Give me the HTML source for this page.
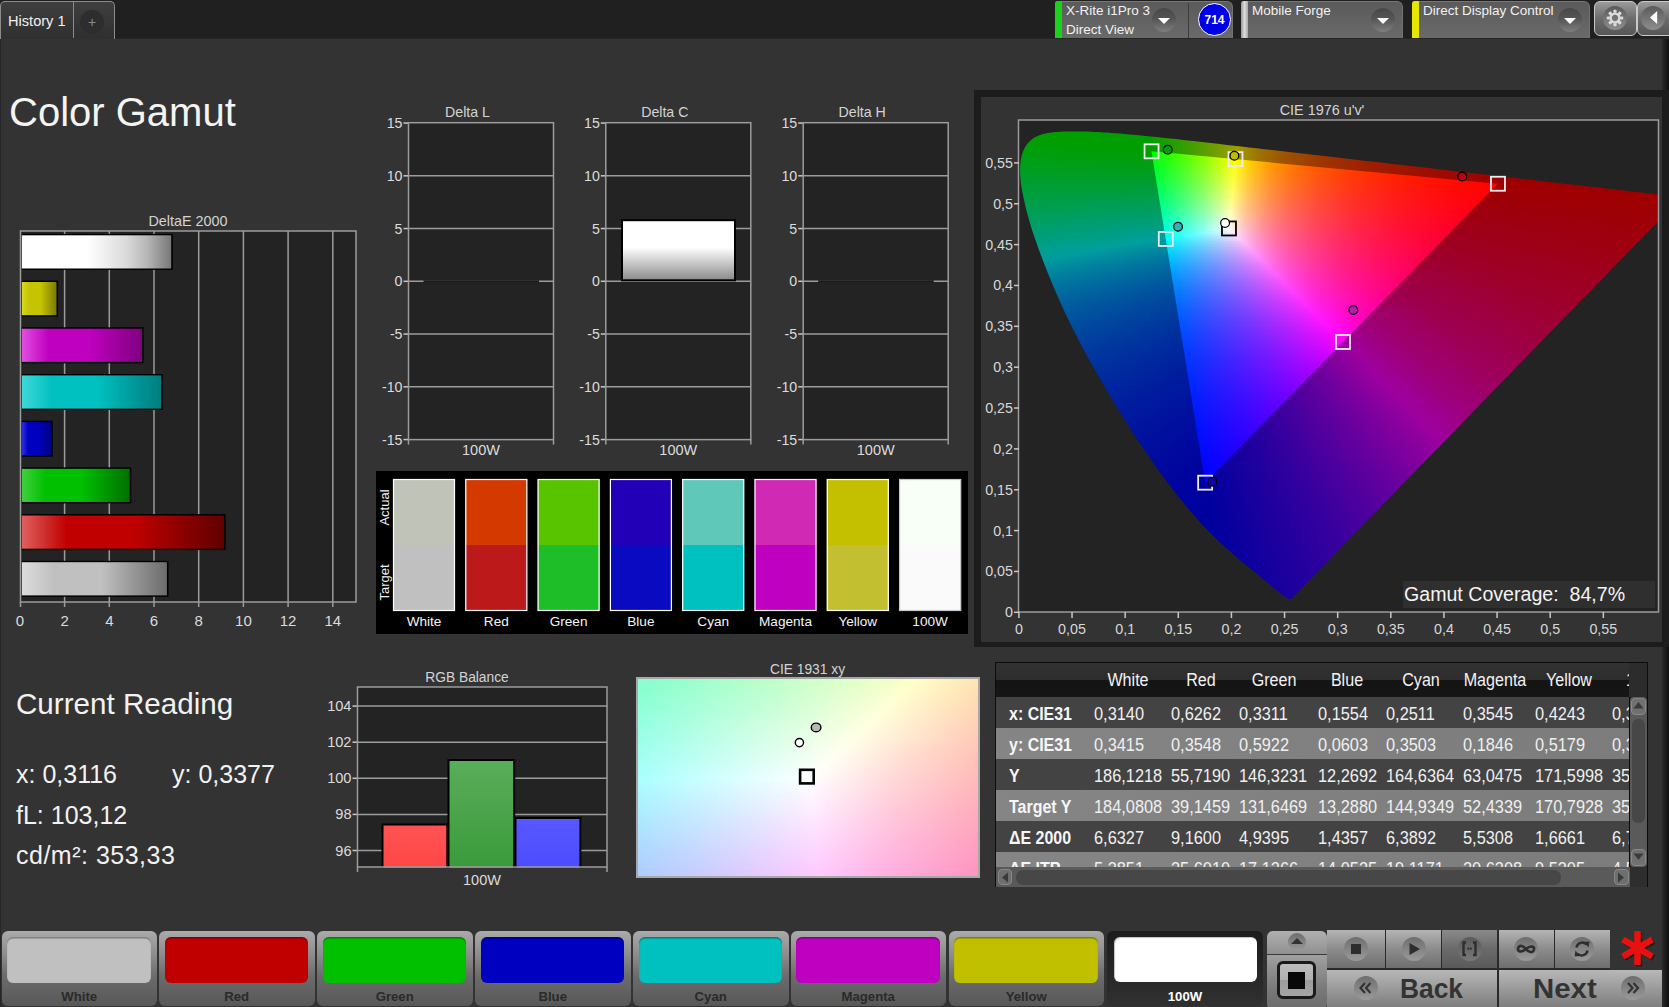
<!DOCTYPE html><html><head><meta charset="utf-8"><style>
*{box-sizing:border-box}
html,body{margin:0;padding:0}
body{width:1669px;height:1007px;overflow:hidden;position:relative;background:#333;font-family:"Liberation Sans",sans-serif;color:#e8e8e8}
.a{position:absolute}
.t{position:absolute;white-space:nowrap;line-height:1}
.rows i{position:absolute;left:0;right:0;display:block}
svg{position:absolute;overflow:visible}
</style></head><body>
<div class="a" style="left:0;top:0;width:1669px;height:39px;background:#202020"></div>
<div class="a" style="left:0;top:38px;width:1669px;height:1px;background:#262626"></div>
<div class="a" style="left:0;top:39px;width:1px;height:968px;background:#262626"></div>
<div class="a" style="left:0;top:1px;width:115px;height:38px;border:1px solid #8c8c8c;border-bottom:none;border-radius:5px 5px 0 0;background:linear-gradient(#3f3f3f,#2f2f2f)"></div>
<div class="a" style="left:73px;top:2px;width:1px;height:36px;background:#8c8c8c"></div>
<div class="a" style="left:80px;top:10px;width:24px;height:24px;border-radius:50%;background:#2d2d2d"></div>
<div class="t" style="left:92px;top:15.15px;font-size:14px;color:#8a8a8a;font-weight:400;transform:translateX(-50%);transform-origin:50% 0;">+</div>
<div class="t" style="left:8px;top:13.64px;font-size:14.6px;color:#f0f0f0;font-weight:400;">History 1</div>
<div class="a" style="left:1055px;top:1px;width:178px;height:37px;border-radius:3px 6px 0 0;border-top:1px solid #787878;border-right:1px solid #727272;background:linear-gradient(#5a5a5a,#6a6a6a)"></div>
<div class="a" style="left:1055px;top:1px;width:7px;height:37px;border-radius:3px 0 0 0;background:#19d219"></div>
<div class="t" style="left:1066px;top:3.57px;font-size:13.5px;color:#f2f2f2;font-weight:400;">X-Rite i1Pro 3</div>
<div class="t" style="left:1066px;top:22.57px;font-size:13.5px;color:#f2f2f2;font-weight:400;">Direct View</div>
<div class="a" style="left:1152px;top:7.5px;width:24px;height:24px;border-radius:50%;background:linear-gradient(#484848,#555 45%,#7e7e7e)"></div>
<svg style="left:1157px;top:16.5px" width="14" height="8"><path d="M1 1H13L7 7Z" fill="#fff"/></svg>
<div class="a" style="left:1188px;top:3px;width:1px;height:35px;background:#3c3c3c"></div>
<div class="a" style="left:1198px;top:3px;width:33px;height:33px;border-radius:50%;background:#0000e6;border:1px solid #fff"></div>
<div class="t" style="left:1214.5px;top:13.84px;font-size:12px;color:#fff;font-weight:700;transform:translateX(-50%);transform-origin:50% 0;">714</div>
<div class="a" style="left:1241px;top:1px;width:162px;height:37px;border-radius:3px 6px 0 0;border-top:1px solid #787878;border-right:1px solid #727272;background:linear-gradient(#5a5a5a,#6a6a6a)"></div>
<div class="a" style="left:1241px;top:1px;width:7px;height:37px;border-radius:3px 0 0 0;background:linear-gradient(90deg,#9a9a9a,#dcdcdc,#a8a8a8)"></div>
<div class="t" style="left:1252px;top:3.57px;font-size:13.5px;color:#f2f2f2;font-weight:400;">Mobile Forge</div>
<div class="a" style="left:1371px;top:7.5px;width:24px;height:24px;border-radius:50%;background:linear-gradient(#484848,#555 45%,#7e7e7e)"></div>
<svg style="left:1376px;top:16.5px" width="14" height="8"><path d="M1 1H13L7 7Z" fill="#fff"/></svg>
<div class="a" style="left:1412px;top:1px;width:178px;height:37px;border-radius:3px 6px 0 0;border-top:1px solid #787878;border-right:1px solid #727272;background:linear-gradient(#5a5a5a,#6a6a6a)"></div>
<div class="a" style="left:1412px;top:1px;width:7px;height:37px;border-radius:3px 0 0 0;background:#e6e600"></div>
<div class="t" style="left:1423px;top:3.57px;font-size:13.5px;color:#f2f2f2;font-weight:400;">Direct Display Control</div>
<div class="a" style="left:1558px;top:7.5px;width:24px;height:24px;border-radius:50%;background:linear-gradient(#484848,#555 45%,#7e7e7e)"></div>
<svg style="left:1563px;top:16.5px" width="14" height="8"><path d="M1 1H13L7 7Z" fill="#fff"/></svg>
<div class="a" style="left:1594px;top:1px;width:42.5px;height:35px;border:1.5px solid #c8c8c8;border-radius:6px;background:linear-gradient(#9a9a9a,#6c6c6c 50%,#565656)"></div>
<div class="a" style="left:1602.8px;top:6.4px;width:24px;height:24px;border-radius:50%;background:linear-gradient(#5a5a5a,#8e8e8e)"></div>
<svg style="left:1614.8px;top:18px" width="1" height="1"><g fill="#dcdcdc"><rect x="-1.6" y="-8.2" width="3.2" height="3" rx=".8" transform="rotate(0)"/><rect x="-1.6" y="-8.2" width="3.2" height="3" rx=".8" transform="rotate(45)"/><rect x="-1.6" y="-8.2" width="3.2" height="3" rx=".8" transform="rotate(90)"/><rect x="-1.6" y="-8.2" width="3.2" height="3" rx=".8" transform="rotate(135)"/><rect x="-1.6" y="-8.2" width="3.2" height="3" rx=".8" transform="rotate(180)"/><rect x="-1.6" y="-8.2" width="3.2" height="3" rx=".8" transform="rotate(225)"/><rect x="-1.6" y="-8.2" width="3.2" height="3" rx=".8" transform="rotate(270)"/><rect x="-1.6" y="-8.2" width="3.2" height="3" rx=".8" transform="rotate(315)"/></g><circle r="4.4" fill="none" stroke="#dcdcdc" stroke-width="2.4"/></svg>
<div class="a" style="left:1637px;top:1px;width:40px;height:35px;border:1.5px solid #c8c8c8;border-radius:6px;background:linear-gradient(#9a9a9a,#6c6c6c 50%,#565656)"></div>
<div class="a" style="left:1641px;top:6.4px;width:24px;height:24px;border-radius:50%;background:linear-gradient(#5a5a5a,#8e8e8e)"></div>
<svg style="left:1649px;top:10px" width="10" height="16"><path d="M1 7.5L8.2 1.1V13.9Z" fill="#fff"/></svg>
<div class="a" style="left:1662px;top:39px;width:7px;height:968px;background:linear-gradient(90deg,#2a2a2a,#0e0e0e)"></div>
<div class="t" style="left:9px;top:91.64px;font-size:40px;color:#f4f4f4;font-weight:400;">Color Gamut</div>
<div class="t" style="left:16px;top:688.94px;font-size:29.6px;color:#f2f2f2;font-weight:400;">Current Reading</div>
<div class="t" style="left:16px;top:762.34px;font-size:25px;color:#f2f2f2;font-weight:400;">x: 0,3116</div>
<div class="t" style="left:172px;top:762.34px;font-size:25px;color:#f2f2f2;font-weight:400;">y: 0,3377</div>
<div class="t" style="left:16px;top:802.84px;font-size:25px;color:#f2f2f2;font-weight:400;">fL: 103,12</div>
<div class="t" style="left:16px;top:842.84px;font-size:25px;color:#f2f2f2;font-weight:400;letter-spacing:.5px">cd/m²: 353,33</div>
<div class="a" style="left:974px;top:90px;width:695px;height:557px;background:#1c1c1c"></div>
<div class="a" style="left:981px;top:97px;width:681px;height:544.5px;background:#333"></div>
<div class="a" style="left:1019px;top:120px;width:639px;height:492px;background:#232323"></div>
<div class="a rows" style="left:1019px;top:120px;width:639px;height:492px;overflow:hidden"><div class="a rows" style="left:0;top:0;width:639px;height:492px;clip-path:polygon(272.7px 478.4px,272.7px 478.4px,272.7px 478.4px,272.6px 478.4px,272.6px 478.4px,272.5px 478.5px,272.5px 478.5px,272.4px 478.6px,272.3px 478.7px,272.2px 478.7px,272.2px 478.7px,272.1px 478.7px,272.0px 478.7px,271.9px 478.7px,271.8px 478.8px,271.7px 478.9px,271.6px 478.9px,271.4px 479.0px,271.3px 479.0px,271.2px 479.0px,271.0px 479.0px,270.9px 479.0px,270.7px 479.0px,270.5px 479.0px,270.3px 479.0px,270.1px 479.0px,269.9px 479.0px,269.7px 479.0px,269.4px 479.0px,269.1px 478.8px,268.8px 478.7px,268.3px 478.5px,267.8px 478.2px,267.3px 477.8px,266.6px 477.4px,265.9px 476.9px,265.1px 476.3px,264.3px 475.7px,263.4px 475.1px,262.4px 474.3px,261.4px 473.5px,260.2px 472.5px,258.9px 471.5px,257.5px 470.3px,256.0px 469.1px,254.4px 467.8px,252.8px 466.4px,251.1px 464.9px,249.2px 463.3px,247.3px 461.7px,245.2px 460.0px,243.0px 458.2px,240.6px 456.2px,238.1px 454.1px,235.3px 451.9px,232.4px 449.5px,229.4px 447.0px,226.3px 444.4px,223.0px 441.7px,219.5px 438.8px,215.9px 435.7px,212.0px 432.3px,208.0px 428.7px,203.7px 424.9px,199.3px 420.7px,194.7px 416.2px,189.9px 411.5px,184.8px 406.3px,179.3px 400.3px,173.3px 393.4px,166.8px 385.8px,159.9px 377.4px,152.8px 368.3px,145.4px 358.5px,137.7px 347.9px,129.7px 336.6px,121.6px 324.6px,113.3px 311.9px,104.7px 298.3px,96.1px 284.4px,87.7px 270.2px,79.3px 255.7px,70.8px 240.9px,62.7px 226.0px,55.1px 211.3px,48.0px 196.8px,41.3px 182.4px,35.2px 168.3px,29.5px 154.8px,24.5px 142.0px,19.9px 129.7px,15.8px 118.0px,12.2px 107.2px,9.3px 97.2px,6.8px 88.1px,4.9px 79.6px,3.3px 71.8px,2.1px 64.7px,1.4px 58.3px,1.1px 52.5px,1.1px 47.2px,1.5px 42.2px,2.2px 37.8px,3.2px 33.8px,4.5px 30.2px,6.2px 27.0px,8.1px 24.1px,10.3px 21.6px,12.7px 19.5px,15.3px 17.6px,18.1px 16.2px,21.1px 15.0px,24.2px 14.0px,27.4px 13.2px,30.8px 12.7px,34.3px 12.3px,37.9px 11.9px,41.5px 11.7px,45.3px 11.6px,49.1px 11.5px,52.8px 11.4px,56.6px 11.4px,60.4px 11.5px,64.2px 11.5px,68.0px 11.6px,71.9px 11.8px,75.8px 11.9px,79.8px 12.1px,83.9px 12.4px,88.0px 12.6px,92.2px 12.9px,96.5px 13.3px,100.9px 13.6px,105.4px 14.0px,110.0px 14.4px,114.7px 14.8px,119.5px 15.3px,124.4px 15.8px,129.4px 16.3px,134.6px 16.8px,139.8px 17.3px,145.3px 17.9px,150.9px 18.5px,156.6px 19.1px,162.4px 19.8px,168.5px 20.4px,174.6px 21.1px,180.9px 21.8px,187.4px 22.6px,194.1px 23.3px,200.9px 24.1px,207.9px 24.9px,215.1px 25.7px,222.4px 26.5px,229.9px 27.4px,237.6px 28.3px,245.5px 29.2px,253.5px 30.1px,261.7px 31.0px,270.1px 32.0px,278.6px 33.0px,287.3px 34.0px,296.2px 35.0px,305.2px 36.1px,314.4px 37.1px,323.7px 38.2px,333.1px 39.3px,342.6px 40.4px,352.2px 41.5px,361.9px 42.6px,371.7px 43.7px,381.4px 44.8px,391.1px 46.0px,400.6px 47.0px,410.0px 48.1px,419.4px 49.2px,428.7px 50.3px,438.1px 51.4px,447.3px 52.4px,456.5px 53.5px,465.4px 54.5px,474.0px 55.5px,482.5px 56.4px,490.7px 57.4px,498.6px 58.3px,506.3px 59.2px,513.8px 60.0px,521.0px 60.9px,528.0px 61.7px,534.6px 62.5px,541.0px 63.2px,547.1px 63.9px,552.9px 64.6px,558.5px 65.2px,563.9px 65.8px,569.0px 66.4px,573.9px 67.0px,578.6px 67.5px,583.0px 68.0px,587.3px 68.5px,591.5px 69.0px,595.5px 69.5px,599.4px 69.9px,603.2px 70.3px,606.8px 70.8px,610.2px 71.2px,613.6px 71.5px,616.7px 71.9px,619.7px 72.3px,622.6px 72.6px,625.2px 72.9px,627.8px 73.2px,630.2px 73.4px,632.3px 73.7px,634.2px 73.9px,636.1px 74.1px,638.3px 74.4px,641.0px 74.7px,644.0px 75.0px,646.9px 75.4px,649.3px 75.6px,651.2px 75.9px,652.6px 76.0px,653.8px 76.2px,654.9px 76.3px,656.1px 76.4px,657.1px 76.5px,658.0px 76.6px,658.9px 76.8px,660.0px 76.9px,661.0px 77.0px,662.0px 77.1px,662.6px 77.2px)"><i style="top:0px;height:2px;background:linear-gradient(90deg,#009e00 0px,#009e00 127.5px,#489e00 175.5px,#9e9d00 220.5px,#9e7500 243.5px,#9e5500 271.5px,#9e3b00 307.5px,#9e2700 351.5px,#9e1300 417.5px,#9e0500 502.5px,#9e0000 540.5px,#9e0000 639px)"></i>
<i style="top:2px;height:2px;background:linear-gradient(90deg,#009e00 0px,#019e00 128.5px,#489e00 175.5px,#9e9d00 220.5px,#9e7400 243.5px,#9e5500 271.5px,#9e3b00 307.5px,#9e2600 351.5px,#9e1300 417.5px,#9e0400 503.5px,#9e0000 539.5px,#9e0000 639px)"></i>
<i style="top:4px;height:2px;background:linear-gradient(90deg,#009e00 0px,#009e00 128.5px,#489e00 175.5px,#9e9c00 220.5px,#9e7400 243.5px,#9e5400 271.5px,#9e3a00 307.5px,#9e2600 351.5px,#9e1300 418.5px,#9e0400 504.5px,#9e0000 639px)"></i>
<i style="top:6px;height:2px;background:linear-gradient(90deg,#009e00 0px,#009e00 128.5px,#499e00 176.5px,#9e9e00 219.5px,#9e7500 242.5px,#9e5500 270.5px,#9e3b00 306.5px,#9e2600 350.5px,#9e1300 417.5px,#9e0400 503.5px,#9e0000 639px)"></i>
<i style="top:8px;height:2px;background:linear-gradient(90deg,#009e00 0px,#009e00 128.5px,#479e00 175.5px,#9e9e00 219.5px,#9e7500 242.5px,#9e5400 270.5px,#9e3a00 306.5px,#9e2600 350.5px,#9e1200 417.5px,#9e0300 504.5px,#9e0000 639px)"></i>
<i style="top:10px;height:2px;background:linear-gradient(90deg,#009e00 0px,#009e00 129.5px,#499e00 176.5px,#9e9d00 219.5px,#9e7400 242.5px,#9e5400 270.5px,#9e3a00 306.5px,#9e2500 350.5px,#9e1200 417.5px,#9e0300 505.5px,#9e0000 639px)"></i>
<i style="top:12px;height:2px;background:linear-gradient(90deg,#009e00 0px,#009e00 129.5px,#479e00 175.5px,#9e9d00 219.5px,#9e7400 242.5px,#9e5400 270.5px,#9e3900 306.5px,#9e2500 350.5px,#9e1100 418.5px,#9e0300 507.5px,#9e0000 639px)"></i>
<i style="top:14px;height:2px;background:linear-gradient(90deg,#009e00 0px,#009e00 129.5px,#459e00 174.5px,#9e9c00 219.5px,#9e7300 242.5px,#9e5300 270.5px,#9e3900 306.5px,#9e2400 350.5px,#9e1100 418.5px,#9e0200 508.5px,#9e0000 639px)"></i>
<i style="top:16px;height:2px;background:linear-gradient(90deg,#009e00 0px,#009e00 130.5px,#4b9e00 177.5px,#9e9e00 218.5px,#9e7400 241.5px,#9e5400 269.5px,#9e3a00 304.5px,#9e2500 348.5px,#9e1100 416.5px,#9e0200 506.5px,#9e0000 639px)"></i>
<i style="top:18px;height:2px;background:linear-gradient(90deg,#009e00 0px,#009e00 130.5px,#499e00 176.5px,#9e9e00 218.5px,#9e7400 241.5px,#9e5300 269.5px,#9e3900 304.5px,#9e2500 348.5px,#9e1100 417.5px,#9e0200 507.5px,#9e0000 639px)"></i>
<i style="top:20px;height:2px;background:linear-gradient(90deg,#009e02 0px,#009e00 130.5px,#499e00 176.5px,#9e9d00 218.5px,#9e7500 240.5px,#9e5400 268.5px,#9e3900 303.5px,#9e2400 348.5px,#9e1000 417.5px,#9e0200 508.5px,#9e0000 639px)"></i>
<i style="top:22px;height:2px;background:linear-gradient(90deg,#009e04 0px,#009e00 131.5px,#489e00 176.5px,#9e9d00 218.5px,#9e7400 240.5px,#9e5300 268.5px,#9e3900 303.5px,#9e2400 348.5px,#9e1000 417.5px,#9e0100 509.5px,#9e0000 639px)"></i>
<i style="top:24px;height:2px;background:linear-gradient(90deg,#009e06 0px,#009e00 131.5px,#489e00 176.5px,#9e9d00 218.5px,#9e7400 240.5px,#9e5300 268.5px,#9e3900 303.5px,#9e2300 348.5px,#9e1000 418.5px,#9e0100 510.5px,#9e0000 639px)"></i>
<i style="top:26px;height:2px;background:linear-gradient(90deg,#009e08 0px,#009e00 131.5px,#469e00 175.5px,#9e9c00 218.5px,#9e7300 240.5px,#9e5200 268.5px,#9e3800 303.5px,#9e2300 348.5px,#9e0f00 419.5px,#9e0000 512.5px,#9e0000 639px)"></i>
<i style="top:28px;height:2px;background:linear-gradient(90deg,#009e0a 0px,#009e00 132.5px,#4a9e00 177.5px,#9e9e00 217.5px,#9e7400 239.5px,#9e5300 267.5px,#9e3800 302.5px,#9e2300 347.5px,#9e0f00 417.5px,#9e0000 511.5px,#9e0000 639px)"></i>
<i style="top:30px;height:2px;background:linear-gradient(90deg,#009e0c 0px,#009e00 132.5px,#4a9e00 177.5px,#9e9e00 217.5px,#9e7400 239.5px,#9e5200 267.5px,#9e3800 302.5px,#9e2300 347.5px,#9e0f00 417.5px,#9e0000 510.5px,#9e0000 639px)"></i>
<i style="top:32px;height:2px;background:linear-gradient(90deg,#009e0e 0px,#009e02 132.5px,#489e00 176.5px,#9e9d00 217.5px,#9e7300 239.5px,#9e5200 267.5px,#9e3800 302.5px,#9e2200 347.5px,#9e0f00 416.5px,#9e0000 508.5px,#9e0000 639px)"></i>
<i style="top:34px;height:2px;background:linear-gradient(90deg,#009e10 0px,#019e05 133.5px,#489e00 176.5px,#9e9d00 217.5px,#9e7300 239.5px,#9e5100 267.5px,#9e3700 302.5px,#9e2200 347.5px,#9e0f00 416.5px,#9e0000 506.5px,#9e0000 639px)"></i>
<i style="top:36px;height:2px;background:linear-gradient(90deg,#009e12 0px,#009e08 133.5px,#489e02 176.5px,#9e9c00 217.5px,#9e7200 239.5px,#9e5100 267.5px,#9e3700 302.5px,#9e2200 347.5px,#9e0f00 415.5px,#9e0000 504.5px,#9e0000 639px)"></i>
<i style="top:38px;height:2px;background:linear-gradient(90deg,#009e14 0px,#009e0a 133.5px,#4a9e05 177.5px,#9e9e00 216.5px,#9e7300 238.5px,#9e5100 266.5px,#9e3700 301.5px,#9e2200 345.5px,#9e0f00 413.5px,#9e0000 502.5px,#9e0000 639px)"></i>
<i style="top:40px;height:2px;background:linear-gradient(90deg,#009e16 0px,#019e0d 134.5px,#499e09 177.5px,#9e9e03 216.5px,#9e7300 238.5px,#9e5100 266.5px,#9e3600 301.5px,#9e2200 345.5px,#9e0f00 412.5px,#9e0000 500.5px,#9e0000 639px)"></i>
<i style="top:42px;height:2px;background:linear-gradient(90deg,#009e19 0px,#009e10 134.5px,#499e0c 177.5px,#9e9d07 216.5px,#9e7202 238.5px,#9e5000 266.5px,#9e3600 301.5px,#9e2100 345.5px,#9e0e00 411.5px,#9e0000 498.5px,#9e0000 639px)"></i>
<i style="top:44px;height:2px;background:linear-gradient(90deg,#009e1b 0px,#009e13 134.5px,#479e0f 176.5px,#9e9d0a 216.5px,#9e7205 238.5px,#9e5001 266.5px,#9e3600 301.5px,#9e2100 345.5px,#9e0e00 410.5px,#9e0000 496.5px,#9e0000 639px)"></i>
<i style="top:46px;height:2px;background:linear-gradient(90deg,#009e1d 0px,#019e16 135.5px,#479e12 176.5px,#9e9c0e 216.5px,#9e7108 238.5px,#9e5004 265.5px,#9e3600 300.5px,#9e2100 345.5px,#9e0e00 410.5px,#9e0000 494.5px,#9e0000 639px)"></i>
<i style="top:48px;height:2px;background:linear-gradient(90deg,#009e1f 0px,#009e19 135.5px,#4b9e16 178.5px,#9e9e12 215.5px,#9e720b 237.5px,#9e5106 264.5px,#9e3602 299.5px,#9e2100 344.5px,#9e0e00 408.5px,#9e0000 492.5px,#9e0000 639px)"></i>
<i style="top:50px;height:2px;background:linear-gradient(90deg,#009e21 0px,#009e1c 135.5px,#499e19 177.5px,#9e9e16 215.5px,#9e720e 237.5px,#9e5008 264.5px,#9e3504 299.5px,#9e2000 344.5px,#9e0e00 407.5px,#9e0000 490.5px,#9e0000 639px)"></i>
<i style="top:52px;height:2px;background:linear-gradient(90deg,#009e23 0px,#019e1f 136.5px,#499e1d 177.5px,#9e9d1a 215.5px,#9e7111 237.5px,#9e500b 264.5px,#9e3505 299.5px,#9e2001 344.5px,#9e0e00 407.5px,#9e0000 488.5px,#9e0000 639px)"></i>
<i style="top:54px;height:2px;background:linear-gradient(90deg,#009e26 0px,#009e22 136.5px,#499e20 177.5px,#9e9d1e 215.5px,#9e7114 237.5px,#9e4f0d 264.5px,#9e3507 299.5px,#9e1f03 344.5px,#9e0e00 406.5px,#9e0000 487.5px,#9e0000 639px)"></i>
<i style="top:56px;height:2px;background:linear-gradient(90deg,#009e28 0px,#009e25 136.5px,#479e24 176.5px,#9e9c21 215.5px,#9e7017 237.5px,#9e4f0f 264.5px,#9e3409 299.5px,#9e1f04 344.5px,#9e0d00 406.5px,#9e0000 485.5px,#9e0000 639px)"></i>
<i style="top:58px;height:2px;background:linear-gradient(90deg,#009e2a 0px,#009e28 136.5px,#449e27 175.5px,#9e9c25 215.5px,#9e701a 237.5px,#9e4e12 264.5px,#9e340b 299.5px,#9e1f06 344.5px,#9e0d01 405.5px,#9e0000 483.5px,#9e0000 639px)"></i>
<i style="top:60px;height:2px;background:linear-gradient(90deg,#009e2d 0px,#009e2b 137.5px,#4a9e2b 178.5px,#9e9e2a 214.5px,#9e711e 236.5px,#9e4f14 263.5px,#9e340d 298.5px,#9e1f07 342.5px,#9e0d02 403.5px,#9e0000 481.5px,#9e0000 639px)"></i>
<i style="top:62px;height:2px;background:linear-gradient(90deg,#009e2f 0px,#009e2e 137.5px,#489e2e 177.5px,#9e9e2e 214.5px,#9e7221 235.5px,#9e4e17 263.5px,#9e330f 298.5px,#9e1f09 342.5px,#9e0d04 402.5px,#9e0000 479.5px,#9e0000 639px)"></i>
<i style="top:64px;height:2px;background:linear-gradient(90deg,#009e31 0px,#009e32 137.5px,#469e32 176.5px,#9e9d32 214.5px,#9e7124 235.5px,#9e4e19 263.5px,#9e3311 298.5px,#9e1e0a 342.5px,#9e0d05 401.5px,#9e0001 477.5px,#9e0000 639px)"></i>
<i style="top:66px;height:2px;background:linear-gradient(90deg,#009e34 0px,#009e35 138.5px,#489e36 177.5px,#9e9d36 214.5px,#9e7127 235.5px,#9e4d1c 263.5px,#9e3312 298.5px,#9e1e0c 342.5px,#9e0d06 400.5px,#9e0002 475.5px,#9e0000 639px)"></i>
<i style="top:68px;height:2px;background:linear-gradient(90deg,#009e36 0px,#009e38 138.5px,#469e3a 176.5px,#9e9c3a 214.5px,#9e702b 235.5px,#9e4e1e 262.5px,#9e3315 297.5px,#9e1d0d 342.5px,#9e0d07 399.5px,#9e0003 473.5px,#9e0000 639px)"></i>
<i style="top:70px;height:2px;background:linear-gradient(90deg,#009e38 0px,#009e3c 138.5px,#489e3d 177.5px,#9e9e3f 213.5px,#9e712e 234.5px,#9e4e21 261.5px,#9e3317 296.5px,#9e1d0f 341.5px,#9e0d08 398.5px,#9e0004 471.5px,#9e0000 639px)"></i>
<i style="top:72px;height:2px;background:linear-gradient(90deg,#009e3b 0px,#009e3f 139.5px,#4a9e41 178.5px,#9e9e44 213.5px,#9e7132 234.5px,#9e4e24 261.5px,#9e3219 296.5px,#9e1d10 340.5px,#9e0d0a 397.5px,#9e0005 469.5px,#9e0000 639px)"></i>
<i style="top:74px;height:2px;background:linear-gradient(90deg,#009e3d 0px,#009e43 139.5px,#479e45 177.5px,#9e9d48 213.5px,#9e7035 234.5px,#9e4d26 261.5px,#9e321b 296.5px,#9e1d12 340.5px,#9e0d0b 396.5px,#9e0006 467.5px,#9e0000 639px)"></i>
<i style="top:76px;height:2px;background:linear-gradient(90deg,#009e40 0px,#009e46 139.5px,#459e49 176.5px,#9e9d4c 213.5px,#9e7038 234.5px,#9e4d29 261.5px,#9e311c 296.5px,#9e1d13 340.5px,#9e0d0c 395.5px,#9e0007 465.5px,#9e0000 639px)"></i>
<i style="top:78px;height:2px;background:linear-gradient(90deg,#009e42 0px,#009e4a 140.5px,#479e4d 177.5px,#9e9c51 213.5px,#9e6f3c 234.5px,#9e4c2b 261.5px,#9e311e 296.5px,#9e1c15 340.5px,#9e0c0d 394.5px,#9e0008 463.5px,#9e0000 639px)"></i>
<i style="top:80px;height:2px;background:linear-gradient(90deg,#009e45 0px,#009e4e 140.5px,#459e51 176.5px,#9e9c55 213.5px,#9e6f3f 234.5px,#9e4c2e 261.5px,#9e3020 296.5px,#9e1c16 340.5px,#9e0c0f 393.5px,#9e0009 461.5px,#9e0001 639px)"></i>
<i style="top:82px;height:2px;background:linear-gradient(90deg,#009e47 0px,#009e51 140.5px,#479e56 177.5px,#9e9e5b 212.5px,#9e7043 233.5px,#9e4c31 260.5px,#9e3123 295.5px,#9e1c18 339.5px,#9e0c10 392.5px,#9e000a 459.5px,#9e0001 639px)"></i>
<i style="top:84px;height:2px;background:linear-gradient(90deg,#009e4a 0px,#009e55 141.5px,#499e5a 178.5px,#9e9d5f 212.5px,#9e6f46 233.5px,#9e4c33 260.5px,#9e3025 295.5px,#9e1b19 339.5px,#9e0c11 392.5px,#9e000b 458.5px,#9e0002 639px)"></i>
<i style="top:86px;height:2px;background:linear-gradient(90deg,#009e4c 0px,#009e59 141.5px,#479e5e 177.5px,#9e9d64 212.5px,#9e6f4a 233.5px,#9e4b36 260.5px,#9e3027 294.5px,#9e1b1b 339.5px,#9e0c12 391.5px,#9e000c 456.5px,#9e0002 639px)"></i>
<i style="top:88px;height:2px;background:linear-gradient(90deg,#009e4f 0px,#009e5d 141.5px,#469e62 177.5px,#9e9c69 212.5px,#9e835a 222.5px,#9e6e4d 233.5px,#9e4b39 260.5px,#9e3029 294.5px,#9e1b1d 339.5px,#9e0c14 390.5px,#9e000d 454.5px,#9e0003 639px)"></i>
<i style="top:90px;height:2px;background:linear-gradient(90deg,#009e51 0px,#019e61 142.5px,#469e67 177.5px,#9e9c6d 212.5px,#9e835e 222.5px,#9e6d51 233.5px,#9e4b3c 259.5px,#9e302b 293.5px,#9e1a1e 338.5px,#9e0c15 389.5px,#9e000e 452.5px,#9e0004 639px)"></i>
<i style="top:92px;height:2px;background:linear-gradient(90deg,#009e54 0px,#009e65 142.5px,#489e6c 178.5px,#9e9e74 211.5px,#9e7057 231.5px,#9e4b3f 258.5px,#9e302e 292.5px,#9e1a20 337.5px,#9e0c17 387.5px,#9e000f 450.5px,#9e0004 639px)"></i>
<i style="top:94px;height:2px;background:linear-gradient(90deg,#009e57 0px,#009e69 142.5px,#489e70 178.5px,#9e9d79 211.5px,#9e705a 231.5px,#9e4b42 258.5px,#9e3030 292.5px,#9e1a22 337.5px,#9e0010 448.5px,#9e0005 639px)"></i>
<i style="top:96px;height:2px;background:linear-gradient(90deg,#009e59 0px,#019e6d 143.5px,#489e75 178.5px,#9e9d7d 211.5px,#9e6f5e 231.5px,#9e4a45 258.5px,#9e2f32 292.5px,#9e1a23 337.5px,#9e0012 446.5px,#9e0005 639px)"></i>
<i style="top:98px;height:2px;background:linear-gradient(90deg,#009e5c 0px,#009e71 143.5px,#489e79 178.5px,#9e9c82 211.5px,#9e6e62 231.5px,#9e4a47 258.5px,#9e2f34 292.5px,#9e1925 337.5px,#9e0013 444.5px,#9e0006 639px)"></i>
<i style="top:100px;height:2px;background:linear-gradient(90deg,#009e5f 0px,#009e75 143.5px,#469e7e 177.5px,#9e9c87 211.5px,#9e6e65 231.5px,#9e494a 258.5px,#9e2e36 292.5px,#9e1926 337.5px,#9e0014 442.5px,#9e0007 639px)"></i>
<i style="top:102px;height:2px;background:linear-gradient(90deg,#009e61 0px,#019e79 144.5px,#4a9e83 179.5px,#9e9e8f 210.5px,#9e867c 219.5px,#9e6f6a 230.5px,#9e4b4f 256.5px,#9e2f39 290.5px,#9e1928 335.5px,#9e0015 440.5px,#9e0007 639px)"></i>
<i style="top:104px;height:2px;background:linear-gradient(90deg,#009e64 0px,#009e7e 144.5px,#4a9e88 179.5px,#9e9e94 210.5px,#9e8580 219.5px,#9e6e6e 230.5px,#9e4a51 256.5px,#9e2e3b 290.5px,#9e192a 335.5px,#9e0017 438.5px,#9e0008 639px)"></i>
<i style="top:106px;height:2px;background:linear-gradient(90deg,#009e67 0px,#009e82 144.5px,#489e8d 178.5px,#9e9d99 210.5px,#9e8585 219.5px,#9e6e72 230.5px,#9e4a54 256.5px,#9e2e3d 290.5px,#9e182c 335.5px,#9e0018 436.5px,#9e0008 639px)"></i>
<i style="top:108px;height:2px;background:linear-gradient(90deg,#009e6a 0px,#019e87 145.5px,#439e91 176.5px,#8a9e9d 203.5px,#9e999c 211.5px,#9e8287 220.5px,#9e6b74 231.5px,#9e4856 257.5px,#9e2d3f 291.5px,#9e172d 336.5px,#9e0019 434.5px,#9e0009 639px)"></i>
<i style="top:110px;height:2px;background:linear-gradient(90deg,#009e6d 0px,#009e7a 80.5px,#009e8b 145.5px,#329e94 169.5px,#699e9d 191.5px,#9e939c 213.5px,#9e6775 233.5px,#9e4457 260.5px,#9e2a3f 295.5px,#9e162d 340.5px,#9e001a 432.5px,#9e000a 639px)"></i>
<i style="top:112px;height:2px;background:linear-gradient(90deg,#009e6f 0px,#009e7e 80.5px,#009e90 145.5px,#279e97 164.5px,#589d9e 185.5px,#9e8d9c 215.5px,#9e6275 236.5px,#9e4157 263.5px,#9e2840 298.5px,#9e142e 343.5px,#9e001c 430.5px,#9e000a 639px)"></i>
<i style="top:114px;height:2px;background:linear-gradient(90deg,#009e72 0px,#009e82 80.5px,#009e94 145.5px,#3a9d9e 173.5px,#9e879c 217.5px,#9e5e75 238.5px,#9e3e58 265.5px,#9e2641 300.5px,#9e132f 346.5px,#9e001d 429.5px,#9e000b 639px)"></i>
<i style="top:116px;height:2px;background:linear-gradient(90deg,#009e75 0px,#009e85 81.5px,#009e99 146.5px,#1f9d9e 161.5px,#9e819c 219.5px,#9e5a76 240.5px,#9e3b58 268.5px,#9e2441 303.5px,#9e112f 349.5px,#9e001e 427.5px,#9e000b 639px)"></i>
<i style="top:118px;height:2px;background:linear-gradient(90deg,#009e78 0px,#009e88 78.5px,#009e9e 146.5px,#9e7c9c 221.5px,#9e5675 243.5px,#9e3858 271.5px,#9e2141 307.5px,#9e1030 353.5px,#9e0020 425.5px,#9e000c 639px)"></i>
<i style="top:120px;height:2px;background:linear-gradient(90deg,#009e7b 0px,#009e8a 71.5px,#009e9d 131.5px,#00999e 146.5px,#3d8d9e 177.5px,#9e779c 223.5px,#9e5276 245.5px,#9e3659 273.5px,#9e2042 309.5px,#9e0e30 356.5px,#9e0021 423.5px,#9e000d 639px)"></i>
<i style="top:122px;height:2px;background:linear-gradient(90deg,#009e7e 0px,#009e9d 119.5px,#00959e 147.5px,#9e729c 225.5px,#9e4f77 247.5px,#9e3359 276.5px,#9e1e43 312.5px,#9e0d31 359.5px,#9e0023 421.5px,#9e0016 514.5px,#9e000d 639px)"></i>
<i style="top:124px;height:2px;background:linear-gradient(90deg,#009e81 0px,#009e9d 107.5px,#00909e 147.5px,#9e6e9c 227.5px,#9e4c78 249.5px,#9e315a 278.5px,#9e1c43 315.5px,#9e0c31 363.5px,#9e0024 419.5px,#9e0017 512.5px,#9e000e 639px)"></i>
<i style="top:126px;height:2px;background:linear-gradient(90deg,#009e84 0px,#009e9d 95.5px,#008c9e 147.5px,#3d7f9e 180.5px,#9e699c 229.5px,#9e4b7b 249.5px,#9e335f 275.5px,#9e1f49 307.5px,#9e1038 347.5px,#9e0026 417.5px,#9e0018 511.5px,#9e000e 639px)"></i>
<i style="top:128px;height:2px;background:linear-gradient(90deg,#009e87 0px,#009e9d 83.5px,#00889e 148.5px,#9e659c 231.5px,#9e487b 251.5px,#9e3160 277.5px,#9e1e4a 309.5px,#9e0f38 350.5px,#9e0027 415.5px,#9e0019 510.5px,#9e000f 639px)"></i>
<i style="top:130px;height:2px;background:linear-gradient(90deg,#009e8a 0px,#009d9e 76.5px,#00849e 148.5px,#9e619c 233.5px,#9e447b 254.5px,#9e2e60 280.5px,#9e1c4a 312.5px,#9e0e39 352.5px,#9e0029 413.5px,#9e001a 508.5px,#9e0010 639px)"></i>
<i style="top:132px;height:2px;background:linear-gradient(90deg,#009e8e 0px,#009d9e 64.5px,#00819e 148.5px,#3e739e 184.5px,#9e5d9c 235.5px,#9e427b 256.5px,#9e2c61 282.5px,#9e1b4b 314.5px,#9e0d3a 354.5px,#9e002a 411.5px,#9e001b 507.5px,#9e0010 639px)"></i>
<i style="top:134px;height:2px;background:linear-gradient(90deg,#009e91 0px,#009d9e 53.5px,#007d9e 149.5px,#9e599d 237.5px,#9e3f7c 258.5px,#9e2a61 284.5px,#9e194c 317.5px,#9e0b3a 357.5px,#9e002c 409.5px,#9e001c 506.5px,#9e0011 639px)"></i>
<i style="top:136px;height:2px;background:linear-gradient(90deg,#009e94 0px,#009d9e 41.5px,#00799e 149.5px,#9e559d 239.5px,#9e3c7c 260.5px,#9e2862 286.5px,#9e184c 319.5px,#9e0a3b 359.5px,#9e002e 407.5px,#9e0022 469.5px,#9e0012 639px)"></i>
<i style="top:138px;height:2px;background:linear-gradient(90deg,#009e97 0px,#009d9e 29.5px,#00769e 149.5px,#40689e 188.5px,#9e529d 241.5px,#9e3a7d 262.5px,#9e2662 289.5px,#9e164d 321.5px,#9e093c 361.5px,#9e002f 405.5px,#9e0023 471.5px,#9e0012 639px)"></i>
<i style="top:140px;height:2px;background:linear-gradient(90deg,#009e9a 0px,#009b9e 25.5px,#00739e 150.5px,#9e4e9d 243.5px,#9e377c 265.5px,#9e2463 291.5px,#9e154e 323.5px,#9e093d 363.5px,#9e0031 403.5px,#9e0024 472.5px,#9e0013 639px)"></i>
<i style="top:142px;height:2px;background:linear-gradient(90deg,#009e9d 0px,#00709e 150.5px,#9e4b9d 245.5px,#9e347d 267.5px,#9e2263 293.5px,#9e144f 325.5px,#9e083e 365.5px,#9e0033 401.5px,#9e0024 474.5px,#9e0013 639px)"></i>
<i style="top:144px;height:2px;background:linear-gradient(90deg,#009b9e 0px,#006d9e 150.5px,#415e9e 192.5px,#9e489d 247.5px,#9e327d 269.5px,#9e2164 295.5px,#9e134f 327.5px,#9e073e 367.5px,#9e0034 399.5px,#9e0025 475.5px,#9e0014 639px)"></i>
<i style="top:146px;height:2px;background:linear-gradient(90deg,#00989e 0px,#006a9e 151.5px,#9e459d 249.5px,#9e307e 271.5px,#9e1f64 298.5px,#9e1150 330.5px,#9e063f 370.5px,#9e0036 397.5px,#9e0025 478.5px,#9e0015 639px)"></i>
<i style="top:148px;height:2px;background:linear-gradient(90deg,#00959e 0px,#00679e 151.5px,#9e429d 251.5px,#9e2e7e 273.5px,#9e1d65 300.5px,#9e1050 332.5px,#9e053f 372.5px,#9e0038 396.5px,#9e0026 479.5px,#9e0015 639px)"></i>
<i style="top:150px;height:2px;background:linear-gradient(90deg,#00929e 0px,#00659e 151.5px,#43559e 196.5px,#9e3f9d 253.5px,#9e2c7e 275.5px,#9e1c65 302.5px,#9e0f51 334.5px,#9e0440 374.5px,#9e003a 394.5px,#9e0027 481.5px,#9e0016 639px)"></i>
<i style="top:152px;height:2px;background:linear-gradient(90deg,#008f9e 0px,#00629e 152.5px,#9e3c9d 255.5px,#9e2a7f 277.5px,#9e1a66 304.5px,#9e0d51 337.5px,#9e0341 376.5px,#9e0028 482.5px,#9e0016 639px)"></i>
<i style="top:154px;height:2px;background:linear-gradient(90deg,#008c9e 0px,#005f9e 152.5px,#9e399d 257.5px,#9e287f 279.5px,#9e1967 306.5px,#9e0c52 339.5px,#9e0242 378.5px,#9e0028 483.5px,#9e0017 639px)"></i>
<i style="top:156px;height:2px;background:linear-gradient(90deg,#008a9e 0px,#005d9e 152.5px,#444d9e 200.5px,#9e379d 259.5px,#9e2680 281.5px,#9e1767 308.5px,#9e0b53 341.5px,#9e0142 380.5px,#9e0029 485.5px,#9e0018 639px)"></i>
<i style="top:158px;height:2px;background:linear-gradient(90deg,#00879e 0px,#005b9e 153.5px,#9e349d 261.5px,#9e2480 283.5px,#9e1668 310.5px,#9e0a53 343.5px,#9e0143 382.5px,#9e002a 486.5px,#9e0018 639px)"></i>
<i style="top:160px;height:2px;background:linear-gradient(90deg,#00849e 0px,#00589e 153.5px,#9e329d 263.5px,#9e2281 285.5px,#9e1468 312.5px,#9e0954 345.5px,#9e0044 384.5px,#9e002a 488.5px,#9e0019 639px)"></i>
<i style="top:162px;height:2px;background:linear-gradient(90deg,#00829e 0px,#00569e 153.5px,#45469e 204.5px,#9e309d 265.5px,#9e2080 288.5px,#9e1368 315.5px,#9e0855 347.5px,#9e0044 386.5px,#9e002b 489.5px,#9e001a 639px)"></i>
<i style="top:164px;height:2px;background:linear-gradient(90deg,#007f9e 0px,#00549e 154.5px,#9e2d9d 267.5px,#9e1e80 290.5px,#9e1169 317.5px,#9e0755 349.5px,#9e0045 388.5px,#9e002c 491.5px,#9e001a 639px)"></i>
<i style="top:166px;height:2px;background:linear-gradient(90deg,#007d9e 0px,#00529e 154.5px,#9e2b9d 269.5px,#9e1c81 292.5px,#9e1069 319.5px,#9e0656 351.5px,#9e0045 390.5px,#9e002c 492.5px,#9e001b 639px)"></i>
<i style="top:168px;height:2px;background:linear-gradient(90deg,#007b9e 0px,#00509e 154.5px,#463f9e 208.5px,#9e299d 271.5px,#9e1b81 294.5px,#9e0f6a 321.5px,#9e004d 374.5px,#9e0046 392.5px,#9e002d 493.5px,#9e001b 639px)"></i>
<i style="top:170px;height:2px;background:linear-gradient(90deg,#00789e 0px,#004e9e 155.5px,#9e279d 273.5px,#9e1981 296.5px,#9e0e6a 323.5px,#9e004f 373.5px,#9e0047 394.5px,#9e002e 495.5px,#9e001c 639px)"></i>
<i style="top:172px;height:2px;background:linear-gradient(90deg,#00769e 0px,#004c9e 155.5px,#9e259d 275.5px,#9e1782 298.5px,#9e0c6b 325.5px,#9e0051 371.5px,#9e0047 396.5px,#9e002e 496.5px,#9e001d 639px)"></i>
<i style="top:174px;height:2px;background:linear-gradient(90deg,#00749e 0px,#004a9e 155.5px,#45399e 211.5px,#9e239d 277.5px,#9e1682 300.5px,#9e0b6b 327.5px,#9e0054 369.5px,#9e0048 398.5px,#9e002f 498.5px,#9e001d 639px)"></i>
<i style="top:176px;height:2px;background:linear-gradient(90deg,#00729e 0px,#00489e 156.5px,#9e219d 279.5px,#9e1482 302.5px,#9e0a6c 329.5px,#9e0056 367.5px,#9e0049 400.5px,#9e0030 499.5px,#9e001e 639px)"></i>
<i style="top:178px;height:2px;background:linear-gradient(90deg,#00709e 0px,#00479e 156.5px,#9e1f9d 281.5px,#9e1383 304.5px,#9e096c 331.5px,#9e0058 366.5px,#9e004a 401.5px,#9e0030 500.5px,#9e001f 639px)"></i>
<i style="top:180px;height:2px;background:linear-gradient(90deg,#006e9e 0px,#00459e 156.5px,#46339e 215.5px,#9e1d9d 283.5px,#9e1283 306.5px,#9e086d 333.5px,#9e005b 364.5px,#9e004a 403.5px,#9e0031 501.5px,#9e001f 639px)"></i>
<i style="top:182px;height:2px;background:linear-gradient(90deg,#006c9e 0px,#00439e 157.5px,#9e1b9d 285.5px,#9e1083 308.5px,#9e076d 335.5px,#9e005d 362.5px,#9e004b 405.5px,#9e0032 502.5px,#9e0020 639px)"></i>
<i style="top:184px;height:2px;background:linear-gradient(90deg,#006a9e 0px,#00429e 157.5px,#9e1a9d 287.5px,#9e0f84 310.5px,#9e066e 337.5px,#9e0060 360.5px,#9e004b 407.5px,#9e0032 504.5px,#9e0020 639px)"></i>
<i style="top:186px;height:2px;background:linear-gradient(90deg,#00689e 0px,#00409e 157.5px,#472e9e 219.5px,#9e189d 289.5px,#9e0e84 312.5px,#9e056e 339.5px,#9e0063 358.5px,#9e004c 409.5px,#9e0033 505.5px,#9e0021 639px)"></i>
<i style="top:188px;height:2px;background:linear-gradient(90deg,#00679e 0px,#003f9e 158.5px,#9e169d 291.5px,#9e0c84 314.5px,#9e046f 341.5px,#9e004c 411.5px,#9e0034 507.5px,#9e0022 639px)"></i>
<i style="top:190px;height:2px;background:linear-gradient(90deg,#00659e 0px,#003d9e 158.5px,#9e159d 293.5px,#9e0b84 316.5px,#9e026e 344.5px,#9e004d 413.5px,#9e0034 508.5px,#9e0022 639px)"></i>
<i style="top:192px;height:2px;background:linear-gradient(90deg,#00639e 0px,#003c9e 158.5px,#48299e 223.5px,#9e139d 295.5px,#9e0a85 318.5px,#9e0270 345.5px,#9e004e 414.5px,#9e0035 509.5px,#9e0023 639px)"></i>
<i style="top:194px;height:2px;background:linear-gradient(90deg,#00619e 0px,#003a9e 159.5px,#9e119d 297.5px,#9e0885 320.5px,#9e0170 347.5px,#9e004e 416.5px,#9e0036 510.5px,#9e0024 639px)"></i>
<i style="top:196px;height:2px;background:linear-gradient(90deg,#00609e 0px,#00399e 159.5px,#9e109d 299.5px,#9e0785 322.5px,#9e0070 349.5px,#9e004f 418.5px,#9e0036 511.5px,#9e0024 639px)"></i>
<i style="top:198px;height:2px;background:linear-gradient(90deg,#005e9e 0px,#00389e 159.5px,#49259e 227.5px,#9e0e9d 301.5px,#9e0685 325.5px,#9e0070 352.5px,#9e004f 420.5px,#9e0037 513.5px,#9e0025 639px)"></i>
<i style="top:200px;height:2px;background:linear-gradient(90deg,#005d9e 0px,#00369e 160.5px,#9e0d9d 303.5px,#9e0585 327.5px,#9e0071 354.5px,#9e0050 422.5px,#9e0038 514.5px,#9e0026 639px)"></i>
<i style="top:202px;height:2px;background:linear-gradient(90deg,#005b9e 0px,#00359e 160.5px,#4a229e 231.5px,#9e0c9e 305.5px,#9e0486 328.5px,#9e0072 355.5px,#9e0051 423.5px,#9e0038 515.5px,#9e0026 639px)"></i>
<i style="top:204px;height:2px;background:linear-gradient(90deg,#005a9e 0px,#00349e 160.5px,#49219e 231.5px,#9e0a9e 307.5px,#9e007e 340.5px,#9e0072 357.5px,#9e0051 425.5px,#9e0039 516.5px,#9e0027 639px)"></i>
<i style="top:206px;height:2px;background:linear-gradient(90deg,#00589e 0px,#00329e 161.5px,#4a1f9e 233.5px,#9e099e 309.5px,#9e0082 338.5px,#9e0072 359.5px,#9e0052 427.5px,#9e003a 517.5px,#9e0028 639px)"></i>
<i style="top:208px;height:2px;background:linear-gradient(90deg,#00579e 0px,#00319e 161.5px,#4a1e9e 234.5px,#9e089e 311.5px,#9e0085 336.5px,#9e0072 362.5px,#9e0052 429.5px,#9e003a 519.5px,#9e0028 639px)"></i>
<i style="top:210px;height:2px;background:linear-gradient(90deg,#00559e 0px,#00309e 161.5px,#4a1d9e 235.5px,#9e069e 313.5px,#9e0089 334.5px,#9e0073 363.5px,#9e0053 430.5px,#9e003b 519.5px,#9e0029 639px)"></i>
<i style="top:212px;height:2px;background:linear-gradient(90deg,#00549e 0px,#002f9e 161.5px,#481c9e 234.5px,#9e059e 315.5px,#9e008c 333.5px,#9e0073 365.5px,#9e0053 432.5px,#9e003b 521.5px,#9e0029 639px)"></i>
<i style="top:214px;height:2px;background:linear-gradient(90deg,#00539e 0px,#002e9e 162.5px,#4b1a9e 238.5px,#9e049e 317.5px,#9e0074 367.5px,#9e0054 434.5px,#9e003c 522.5px,#9e002a 639px)"></i>
<i style="top:216px;height:2px;background:linear-gradient(90deg,#00519e 0px,#002d9e 162.5px,#49199e 238.5px,#9e039e 319.5px,#9e0074 369.5px,#9e0055 435.5px,#9e003d 522.5px,#9e002b 639px)"></i>
<i style="top:218px;height:2px;background:linear-gradient(90deg,#00509e 0px,#002c9e 162.5px,#48189e 238.5px,#9e029e 321.5px,#9e0075 371.5px,#9e0055 437.5px,#9e003d 524.5px,#9e002b 639px)"></i>
<i style="top:220px;height:2px;background:linear-gradient(90deg,#004f9e 0px,#002a9e 163.5px,#4b179e 242.5px,#9e009e 323.5px,#9e0075 373.5px,#9e0056 439.5px,#9e003e 525.5px,#9e002c 639px)"></i>
<i style="top:222px;height:2px;background:linear-gradient(90deg,#004e9e 0px,#00299e 163.5px,#4a169e 242.5px,#9e009e 325.5px,#9e0075 375.5px,#9e0056 440.5px,#9e003f 526.5px,#9e002d 639px)"></i>
<i style="top:224px;height:2px;background:linear-gradient(90deg,#004c9e 0px,#00299e 163.5px,#48159e 241.5px,#9e009e 327.5px,#9e0076 377.5px,#9e0057 442.5px,#9e003f 527.5px,#9e002d 639px)"></i>
<i style="top:226px;height:2px;background:linear-gradient(90deg,#004b9e 0px,#00279e 164.5px,#4b149e 245.5px,#9e009e 329.5px,#9e0076 379.5px,#9e0057 444.5px,#9e0040 528.5px,#9e002e 639px)"></i>
<i style="top:228px;height:2px;background:linear-gradient(90deg,#004a9e 0px,#00269e 164.5px,#8f009e 316.5px,#9e009e 331.5px,#9e0076 381.5px,#9e0058 445.5px,#9e0041 529.5px,#9e002f 639px)"></i>
<i style="top:230px;height:2px;background:linear-gradient(90deg,#00499e 0px,#00269e 164.5px,#8b009e 314.5px,#9e009e 333.5px,#9e0076 383.5px,#9e0059 447.5px,#9e0041 530.5px,#9e002f 639px)"></i>
<i style="top:232px;height:2px;background:linear-gradient(90deg,#00489e 0px,#00249e 165.5px,#87009e 312.5px,#9e009e 335.5px,#9e0077 385.5px,#9e0059 449.5px,#9e0042 532.5px,#9e0030 639px)"></i>
<i style="top:234px;height:2px;background:linear-gradient(90deg,#00479e 0px,#00249e 165.5px,#84009e 310.5px,#9e009e 337.5px,#9e0077 387.5px,#9e005a 450.5px,#9e0043 532.5px,#9e0031 639px)"></i>
<i style="top:236px;height:2px;background:linear-gradient(90deg,#00459e 0px,#00239e 165.5px,#80009e 308.5px,#9e009e 339.5px,#9e0077 389.5px,#9e005a 452.5px,#9e0043 533.5px,#9e0031 639px)"></i>
<i style="top:238px;height:2px;background:linear-gradient(90deg,#00449e 0px,#00229e 166.5px,#7d009e 306.5px,#9e009e 341.5px,#9e0078 391.5px,#9e005b 454.5px,#9e0044 535.5px,#9e0032 639px)"></i>
<i style="top:240px;height:2px;background:linear-gradient(90deg,#00439e 0px,#00219e 166.5px,#79009e 304.5px,#9e009e 343.5px,#9e0079 392.5px,#9e005b 455.5px,#9e0045 535.5px,#9e0033 639px)"></i>
<i style="top:242px;height:2px;background:linear-gradient(90deg,#00429e 0px,#00209e 166.5px,#77009e 303.5px,#9e009e 345.5px,#9e0079 394.5px,#9e005c 457.5px,#9e0045 537.5px,#9e0033 639px)"></i>
<i style="top:244px;height:2px;background:linear-gradient(90deg,#00419e 0px,#001f9e 167.5px,#73009e 301.5px,#9e009e 347.5px,#9e0079 396.5px,#9e005c 458.5px,#9e0046 537.5px,#9e0034 639px)"></i>
<i style="top:246px;height:2px;background:linear-gradient(90deg,#00409e 0px,#001e9e 167.5px,#70009e 299.5px,#9e009e 349.5px,#9e0079 398.5px,#9e005d 460.5px,#9e0046 538.5px,#9e0035 639px)"></i>
<i style="top:248px;height:2px;background:linear-gradient(90deg,#003f9e 0px,#001e9e 167.5px,#6d009e 297.5px,#9e009e 351.5px,#9e007a 400.5px,#9e005e 461.5px,#9e0047 539.5px,#9e0035 639px)"></i>
<i style="top:250px;height:2px;background:linear-gradient(90deg,#003e9e 0px,#001d9e 168.5px,#6a009e 295.5px,#9e009e 353.5px,#9e007a 402.5px,#9e005e 463.5px,#9e0048 540.5px,#9e0036 639px)"></i>
<i style="top:252px;height:2px;background:linear-gradient(90deg,#003d9e 0px,#001c9e 168.5px,#67009e 293.5px,#9e009e 355.5px,#9e007a 404.5px,#9e005e 465.5px,#9e0048 542.5px,#9e0037 639px)"></i>
<i style="top:254px;height:2px;background:linear-gradient(90deg,#003d9e 0px,#001b9e 168.5px,#64009e 291.5px,#9e009e 357.5px,#9e007a 406.5px,#9e005f 466.5px,#9e0049 542.5px,#9e0037 639px)"></i>
<i style="top:256px;height:2px;background:linear-gradient(90deg,#003c9e 0px,#001b9e 169.5px,#61009e 289.5px,#9e009e 359.5px,#9e007b 408.5px,#9e005f 468.5px,#9e004a 543.5px,#9e0038 639px)"></i>
<i style="top:258px;height:2px;background:linear-gradient(90deg,#003b9e 0px,#001a9e 169.5px,#5e009e 287.5px,#9e009e 361.5px,#9e007c 409.5px,#9e0060 469.5px,#9e004a 544.5px,#9e0039 639px)"></i>
<i style="top:260px;height:2px;background:linear-gradient(90deg,#003a9e 0px,#00199e 169.5px,#5b009e 285.5px,#9e009e 363.5px,#9e007c 411.5px,#9e0060 471.5px,#9e004b 545.5px,#9e0039 639px)"></i>
<i style="top:262px;height:2px;background:linear-gradient(90deg,#00399e 0px,#00189e 170.5px,#59009e 283.5px,#9e009e 365.5px,#9e007c 413.5px,#9e0061 472.5px,#9e004b 546.5px,#9e003a 639px)"></i>
<i style="top:264px;height:2px;background:linear-gradient(90deg,#00389e 0px,#00189e 170.5px,#56009e 281.5px,#9e009e 367.5px,#9e007c 415.5px,#9e0062 474.5px,#9e004c 547.5px,#9e003b 639px)"></i>
<i style="top:266px;height:2px;background:linear-gradient(90deg,#00379e 0px,#00179e 170.5px,#53009e 279.5px,#9e009e 369.5px,#9e007d 417.5px,#9e0062 475.5px,#9e004d 548.5px,#9e003b 639px)"></i>
<i style="top:268px;height:2px;background:linear-gradient(90deg,#00369e 0px,#00169e 171.5px,#51009e 277.5px,#9e009e 371.5px,#9e007d 419.5px,#9e0063 477.5px,#9e004d 549.5px,#9e003c 639px)"></i>
<i style="top:270px;height:2px;background:linear-gradient(90deg,#00369e 0px,#00169e 171.5px,#4f009e 276.5px,#9e009e 373.5px,#9e007e 420.5px,#9e0063 478.5px,#9e004e 550.5px,#9e003d 639px)"></i>
<i style="top:272px;height:2px;background:linear-gradient(90deg,#00359e 0px,#00159e 171.5px,#4d009e 274.5px,#9e009e 375.5px,#9e007e 422.5px,#9e0064 480.5px,#9e004e 551.5px,#9e003d 639px)"></i>
<i style="top:274px;height:2px;background:linear-gradient(90deg,#00349e 0px,#00149e 172.5px,#4a009e 272.5px,#9e009e 377.5px,#9e007e 424.5px,#9e0064 481.5px,#9e004f 551.5px,#9e003e 639px)"></i>
<i style="top:276px;height:2px;background:linear-gradient(90deg,#00339e 0px,#00149e 172.5px,#48009e 270.5px,#9e009e 379.5px,#9e007e 426.5px,#9e0065 483.5px,#9e0050 553.5px,#9e003f 639px)"></i>
<i style="top:278px;height:2px;background:linear-gradient(90deg,#00329e 0px,#00139e 172.5px,#45009e 268.5px,#9e009e 381.5px,#9e007e 428.5px,#9e0065 484.5px,#9e0050 553.5px,#9e003f 639px)"></i>
<i style="top:280px;height:2px;background:linear-gradient(90deg,#00329e 0px,#00129e 173.5px,#43009e 266.5px,#9e009e 383.5px,#9e007f 430.5px,#9e0066 486.5px,#9e0051 555.5px,#9e0040 639px)"></i>
<i style="top:282px;height:2px;background:linear-gradient(90deg,#00319e 0px,#00129e 173.5px,#41009e 264.5px,#9e009e 385.5px,#9e007f 431.5px,#9e0066 487.5px,#9e0052 555.5px,#9e0041 639px)"></i>
<i style="top:284px;height:2px;background:linear-gradient(90deg,#00309e 0px,#00119e 173.5px,#3f009e 262.5px,#9e009e 387.5px,#9e0080 433.5px,#9e0067 489.5px,#9e0052 556.5px,#9e0041 639px)"></i>
<i style="top:286px;height:2px;background:linear-gradient(90deg,#00309e 0px,#00119e 174.5px,#3c009e 260.5px,#9e009e 389.5px,#9e0080 435.5px,#9e0067 490.5px,#9e0053 557.5px,#9e0042 639px)"></i>
<i style="top:288px;height:2px;background:linear-gradient(90deg,#002f9e 0px,#00109e 174.5px,#3a009e 258.5px,#9e009e 391.5px,#9e0080 437.5px,#9e0067 492.5px,#9e0053 558.5px,#9e0043 639px)"></i>
<i style="top:290px;height:2px;background:linear-gradient(90deg,#002e9e 0px,#00109e 174.5px,#38009e 256.5px,#9e009e 393.5px,#9e0080 439.5px,#9e0068 493.5px,#9e0054 559.5px,#9e0043 639px)"></i>
<i style="top:292px;height:2px;background:linear-gradient(90deg,#002d9e 0px,#000f9e 175.5px,#36009e 254.5px,#9e009e 395.5px,#9e0081 440.5px,#9e0069 494.5px,#9e0055 559.5px,#9e0044 639px)"></i>
<i style="top:294px;height:2px;background:linear-gradient(90deg,#002d9e 0px,#000f9e 175.5px,#34009e 252.5px,#9e009e 397.5px,#9e0081 442.5px,#9e0069 496.5px,#9e0055 561.5px,#9e0045 639px)"></i>
<i style="top:296px;height:2px;background:linear-gradient(90deg,#002c9e 0px,#000e9e 175.5px,#32009e 250.5px,#9e009e 399.5px,#9e0081 444.5px,#9e006a 497.5px,#9e0056 561.5px,#9e0045 639px)"></i>
<i style="top:298px;height:2px;background:linear-gradient(90deg,#002b9e 0px,#000d9e 176.5px,#30009e 248.5px,#9e009e 401.5px,#9e0081 446.5px,#9e006a 499.5px,#9e0056 562.5px,#9e0046 639px)"></i>
<i style="top:300px;height:2px;background:linear-gradient(90deg,#002b9e 0px,#000d9e 176.5px,#2f009e 247.5px,#9e009e 403.5px,#9e0082 448.5px,#9e006b 500.5px,#9e0057 563.5px,#9e0047 639px)"></i>
<i style="top:302px;height:2px;background:linear-gradient(90deg,#002a9e 0px,#000c9e 176.5px,#2d009e 245.5px,#9e009e 405.5px,#9e0082 450.5px,#9e006b 502.5px,#9e0058 564.5px,#9e0047 639px)"></i>
<i style="top:304px;height:2px;background:linear-gradient(90deg,#002a9e 0px,#000c9e 176.5px,#2b009e 243.5px,#9e009e 407.5px,#9e0083 451.5px,#9e006c 503.5px,#9e0058 565.5px,#9e0048 639px)"></i>
<i style="top:306px;height:2px;background:linear-gradient(90deg,#00299e 0px,#000b9e 177.5px,#29009e 241.5px,#9e009e 409.5px,#9e0083 453.5px,#9e006c 504.5px,#9e0059 565.5px,#9e0049 639px)"></i>
<i style="top:308px;height:2px;background:linear-gradient(90deg,#00289e 0px,#000b9e 177.5px,#27009e 239.5px,#9e009e 411.5px,#9e0083 455.5px,#9e006c 506.5px,#9e0049 639px)"></i>
<i style="top:310px;height:2px;background:linear-gradient(90deg,#00289e 0px,#000b9e 177.5px,#26009e 237.5px,#9e009e 413.5px,#9e0083 457.5px,#9e006d 507.5px,#9e004a 639px)"></i>
<i style="top:312px;height:2px;background:linear-gradient(90deg,#00279e 0px,#000a9e 178.5px,#24009e 235.5px,#9e009e 415.5px,#9e0083 459.5px,#9e006d 509.5px,#9e004b 639px)"></i>
<i style="top:314px;height:2px;background:linear-gradient(90deg,#00279e 0px,#000a9e 178.5px,#22009e 233.5px,#9e009e 417.5px,#9e0084 460.5px,#9e006e 510.5px,#9e004c 639px)"></i>
<i style="top:316px;height:2px;background:linear-gradient(90deg,#00269e 0px,#00099e 178.5px,#20009e 231.5px,#9e009e 419.5px,#9e0084 462.5px,#9e006f 511.5px,#9e004c 639px)"></i>
<i style="top:318px;height:2px;background:linear-gradient(90deg,#00259e 0px,#00099e 179.5px,#1f009e 229.5px,#9e009e 421.5px,#9e0084 464.5px,#9e006f 513.5px,#9e004d 639px)"></i>
<i style="top:320px;height:2px;background:linear-gradient(90deg,#00259e 0px,#00089e 179.5px,#1d009e 227.5px,#9d009e 422.5px,#9e0084 467.5px,#9e006f 514.5px,#9e004e 639px)"></i>
<i style="top:322px;height:2px;background:linear-gradient(90deg,#00249e 0px,#00089e 179.5px,#1b009e 225.5px,#9d009e 424.5px,#9e0084 469.5px,#9e0070 516.5px,#9e004e 639px)"></i>
<i style="top:324px;height:2px;background:linear-gradient(90deg,#00249e 0px,#00079e 180.5px,#1a009e 223.5px,#9d009e 426.5px,#9e0085 470.5px,#9e0070 517.5px,#9e004f 639px)"></i>
<i style="top:326px;height:2px;background:linear-gradient(90deg,#00239e 0px,#00079e 180.5px,#18009e 221.5px,#9d009e 428.5px,#9e0085 472.5px,#9e0071 519.5px,#9e0050 639px)"></i>
<i style="top:328px;height:2px;background:linear-gradient(90deg,#00239e 0px,#00069e 180.5px,#17009e 219.5px,#9d009e 430.5px,#9e0085 474.5px,#9e0071 520.5px,#9e0050 639px)"></i>
<i style="top:330px;height:2px;background:linear-gradient(90deg,#00229e 0px,#00069e 181.5px,#15009e 217.5px,#9d009e 432.5px,#9e0085 476.5px,#9e0072 521.5px,#9e0051 639px)"></i>
<i style="top:332px;height:2px;background:linear-gradient(90deg,#00229e 0px,#00069e 181.5px,#14009e 216.5px,#9d009e 434.5px,#9e0072 523.5px,#9e0052 639px)"></i>
<i style="top:334px;height:2px;background:linear-gradient(90deg,#00219e 0px,#00059e 181.5px,#13009e 214.5px,#9d009e 436.5px,#9e0073 524.5px,#9e0053 639px)"></i>
<i style="top:336px;height:2px;background:linear-gradient(90deg,#00219e 0px,#00059e 182.5px,#11009e 212.5px,#9d009e 438.5px,#9e0073 525.5px,#9e0053 639px)"></i>
<i style="top:338px;height:2px;background:linear-gradient(90deg,#00209e 0px,#00049e 182.5px,#10009e 210.5px,#9d009e 440.5px,#9e0073 527.5px,#9e0054 639px)"></i>
<i style="top:340px;height:2px;background:linear-gradient(90deg,#00209e 0px,#00049e 182.5px,#0e009e 208.5px,#9d009e 442.5px,#9e0074 528.5px,#9e0055 639px)"></i>
<i style="top:342px;height:2px;background:linear-gradient(90deg,#001f9e 0px,#00049e 183.5px,#4d009e 316.5px,#9d009e 444.5px,#9e0074 529.5px,#9e0055 639px)"></i>
<i style="top:344px;height:2px;background:linear-gradient(90deg,#001f9e 0px,#00039e 183.5px,#4d009e 317.5px,#9d009e 446.5px,#9e0075 531.5px,#9e0056 639px)"></i>
<i style="top:346px;height:2px;background:linear-gradient(90deg,#001e9e 0px,#00039e 183.5px,#4c009e 317.5px,#9d009e 448.5px,#9e0075 532.5px,#9e0057 639px)"></i>
<i style="top:348px;height:2px;background:linear-gradient(90deg,#001e9e 0px,#00029e 184.5px,#4d009e 320.5px,#9d009e 450.5px,#9e0076 533.5px,#9e0057 639px)"></i>
<i style="top:350px;height:2px;background:linear-gradient(90deg,#001d9e 0px,#00029e 184.5px,#4d009e 321.5px,#9d009e 452.5px,#9e0076 535.5px,#9e0058 639px)"></i>
<i style="top:352px;height:2px;background:linear-gradient(90deg,#001d9e 0px,#00029e 184.5px,#4c009e 320.5px,#9e009e 455.5px,#9e0077 535.5px,#9e0059 639px)"></i>
<i style="top:354px;height:2px;background:linear-gradient(90deg,#001c9e 0px,#00019e 185.5px,#4d009e 323.5px,#9e009e 457.5px,#9e0077 537.5px,#9e005a 639px)"></i>
<i style="top:356px;height:2px;background:linear-gradient(90deg,#001c9e 0px,#00019e 185.5px,#4d009e 324.5px,#9e009e 459.5px,#9e0078 538.5px,#9e005a 639px)"></i>
<i style="top:358px;height:2px;background:linear-gradient(90deg,#001b9e 0px,#00019e 185.5px,#4c009e 324.5px,#9e009e 461.5px,#9e0078 539.5px,#9e005b 639px)"></i>
<i style="top:360px;height:2px;background:linear-gradient(90deg,#001b9e 0px,#00009e 186.5px,#4d009e 326.5px,#9e009e 463.5px,#9e0079 540.5px,#9e005c 639px)"></i>
<i style="top:362px;height:2px;background:linear-gradient(90deg,#001a9e 0px,#00009e 186.5px,#4d009e 327.5px,#9e009e 465.5px,#9e0079 542.5px,#9e005c 639px)"></i>
<i style="top:364px;height:2px;background:linear-gradient(90deg,#001a9e 0px,#00009e 186.5px,#4d009e 328.5px,#9e009e 467.5px,#9e007a 543.5px,#9e005d 639px)"></i>
<i style="top:366px;height:2px;background:linear-gradient(90deg,#001a9e 0px,#00009e 187.5px,#4d009e 330.5px,#9e009e 469.5px,#9e007a 544.5px,#9e005e 639px)"></i>
<i style="top:368px;height:2px;background:linear-gradient(90deg,#00199e 0px,#00009e 187.5px,#4d009e 331.5px,#9e009e 471.5px,#9e007a 546.5px,#9e005f 639px)"></i>
<i style="top:370px;height:2px;background:linear-gradient(90deg,#00199e 0px,#00009e 187.5px,#4d009e 332.5px,#9e009e 473.5px,#9e007b 547.5px,#9e005f 639px)"></i>
<i style="top:372px;height:2px;background:linear-gradient(90deg,#00189e 0px,#00009e 187.5px,#4c009e 331.5px,#9e009e 475.5px,#9e007b 548.5px,#9e0060 639px)"></i>
<i style="top:374px;height:2px;background:linear-gradient(90deg,#00189e 0px,#00009e 188.5px,#4d009e 335.5px,#9e009e 477.5px,#9e007c 549.5px,#9e0061 639px)"></i>
<i style="top:376px;height:2px;background:linear-gradient(90deg,#00189e 0px,#00009e 188.5px,#4c009e 335.5px,#9e009e 479.5px,#9e007c 551.5px,#9e0061 639px)"></i>
<i style="top:378px;height:2px;background:linear-gradient(90deg,#00179e 0px,#00009e 188.5px,#4c009e 335.5px,#9e009e 481.5px,#9e007d 552.5px,#9e0062 639px)"></i>
<i style="top:380px;height:2px;background:linear-gradient(90deg,#00179e 0px,#00009e 189.5px,#4d009e 338.5px,#9e009e 483.5px,#9e007d 553.5px,#9e0063 639px)"></i>
<i style="top:382px;height:2px;background:linear-gradient(90deg,#00169e 0px,#00009e 189.5px,#4d009e 339.5px,#9e009e 485.5px,#9e007e 554.5px,#9e0064 639px)"></i>
<i style="top:384px;height:2px;background:linear-gradient(90deg,#00169e 0px,#00009e 189.5px,#4c009e 339.5px,#9e009e 487.5px,#9e007e 556.5px,#9e0064 639px)"></i>
<i style="top:386px;height:2px;background:linear-gradient(90deg,#00169e 0px,#00009e 161.5px,#00009e 190.5px,#4d009e 342.5px,#9e009e 489.5px,#9e007e 557.5px,#9e0065 639px)"></i>
<i style="top:388px;height:2px;background:linear-gradient(90deg,#00159e 0px,#00009e 159.5px,#00009e 190.5px,#4d009e 343.5px,#9e009e 491.5px,#9e007f 558.5px,#9e0066 639px)"></i>
<i style="top:390px;height:2px;background:linear-gradient(90deg,#00159e 0px,#00009e 157.5px,#00009e 190.5px,#4c009e 342.5px,#9e009e 493.5px,#9e007f 559.5px,#9e0067 639px)"></i>
<i style="top:392px;height:2px;background:linear-gradient(90deg,#00149e 0px,#00009e 155.5px,#00009e 191.5px,#4d009e 346.5px,#9e009e 495.5px,#9e0080 560.5px,#9e0067 639px)"></i>
<i style="top:394px;height:2px;background:linear-gradient(90deg,#00149e 0px,#00009e 153.5px,#00009e 191.5px,#4d009e 347.5px,#9e009e 497.5px,#9e0080 562.5px,#9e0068 639px)"></i>
<i style="top:396px;height:2px;background:linear-gradient(90deg,#00149e 0px,#00009e 152.5px,#00009e 191.5px,#4c009e 346.5px,#9e009e 499.5px,#9e0081 563.5px,#9e0069 639px)"></i>
<i style="top:398px;height:2px;background:linear-gradient(90deg,#00139e 0px,#00009e 150.5px,#00009e 192.5px,#4d009e 349.5px,#9e009e 501.5px,#9e0081 564.5px,#9e0069 639px)"></i>
<i style="top:400px;height:2px;background:linear-gradient(90deg,#00139e 0px,#00009e 148.5px,#00009e 192.5px,#4d009e 350.5px,#9e009e 503.5px,#9e0082 565.5px,#9e006a 639px)"></i>
<i style="top:402px;height:2px;background:linear-gradient(90deg,#00139e 0px,#00009e 146.5px,#00009e 192.5px,#4c009e 350.5px,#9e009e 505.5px,#9e0082 567.5px,#9e006b 639px)"></i>
<i style="top:404px;height:2px;background:linear-gradient(90deg,#00129e 0px,#00009e 144.5px,#00009e 193.5px,#4d009e 353.5px,#9e009e 507.5px,#9e0082 568.5px,#9e006c 639px)"></i>
<i style="top:406px;height:2px;background:linear-gradient(90deg,#00129e 0px,#00009e 142.5px,#00009e 193.5px,#4d009e 354.5px,#9e009e 509.5px,#9e0083 569.5px,#9e006c 639px)"></i>
<i style="top:408px;height:2px;background:linear-gradient(90deg,#00129e 0px,#00009e 140.5px,#00009e 193.5px,#4d009e 354.5px,#9e009e 511.5px,#9e0083 570.5px,#9e006d 639px)"></i>
<i style="top:410px;height:2px;background:linear-gradient(90deg,#00119e 0px,#00009e 138.5px,#00009e 194.5px,#4d009e 357.5px,#9e009e 513.5px,#9e0084 571.5px,#9e006e 639px)"></i>
<i style="top:412px;height:2px;background:linear-gradient(90deg,#00119e 0px,#00009e 136.5px,#00009e 194.5px,#4d009e 358.5px,#9e009e 515.5px,#9e0084 573.5px,#9e006f 639px)"></i>
<i style="top:414px;height:2px;background:linear-gradient(90deg,#00119e 0px,#00009e 134.5px,#00009e 194.5px,#4d009e 358.5px,#9e009e 517.5px,#9e0085 574.5px,#9e006f 639px)"></i>
<i style="top:416px;height:2px;background:linear-gradient(90deg,#00109e 0px,#00009e 132.5px,#00009e 195.5px,#4d009e 360.5px,#9e009e 519.5px,#9e0085 575.5px,#9e0070 639px)"></i>
<i style="top:418px;height:2px;background:linear-gradient(90deg,#00109e 0px,#00009e 130.5px,#00009e 195.5px,#4d009e 361.5px,#9e009e 521.5px,#9e0086 576.5px,#9e0071 639px)"></i>
<i style="top:420px;height:2px;background:linear-gradient(90deg,#00109e 0px,#00009e 128.5px,#00009e 195.5px,#4d009e 361.5px,#9e009e 523.5px,#9e0086 577.5px,#9e0072 639px)"></i>
<i style="top:422px;height:2px;background:linear-gradient(90deg,#000f9e 0px,#00009e 126.5px,#00009e 196.5px,#4d009e 364.5px,#9e009e 525.5px,#9e0086 578.5px,#9e0072 639px)"></i>
<i style="top:424px;height:2px;background:linear-gradient(90deg,#000f9e 0px,#00009e 124.5px,#00009e 196.5px,#4d009e 365.5px,#9e009e 527.5px,#9e0073 639px)"></i>
<i style="top:426px;height:2px;background:linear-gradient(90deg,#000f9e 0px,#00009e 122.5px,#00009e 196.5px,#4d009e 365.5px,#9e009e 529.5px,#9e0074 639px)"></i>
<i style="top:428px;height:2px;background:linear-gradient(90deg,#000e9e 0px,#00009e 121.5px,#00009e 197.5px,#4d009e 367.5px,#9e009e 531.5px,#9e0075 639px)"></i>
<i style="top:430px;height:2px;background:linear-gradient(90deg,#000e9e 0px,#00009e 119.5px,#00009e 197.5px,#4d009e 368.5px,#9e009e 533.5px,#9e0075 639px)"></i>
<i style="top:432px;height:2px;background:linear-gradient(90deg,#000e9e 0px,#00009e 117.5px,#00009e 197.5px,#4d009e 369.5px,#9e009e 535.5px,#9e0076 639px)"></i>
<i style="top:434px;height:2px;background:linear-gradient(90deg,#000e9e 0px,#00009e 115.5px,#00009e 197.5px,#4c009e 368.5px,#9e009e 537.5px,#9e0077 639px)"></i>
<i style="top:436px;height:2px;background:linear-gradient(90deg,#000d9e 0px,#00009e 113.5px,#00009e 198.5px,#4d009e 372.5px,#9e009e 539.5px,#9e0078 639px)"></i>
<i style="top:438px;height:2px;background:linear-gradient(90deg,#000d9e 0px,#00009e 111.5px,#00009e 198.5px,#4d009e 373.5px,#9e009e 541.5px,#9e0078 639px)"></i>
<i style="top:440px;height:2px;background:linear-gradient(90deg,#000d9e 0px,#00009e 109.5px,#00009e 198.5px,#4c009e 372.5px,#9e009e 543.5px,#9e0079 639px)"></i>
<i style="top:442px;height:2px;background:linear-gradient(90deg,#000c9e 0px,#00009e 107.5px,#00009e 199.5px,#4e009e 376.5px,#9e009e 545.5px,#9e007a 639px)"></i>
<i style="top:444px;height:2px;background:linear-gradient(90deg,#000c9e 0px,#00009e 105.5px,#00009e 199.5px,#4d009e 376.5px,#9e009e 547.5px,#9e007b 639px)"></i>
<i style="top:446px;height:2px;background:linear-gradient(90deg,#000c9e 0px,#00009e 103.5px,#00009e 199.5px,#4c009e 376.5px,#9e009e 549.5px,#9e007b 639px)"></i>
<i style="top:448px;height:2px;background:linear-gradient(90deg,#000c9e 0px,#00009e 101.5px,#00009e 200.5px,#4d009e 379.5px,#9e009e 551.5px,#9e007c 639px)"></i>
<i style="top:450px;height:2px;background:linear-gradient(90deg,#000b9e 0px,#00009e 99.5px,#00009e 200.5px,#4d009e 380.5px,#9e009e 553.5px,#9e007d 639px)"></i>
<i style="top:452px;height:2px;background:linear-gradient(90deg,#000b9e 0px,#00009e 97.5px,#00009e 200.5px,#4c009e 379.5px,#9e009e 555.5px,#9e007e 639px)"></i>
<i style="top:454px;height:2px;background:linear-gradient(90deg,#000b9e 0px,#00009e 95.5px,#00009e 201.5px,#4d009e 383.5px,#9e009e 557.5px,#9e007f 639px)"></i>
<i style="top:456px;height:2px;background:linear-gradient(90deg,#000a9e 0px,#00009e 93.5px,#00009e 201.5px,#4d009e 384.5px,#9e009e 559.5px,#9e007f 639px)"></i>
<i style="top:458px;height:2px;background:linear-gradient(90deg,#000a9e 0px,#00009e 91.5px,#00009e 201.5px,#4c009e 383.5px,#9e009e 561.5px,#9e0080 639px)"></i>
<i style="top:460px;height:2px;background:linear-gradient(90deg,#000a9e 0px,#00009e 89.5px,#00009e 202.5px,#4d009e 386.5px,#9e009e 563.5px,#9e0081 639px)"></i>
<i style="top:462px;height:2px;background:linear-gradient(90deg,#000a9e 0px,#00009e 88.5px,#00009e 202.5px,#4d009e 387.5px,#9e009e 565.5px,#9e0082 639px)"></i>
<i style="top:464px;height:2px;background:linear-gradient(90deg,#00099e 0px,#00009e 86.5px,#00009e 202.5px,#4d009e 387.5px,#9e009e 567.5px,#9e0082 639px)"></i>
<i style="top:466px;height:2px;background:linear-gradient(90deg,#00099e 0px,#00009e 84.5px,#00009e 203.5px,#4d009e 390.5px,#9e009e 569.5px,#9e0083 639px)"></i>
<i style="top:468px;height:2px;background:linear-gradient(90deg,#00099e 0px,#00009e 82.5px,#00009e 203.5px,#4d009e 391.5px,#9e009e 571.5px,#9e0084 639px)"></i>
<i style="top:470px;height:2px;background:linear-gradient(90deg,#00099e 0px,#00009e 80.5px,#00009e 203.5px,#4c009e 390.5px,#9e009e 573.5px,#9e0085 639px)"></i>
<i style="top:472px;height:2px;background:linear-gradient(90deg,#00089e 0px,#00009e 78.5px,#00009e 204.5px,#4d009e 393.5px,#9e009e 575.5px,#9e0085 639px)"></i>
<i style="top:474px;height:2px;background:linear-gradient(90deg,#00089e 0px,#00009e 76.5px,#00009e 204.5px,#4d009e 394.5px,#9e009e 577.5px,#9e0086 639px)"></i>
<i style="top:476px;height:2px;background:linear-gradient(90deg,#00089e 0px,#00009e 74.5px,#00009e 204.5px,#4d009e 394.5px,#9e009e 579.5px,#9e0087 639px)"></i>
<i style="top:478px;height:2px;background:linear-gradient(90deg,#00089e 0px,#00009e 72.5px,#00009e 205.5px,#4d009e 397.5px,#9e009e 581.5px,#9e0088 639px)"></i>
<i style="top:480px;height:2px;background:linear-gradient(90deg,#00079e 0px,#00009e 70.5px,#00009e 205.5px,#4d009e 398.5px,#9e009e 583.5px,#9e0089 639px)"></i>
<i style="top:482px;height:2px;background:linear-gradient(90deg,#00079e 0px,#00009e 68.5px,#00009e 205.5px,#4d009e 398.5px,#9e009e 585.5px,#9e0089 639px)"></i>
<i style="top:484px;height:2px;background:linear-gradient(90deg,#00079e 0px,#00009e 66.5px,#00009e 206.5px,#4d009e 400.5px,#9e009e 587.5px,#9e008a 639px)"></i>
<i style="top:486px;height:2px;background:linear-gradient(90deg,#00079e 0px,#00009e 64.5px,#00009e 206.5px,#4d009e 401.5px,#9e009e 589.5px,#9e008b 639px)"></i>
<i style="top:488px;height:2px;background:linear-gradient(90deg,#00069e 0px,#00009e 62.5px,#00009e 206.5px,#4d009e 402.5px,#9e009e 591.5px,#9e008c 639px)"></i>
<i style="top:490px;height:2px;background:linear-gradient(90deg,#00069e 0px,#00009e 60.5px,#00009e 207.5px,#4d009e 404.5px,#9e009e 593.5px,#9e008c 639px)"></i></div></div>
<div class="a rows" style="left:1149px;top:149px;width:351px;height:336px;clip-path:polygon(349.0px 34.7px,2.5px 2.3px,56.2px 333.7px)"><i style="top:0px;height:2px;background:linear-gradient(90deg,#0f0 0px,#0f0 2.5px,#20ff00 15.5px,#6bff00 43.5px,#b0ff00 65.5px,#ff0 87.5px,#ffcb00 103.5px,#ff9d00 123.5px,#ff7800 146.5px,#ff5900 174.5px,#ff3f00 207.5px,#ff2800 247.5px,#ff0700 351px)"></i>
<i style="top:2px;height:2px;background:linear-gradient(90deg,#00ff02 0px,#02ff01 3.5px,#1aff00 13.5px,#68ff00 42.5px,#adff00 64.5px,#fffe00 87.5px,#ffca00 103.5px,#ff9c00 123.5px,#ff7800 146.5px,#ff5800 174.5px,#ff3e00 207.5px,#ff2800 247.5px,#ff0600 351px)"></i>
<i style="top:4px;height:2px;background:linear-gradient(90deg,#00ff06 0px,#01ff06 3.5px,#15ff04 11.5px,#65ff00 41.5px,#af0 63.5px,#fffd00 87.5px,#ffc900 103.5px,#ff9b00 123.5px,#f70 146.5px,#ff5700 174.5px,#ff3d00 207.5px,#ff2700 247.5px,#ff0600 351px)"></i>
<i style="top:6px;height:2px;background:linear-gradient(90deg,#00ff0b 0px,#00ff0a 3.5px,#0fff09 9.5px,#62ff03 40.5px,#a7ff00 62.5px,#fffc00 87.5px,#ffc800 103.5px,#ff9b00 123.5px,#ff7600 146.5px,#ff5700 174.5px,#ff3d00 207.5px,#ff2700 247.5px,#ff0500 351px)"></i>
<i style="top:8px;height:2px;background:linear-gradient(90deg,#00ff0f 0px,#00ff0f 3.5px,#0cff0e 8.5px,#65ff08 41.5px,#aeff02 64.5px,#ff0 86.5px,#ffc700 103.5px,#ff9c00 122.5px,#f70 145.5px,#ff5700 173.5px,#ff3d00 206.5px,#ff2700 246.5px,#ff0500 351px)"></i>
<i style="top:10px;height:2px;background:linear-gradient(90deg,#00ff14 0px,#00ff13 3.5px,#06ff13 6.5px,#61ff0d 40.5px,#aeff08 64.5px,#ffff02 86.5px,#ffc900 102.5px,#ff9b00 122.5px,#ff7600 145.5px,#ff5600 173.5px,#ff3c00 206.5px,#ff2600 246.5px,#ff0500 351px)"></i>
<i style="top:12px;height:2px;background:linear-gradient(90deg,#00ff18 0px,#03ff17 5.5px,#61ff12 40.5px,#abff0d 63.5px,#fffe08 86.5px,#ffc903 102.5px,#ff9c00 121.5px,#f70 144.5px,#ff5700 172.5px,#ff3c00 205.5px,#ff2600 245.5px,#ff1400 293.5px,#ff0400 351px)"></i>
<i style="top:14px;height:2px;background:linear-gradient(90deg,#00ff1d 0px,#02ff1c 5.5px,#5eff17 39.5px,#a7ff13 62.5px,#fffd0e 86.5px,#ffc808 102.5px,#ff9b03 121.5px,#ff7600 144.5px,#ff5600 172.5px,#ff3c00 205.5px,#ff2600 245.5px,#ff1300 293.5px,#ff0400 351px)"></i>
<i style="top:16px;height:2px;background:linear-gradient(90deg,#00ff21 0px,#01ff21 5.5px,#5aff1c 38.5px,#a4ff19 61.5px,#fffc14 86.5px,#ffc70d 102.5px,#ff9b07 121.5px,#ff7502 144.5px,#f50 172.5px,#ff3b00 205.5px,#ff2500 245.5px,#ff1300 293.5px,#ff0300 351px)"></i>
<i style="top:18px;height:2px;background:linear-gradient(90deg,#00ff26 0px,#01ff26 5.5px,#57ff22 37.5px,#a1ff1e 60.5px,#feff1a 85.5px,#fffc1a 86.5px,#ffc612 102.5px,#ff9a0b 121.5px,#ff7406 144.5px,#ff5401 172.5px,#ff3a00 205.5px,#ff2400 245.5px,#ff1200 293.5px,#ff0300 351px)"></i>
<i style="top:20px;height:2px;background:linear-gradient(90deg,#00ff2b 0px,#02ff2a 6.5px,#5aff27 38.5px,#a8ff24 62.5px,#ffff20 85.5px,#ffc817 101.5px,#ff9b10 120.5px,#ff7509 143.5px,#ff5504 171.5px,#ff3a00 204.5px,#ff2400 244.5px,#ff1200 292.5px,#ff0300 351px)"></i>
<i style="top:22px;height:2px;background:linear-gradient(90deg,#00ff30 0px,#01ff2f 6.5px,#56ff2c 37.5px,#a4ff2a 61.5px,#fffe26 85.5px,#ffc71c 101.5px,#ff9a14 120.5px,#ff740d 143.5px,#ff5407 171.5px,#ff3a02 204.5px,#ff2400 244.5px,#f10 292.5px,#ff0200 351px)"></i>
<i style="top:24px;height:2px;background:linear-gradient(90deg,#00ff35 0px,#01ff34 6.5px,#53ff32 36.5px,#a1ff30 60.5px,#fffd2d 85.5px,#ffc721 101.5px,#ff9918 120.5px,#ff7310 143.5px,#ff530a 171.5px,#ff3905 204.5px,#ff2300 244.5px,#f10 292.5px,#ff0200 351px)"></i>
<i style="top:26px;height:2px;background:linear-gradient(90deg,#00ff39 0px,#00ff39 6.5px,#50ff37 35.5px,#9eff36 59.5px,#fffd33 85.5px,#ffc627 101.5px,#ff981c 120.5px,#ff7314 143.5px,#ff530d 171.5px,#ff3907 204.5px,#ff2302 244.5px,#f10 292.5px,#ff0100 351px)"></i>
<i style="top:28px;height:2px;background:linear-gradient(90deg,#00ff3e 0px,#02ff3e 7.5px,#4cff3d 34.5px,#9aff3c 58.5px,#feff3a 84.5px,#fffc39 85.5px,#ffc52c 101.5px,#ff9821 120.5px,#ff7217 143.5px,#ff5210 171.5px,#ff3809 204.5px,#ff2204 244.5px,#ff1000 292.5px,#ff0100 351px)"></i>
<i style="top:30px;height:2px;background:linear-gradient(90deg,#00ff43 0px,#01ff43 7.5px,#4fff42 35.5px,#a5ff41 61.5px,#ffff40 84.5px,#ffc732 100.5px,#ff9925 119.5px,#ff721b 142.5px,#ff5213 170.5px,#ff380c 203.5px,#ff2206 243.5px,#ff1001 292.5px,#f00 351px)"></i>
<i style="top:32px;height:2px;background:linear-gradient(90deg,#00ff48 0px,#00ff48 7.5px,#4bff48 34.5px,#a1ff48 60.5px,#fffe47 84.5px,#ffc637 100.5px,#ff982a 119.5px,#ff721f 142.5px,#ff5116 170.5px,#ff370e 203.5px,#ff2108 243.5px,#ff0f03 292.5px,#f00 351px)"></i>
<i style="top:34px;height:2px;background:linear-gradient(90deg,#00ff4e 0px,#02ff4e 8.5px,#48ff4e 33.5px,#9eff4e 59.5px,#fffe4d 84.5px,#ffc53c 100.5px,#ff972e 119.5px,#ff7122 142.5px,#ff5119 170.5px,#ff3611 204.5px,#ff200a 244.5px,#ff0e04 294.5px,#f00 351px)"></i>
<i style="top:36px;height:2px;background:linear-gradient(90deg,#00ff53 0px,#01ff53 8.5px,#44ff53 32.5px,#9aff54 58.5px,#fffd54 84.5px,#ffc442 100.5px,#ff9633 119.5px,#ff7026 142.5px,#ff501c 170.5px,#ff3513 204.5px,#ff1f0c 245.5px,#ff0d06 296.5px,#ff0001 351px)"></i>
<i style="top:38px;height:2px;background:linear-gradient(90deg,#00ff58 0px,#00ff58 8.5px,#41ff59 31.5px,#93ff5a 56.5px,#fffc5b 84.5px,#ffc347 100.5px,#ff9537 119.5px,#ff6f2a 142.5px,#ff4f1f 170.5px,#ff3516 204.5px,#ff1f0e 245.5px,#ff0c07 298.5px,#ff0003 351px)"></i>
<i style="top:40px;height:2px;background:linear-gradient(90deg,#00ff5d 0px,#02ff5e 9.5px,#43ff5f 32.5px,#9eff61 59.5px,#feff63 83.5px,#ffc54d 99.5px,#ff973c 118.5px,#ff702e 141.5px,#ff4f22 169.5px,#ff3518 203.5px,#ff1e10 245.5px,#ff0b09 300.5px,#ff0004 351px)"></i>
<i style="top:42px;height:2px;background:linear-gradient(90deg,#00ff63 0px,#01ff63 9.5px,#40ff65 31.5px,#9aff67 58.5px,#ffff6a 83.5px,#ffc553 99.5px,#ff9641 118.5px,#ff6f32 141.5px,#ff4f25 169.5px,#ff331a 204.5px,#ff1d12 246.5px,#ff090a 303.5px,#ff0006 351px)"></i>
<i style="top:44px;height:2px;background:linear-gradient(90deg,#00ff68 0px,#00ff69 9.5px,#3fff6b 31.5px,#97ff6e 57.5px,#fffe70 83.5px,#ffc459 99.5px,#ff9545 118.5px,#ff6e35 141.5px,#ff4e28 169.5px,#ff331d 204.5px,#ff1d14 246.5px,#ff080b 305.5px,#ff0007 351px)"></i>
<i style="top:46px;height:2px;background:linear-gradient(90deg,#00ff6e 0px,#02ff6f 10.5px,#3cff71 30.5px,#93ff74 56.5px,#fffd77 83.5px,#ffc35e 99.5px,#ff944a 118.5px,#ff6d39 141.5px,#ff4d2b 169.5px,#ff321f 204.5px,#ff1c16 247.5px,#ff070d 308.5px,#ff0008 351px)"></i>
<i style="top:48px;height:2px;background:linear-gradient(90deg,#00ff73 0px,#01ff74 10.5px,#38ff77 29.5px,#8fff7b 55.5px,#fffc7e 83.5px,#ffc264 99.5px,#ff934e 118.5px,#ff6c3d 141.5px,#ff4c2e 169.5px,#ff3122 205.5px,#ff1b18 248.5px,#ff060e 312.5px,#ff000a 351px)"></i>
<i style="top:50px;height:2px;background:linear-gradient(90deg,#00ff79 0px,#00ff7a 10.5px,#34ff7d 28.5px,#8cff81 54.5px,#c2ff84 68.5px,#feff87 82.5px,#fffb85 83.5px,#ffc169 99.5px,#ff9253 118.5px,#ff6c41 141.5px,#ff4c31 169.5px,#ff3024 205.5px,#ff1a1a 248.5px,#ff050f 314.5px,#ff000b 351px)"></i>
<i style="top:52px;height:2px;background:linear-gradient(90deg,#00ff7e 0px,#00ff80 10.5px,#37ff83 29.5px,#97ff89 57.5px,#ffff8f 82.5px,#ffc371 98.5px,#ff9359 117.5px,#ff6c45 140.5px,#ff4c35 168.5px,#ff3027 204.5px,#ff1a1c 248.5px,#ff0310 317.5px,#ff000d 351px)"></i>
<i style="top:54px;height:2px;background:linear-gradient(90deg,#00ff84 0px,#01ff86 11.5px,#33ff89 28.5px,#93ff90 56.5px,#fffe96 82.5px,#ffdd85 90.5px,#ffc277 98.5px,#ff925d 117.5px,#ff6b49 140.5px,#ff4b38 168.5px,#ff2f29 204.5px,#ff191d 249.5px,#ff0211 321.5px,#ff000e 351px)"></i>
<i style="top:56px;height:2px;background:linear-gradient(90deg,#00ff8a 0px,#00ff8c 11.5px,#2fff90 27.5px,#8fff96 55.5px,#fffd9d 82.5px,#ffdc8b 90.5px,#ffc17c 98.5px,#ff9162 117.5px,#ff6a4d 140.5px,#ff4a3b 168.5px,#ff2f2c 204.5px,#ff181f 249.5px,#ff0113 323.5px,#ff000f 351px)"></i>
<i style="top:58px;height:2px;background:linear-gradient(90deg,#00ff90 0px,#00ff92 11.5px,#2cff96 26.5px,#8cff9d 54.5px,#fffca5 82.5px,#ffdb92 90.5px,#ffc082 98.5px,#ff9167 117.5px,#ff6a51 140.5px,#ff4a3e 168.5px,#ff2d2e 205.5px,#ff1721 250.5px,#ff0014 324.5px,#f01 351px)"></i>
<i style="top:60px;height:2px;background:linear-gradient(90deg,#00ff96 0px,#01ff99 12.5px,#28ff9c 25.5px,#88ffa4 53.5px,#c0ffa9 67.5px,#feffae 81.5px,#fffcac 82.5px,#ffda99 90.5px,#ffbf88 98.5px,#ff906c 117.5px,#ff6955 140.5px,#ff4941 168.5px,#ff2d31 205.5px,#ff1623 251.5px,#ff0016 322.5px,#ff0012 351px)"></i>
<i style="top:62px;height:2px;background:linear-gradient(90deg,#00ff9c 0px,#00ff9f 12.5px,#2affa3 26.5px,#8fffac 55.5px,#ffffb7 81.5px,#ffdda2 89.5px,#ffc190 97.5px,#ff9172 116.5px,#ff6959 139.5px,#ff4945 167.5px,#ff2d34 204.5px,#ff1625 251.5px,#ff0018 320.5px,#ff0014 351px)"></i>
<i style="top:64px;height:2px;background:linear-gradient(90deg,#00ffa2 0px,#00ffa5 12.5px,#26ffa9 25.5px,#8bffb3 54.5px,#fffebf 81.5px,#ffc499 96.5px,#ff9278 115.5px,#ff6a5e 138.5px,#ff4848 167.5px,#ff2c36 204.5px,#ff1527 251.5px,#ff001a 318.5px,#ff0015 351px)"></i>
<i style="top:66px;height:2px;background:linear-gradient(90deg,#00ffa8 0px,#01ffac 13.5px,#26ffb0 25.5px,#8bffbb 54.5px,#fffec6 81.5px,#ffc39f 96.5px,#ff917d 115.5px,#ff6962 138.5px,#ff474c 167.5px,#ff2b38 205.5px,#ff1429 252.5px,#ff001c 316.5px,#ff0017 351px)"></i>
<i style="top:68px;height:2px;background:linear-gradient(90deg,#00ffaf 0px,#00ffb3 13.5px,#22ffb7 24.5px,#87ffc2 53.5px,#fffdce 81.5px,#ffc2a5 96.5px,#ff9082 115.5px,#ff6866 138.5px,#ff474f 167.5px,#ff2a3b 205.5px,#ff132b 253.5px,#ff001e 314.5px,#ff0018 351px)"></i>
<i style="top:70px;height:2px;background:linear-gradient(90deg,#00ffb5 0px,#00ffb9 13.5px,#1effbd 23.5px,#83ffca 52.5px,#bdffd1 66.5px,#fdffd9 80.5px,#fffcd6 81.5px,#ffc1ab 96.5px,#ff8f87 115.5px,#ff676a 138.5px,#ff4652 167.5px,#ff293d 206.5px,#ff122c 254.5px,#ff001f 313.5px,#ff0019 351px)"></i>
<i style="top:72px;height:2px;background:linear-gradient(90deg,#0fb 0px,#00ffc0 13.5px,#1dffc4 23.5px,#87ffd2 53.5px,#c2ffda 67.5px,#feffe1 80.5px,#ffc3b4 95.5px,#ff908e 114.5px,#ff686f 137.5px,#ff4656 166.5px,#ff2940 205.5px,#ff122f 253.5px,#ff0021 311.5px,#ff001b 351px)"></i>
<i style="top:74px;height:2px;background:linear-gradient(90deg,#00ffc2 0px,#01ffc7 14.5px,#1cffcb 23.5px,#87ffda 53.5px,#c2ffe2 67.5px,#ffffea 80.5px,#ffdfd2 87.5px,#ffc2bb 95.5px,#ff8f93 114.5px,#ff6774 137.5px,#ff4559 166.5px,#ff2843 205.5px,#ff1130 254.5px,#ff0023 309.5px,#ff001c 351px)"></i>
<i style="top:76px;height:2px;background:linear-gradient(90deg,#00ffc8 0px,#00ffce 14.5px,#18ffd2 22.5px,#83ffe2 52.5px,#baffea 65.5px,#fffef3 80.5px,#ffded9 87.5px,#ffc1c2 95.5px,#ff8e98 114.5px,#ff6678 137.5px,#ff445d 166.5px,#ff2745 205.5px,#ff1032 255.5px,#ff0025 307.5px,#ff001e 351px)"></i>
<i style="top:78px;height:2px;background:linear-gradient(90deg,#00ffcf 0px,#00ffd5 14.5px,#14ffd9 21.5px,#7fffe9 51.5px,#fffdfb 80.5px,#ffdde1 87.5px,#ffc0c8 95.5px,#ff8d9e 114.5px,#ff657c 137.5px,#ff4460 166.5px,#ff2647 206.5px,#ff0f34 256.5px,#ff0027 305.5px,#ff001f 351px)"></i>
<i style="top:80px;height:2px;background:linear-gradient(90deg,#00ffd6 0px,#00ffdc 14.5px,#07ffde 17.5px,#67ffee 45.5px,#c8fffd 68.5px,#faf7ff 80.5px,#fff2fb 82.5px,#ffb9c9 97.5px,#ff889f 116.5px,#ff617e 139.5px,#ff4162 168.5px,#ff2449 208.5px,#ff0d35 259.5px,#ff002a 303.5px,#ff0021 351px)"></i>
<i style="top:82px;height:2px;background:linear-gradient(90deg,#0fd 0px,#03ffe5 16.5px,#49fff1 37.5px,#93fffd 56.5px,#fbedff 82.5px,#ffe8fb 84.5px,#ffb1ca 99.5px,#ff83a1 118.5px,#ff5e7f 141.5px,#ff3e63 170.5px,#ff224a 211.5px,#ff0c36 262.5px,#ff002c 301.5px,#f02 351px)"></i>
<i style="top:84px;height:2px;background:linear-gradient(90deg,#00ffe4 0px,#02ffec 16.5px,#37fff6 32.5px,#76fdff 49.5px,#fbe3ff 84.5px,#ffdefb 86.5px,#ffa8c9 102.5px,#ff7ca1 121.5px,#ff5980 144.5px,#ff3b64 173.5px,#ff204b 214.5px,#ff0a37 266.5px,#ff002e 299.5px,#ff0024 351px)"></i>
<i style="top:86px;height:2px;background:linear-gradient(90deg,#00ffeb 0px,#01fff4 16.5px,#48fdff 37.5px,#fbdaff 86.5px,#ffd5fc 88.5px,#ffa1ca 104.5px,#ff78a2 123.5px,#ff5682 146.5px,#ff3966 175.5px,#ff1d4c 217.5px,#ff0838 269.5px,#ff0030 298.5px,#ff0025 351px)"></i>
<i style="top:88px;height:2px;background:linear-gradient(90deg,#00fff2 0px,#00fffb 16.5px,#59f1ff 43.5px,#fbd1ff 88.5px,#ffccfc 90.5px,#ff9bcb 106.5px,#ff73a4 125.5px,#ff5182 149.5px,#ff3567 178.5px,#ff1b4d 220.5px,#ff0639 273.5px,#ff0032 296.5px,#ff0026 351px)"></i>
<i style="top:90px;height:2px;background:linear-gradient(90deg,#00fff9 0px,#02fbff 17.5px,#6de5ff 50.5px,#fbc8ff 90.5px,#ffc4fc 92.5px,#ff95cc 108.5px,#ff6da3 128.5px,#ff4d83 152.5px,#ff3368 180.5px,#ff194e 223.5px,#ff0539 277.5px,#ff0034 294.5px,#ff0028 351px)"></i>
<i style="top:92px;height:2px;background:linear-gradient(90deg,#00fdff 0px,#01f3ff 17.5px,#6dddff 51.5px,#ffbcfc 94.5px,#ff8fcd 110.5px,#ff69a5 130.5px,#ff4a84 154.5px,#ff3069 183.5px,#ff174f 227.5px,#ff033a 282.5px,#ff0029 351px)"></i>
<i style="top:94px;height:2px;background:linear-gradient(90deg,#00f7ff 0px,#00ecff 17.5px,#6ad6ff 51.5px,#ffb4fc 96.5px,#ff8cd0 111.5px,#ff68a9 130.5px,#ff4b8a 152.5px,#ff326f 179.5px,#ff1853 223.5px,#ff033d 278.5px,#ff002b 351px)"></i>
<i style="top:96px;height:2px;background:linear-gradient(90deg,#00f0ff 0px,#02e5ff 18.5px,#6dceff 53.5px,#ffadfc 98.5px,#ff84cf 114.5px,#ff64ab 132.5px,#ff488c 154.5px,#ff3071 181.5px,#ff1654 225.5px,#ff023d 282.5px,#ff002c 351px)"></i>
<i style="top:98px;height:2px;background:linear-gradient(90deg,#00e9ff 0px,#01deff 18.5px,#6cc8ff 54.5px,#ffa6fc 100.5px,#ff7fd0 116.5px,#ff60ac 134.5px,#ff458d 156.5px,#ff2e72 183.5px,#ff1455 228.5px,#ff003e 285.5px,#ff002e 351px)"></i>
<i style="top:100px;height:2px;background:linear-gradient(90deg,#00e3ff 0px,#00d8ff 18.5px,#6cc1ff 55.5px,#ff9ffc 102.5px,#ff7ad0 118.5px,#ff5cad 136.5px,#ff428e 158.5px,#ff2b74 185.5px,#ff1458 228.5px,#ff0041 283.5px,#ff002f 351px)"></i>
<i style="top:102px;height:2px;background:linear-gradient(90deg,#0df 0px,#02d2ff 19.5px,#6fbaff 57.5px,#ff99fc 104.5px,#ff75d1 120.5px,#ff57ad 139.5px,#ff3e8f 161.5px,#ff2975 187.5px,#ff1259 229.5px,#ff0043 281.5px,#ff0031 351px)"></i>
<i style="top:104px;height:2px;background:linear-gradient(90deg,#00d7ff 0px,#01ccff 19.5px,#6fb4ff 58.5px,#ff92fc 106.5px,#ff70d2 122.5px,#ff53ae 141.5px,#ff3c90 163.5px,#ff2777 189.5px,#ff125c 229.5px,#ff0046 279.5px,#ff0032 351px)"></i>
<i style="top:106px;height:2px;background:linear-gradient(90deg,#00d2ff 0px,#00c7ff 19.5px,#6eaeff 59.5px,#ff8cfd 108.5px,#ff6cd3 124.5px,#ff50af 143.5px,#ff3991 165.5px,#ff2578 191.5px,#ff115e 230.5px,#ff0049 277.5px,#ff0034 351px)"></i>
<i style="top:108px;height:2px;background:linear-gradient(90deg,#0cf 0px,#02c1ff 20.5px,#71a8ff 61.5px,#ff87fd 110.5px,#ff67d3 126.5px,#ff4eb2 144.5px,#ff3794 166.5px,#ff247a 192.5px,#ff1061 229.5px,#ff004b 275.5px,#ff0035 351px)"></i>
<i style="top:110px;height:2px;background:linear-gradient(90deg,#00c7ff 0px,#01bcff 20.5px,#71a3ff 62.5px,#ff81fd 112.5px,#ff63d4 128.5px,#ff49b1 147.5px,#ff3494 169.5px,#ff227b 194.5px,#ff0f62 230.5px,#ff004e 273.5px,#ff0037 351px)"></i>
<i style="top:112px;height:2px;background:linear-gradient(90deg,#00c2ff 0px,#00b7ff 20.5px,#709dff 63.5px,#ff7cfd 114.5px,#ff5fd5 130.5px,#ff46b2 149.5px,#ff3195 171.5px,#ff207d 196.5px,#ff0e64 231.5px,#ff0050 272.5px,#ff0038 351px)"></i>
<i style="top:114px;height:2px;background:linear-gradient(90deg,#00bdff 0px,#02b2ff 21.5px,#7098ff 64.5px,#ff76fd 116.5px,#ff5bd5 132.5px,#ff43b3 151.5px,#ff2f96 173.5px,#ff1e7e 198.5px,#ff0e67 231.5px,#ff0053 270.5px,#ff003a 351px)"></i>
<i style="top:116px;height:2px;background:linear-gradient(90deg,#00b9ff 0px,#01adff 21.5px,#7293ff 66.5px,#ff71fd 118.5px,#ff57d6 134.5px,#ff40b4 153.5px,#ff2c97 175.5px,#ff1c7f 200.5px,#ff0d69 231.5px,#ff0056 268.5px,#ff003b 351px)"></i>
<i style="top:118px;height:2px;background:linear-gradient(90deg,#00b4ff 0px,#00a9ff 21.5px,#728eff 67.5px,#ff6cfd 120.5px,#ff53d7 136.5px,#ff3eb7 154.5px,#ff2b9a 176.5px,#ff1b81 201.5px,#ff0c6c 231.5px,#ff0059 266.5px,#ff003d 351px)"></i>
<i style="top:120px;height:2px;background:linear-gradient(90deg,#00b0ff 0px,#02a4ff 22.5px,#728aff 68.5px,#ff68fd 122.5px,#ff4fd7 138.5px,#ff3ab6 157.5px,#ff289b 178.5px,#ff1982 203.5px,#ff005c 264.5px,#ff003e 351px)"></i>
<i style="top:122px;height:2px;background:linear-gradient(90deg,#00acff 0px,#01a0ff 22.5px,#7286ff 69.5px,#ff63fd 124.5px,#ff4cd8 140.5px,#ff37b7 159.5px,#ff269c 180.5px,#ff1783 205.5px,#ff005f 262.5px,#ff0040 351px)"></i>
<i style="top:124px;height:2px;background:linear-gradient(90deg,#00a7ff 0px,#009cff 22.5px,#7181ff 70.5px,#ff5ffd 126.5px,#ff48d8 142.5px,#ff34b8 161.5px,#ff249d 182.5px,#ff1585 207.5px,#ff0062 260.5px,#ff0041 351px)"></i>
<i style="top:126px;height:2px;background:linear-gradient(90deg,#00a4ff 0px,#0298ff 23.5px,#737dff 72.5px,#ff5bfd 128.5px,#ff45d9 144.5px,#ff33ba 162.5px,#ff229f 183.5px,#ff1487 208.5px,#ff0065 258.5px,#ff0043 351px)"></i>
<i style="top:128px;height:2px;background:linear-gradient(90deg,#00a0ff 0px,#0194ff 23.5px,#7379ff 73.5px,#ff56fd 130.5px,#ff42d9 146.5px,#ff30bb 164.5px,#ff20a0 185.5px,#ff1288 210.5px,#ff0069 256.5px,#f05 299.5px,#f04 351px)"></i>
<i style="top:130px;height:2px;background:linear-gradient(90deg,#009cff 0px,#0090ff 23.5px,#7375ff 74.5px,#ff52fd 132.5px,#ff3eda 148.5px,#ff2dba 167.5px,#ff1ea0 188.5px,#ff1089 212.5px,#ff006b 255.5px,#ff0057 298.5px,#ff0046 351px)"></i>
<i style="top:132px;height:2px;background:linear-gradient(90deg,#09f 0px,#028cff 24.5px,#7571ff 76.5px,#ff4ffd 134.5px,#ff3bdb 150.5px,#ff2bbd 168.5px,#ff1ca2 189.5px,#ff0f8b 213.5px,#ff006f 253.5px,#ff0059 297.5px,#ff0047 351px)"></i>
<i style="top:134px;height:2px;background:linear-gradient(90deg,#0095ff 0px,#0189ff 24.5px,#756dff 77.5px,#ff4bfd 136.5px,#ff38db 152.5px,#ff28bd 170.5px,#ff1aa3 191.5px,#ff0e8c 215.5px,#ff0072 251.5px,#ff005c 296.5px,#ff0049 351px)"></i>
<i style="top:136px;height:2px;background:linear-gradient(90deg,#0092ff 0px,#0086ff 24.5px,#746aff 78.5px,#ff47fd 138.5px,#ff35dc 154.5px,#ff26be 172.5px,#ff18a4 193.5px,#ff0c8d 217.5px,#ff0076 249.5px,#ff005e 295.5px,#ff004a 351px)"></i>
<i style="top:138px;height:2px;background:linear-gradient(90deg,#008eff 0px,#0282ff 25.5px,#7466ff 79.5px,#ff44fd 140.5px,#ff32dc 156.5px,#ff24bf 174.5px,#ff16a5 195.5px,#ff0b8f 218.5px,#ff007a 246.5px,#ff0069 275.5px,#ff004c 351px)"></i>
<i style="top:140px;height:2px;background:linear-gradient(90deg,#008bff 0px,#017fff 25.5px,#7463ff 80.5px,#ff40fd 142.5px,#ff30dc 158.5px,#ff21c0 176.5px,#ff14a6 197.5px,#ff098f 220.5px,#ff007d 245.5px,#ff006a 277.5px,#ff004d 351px)"></i>
<i style="top:142px;height:2px;background:linear-gradient(90deg,#08f 0px,#007cff 25.5px,#765fff 82.5px,#ff3dfe 144.5px,#ff2ddd 160.5px,#ff1fc0 178.5px,#ff12a6 199.5px,#ff0890 222.5px,#ff0080 243.5px,#ff006c 278.5px,#ff004f 351px)"></i>
<i style="top:144px;height:2px;background:linear-gradient(90deg,#0085ff 0px,#0279ff 26.5px,#755cff 83.5px,#ff3afe 146.5px,#ff2add 162.5px,#ff1dc1 180.5px,#ff0792 223.5px,#ff0084 241.5px,#ff006d 279.5px,#ff0050 351px)"></i>
<i style="top:146px;height:2px;background:linear-gradient(90deg,#0082ff 0px,#0176ff 26.5px,#7559ff 84.5px,#ff36fe 148.5px,#ff28de 164.5px,#ff1bc2 182.5px,#ff0593 225.5px,#f08 239.5px,#ff006f 280.5px,#ff0052 351px)"></i>
<i style="top:148px;height:2px;background:linear-gradient(90deg,#007fff 0px,#0073ff 26.5px,#7556ff 85.5px,#ff33fe 150.5px,#ff25de 166.5px,#ff19c4 183.5px,#ff0495 226.5px,#ff008c 237.5px,#ff0070 281.5px,#ff0053 351px)"></i>
<i style="top:150px;height:2px;background:linear-gradient(90deg,#007dff 0px,#0270ff 27.5px,#7753ff 87.5px,#ff30fe 152.5px,#ff23df 168.5px,#ff16c3 186.5px,#ff0296 228.5px,#ff0072 282.5px,#f05 351px)"></i>
<i style="top:152px;height:2px;background:linear-gradient(90deg,#007aff 0px,#016eff 27.5px,#7650ff 88.5px,#ff2dfe 154.5px,#ff20df 170.5px,#ff14c4 188.5px,#ff0197 230.5px,#ff0073 283.5px,#ff0057 351px)"></i>
<i style="top:154px;height:2px;background:linear-gradient(90deg,#07f 0px,#006bff 27.5px,#764eff 89.5px,#ff2bfe 156.5px,#ff1edf 172.5px,#ff13c6 189.5px,#ff0098 231.5px,#ff0074 284.5px,#ff0058 351px)"></i>
<i style="top:156px;height:2px;background:linear-gradient(90deg,#0075ff 0px,#0069ff 27.5px,#764bff 90.5px,#ff28fe 158.5px,#ff1be0 174.5px,#ff11c6 191.5px,#f09 233.5px,#ff0076 285.5px,#ff005a 351px)"></i>
<i style="top:158px;height:2px;background:linear-gradient(90deg,#0072ff 0px,#0166ff 28.5px,#7748ff 92.5px,#ff25fe 160.5px,#ff19e0 176.5px,#ff0fc7 193.5px,#ff009b 234.5px,#f07 286.5px,#ff005b 351px)"></i>
<i style="top:160px;height:2px;background:linear-gradient(90deg,#0070ff 0px,#0064ff 28.5px,#7745ff 93.5px,#ff22fe 162.5px,#ff0dc7 195.5px,#ff00a7 224.5px,#ff009c 236.5px,#ff0079 287.5px,#ff005d 351px)"></i>
<i style="top:162px;height:2px;background:linear-gradient(90deg,#006eff 0px,#0061ff 28.5px,#7544ff 93.5px,#ff20fe 164.5px,#ff0bc8 197.5px,#ff00ab 222.5px,#ff009d 237.5px,#ff007b 287.5px,#ff005e 351px)"></i>
<i style="top:164px;height:2px;background:linear-gradient(90deg,#006bff 0px,#015fff 29.5px,#7741ff 95.5px,#ff1dfe 166.5px,#ff09c9 199.5px,#ff00af 221.5px,#ff009e 239.5px,#ff007c 289.5px,#ff0060 351px)"></i>
<i style="top:166px;height:2px;background:linear-gradient(90deg,#0069ff 0px,#005dff 29.5px,#763eff 96.5px,#ff1bfe 168.5px,#ff08ca 200.5px,#ff00b4 219.5px,#ff00a0 240.5px,#ff007e 289.5px,#ff0062 351px)"></i>
<i style="top:168px;height:2px;background:linear-gradient(90deg,#0067ff 0px,#005bff 29.5px,#763cff 97.5px,#ff19fe 170.5px,#ff06cb 202.5px,#ff00b9 217.5px,#ff00a1 242.5px,#ff007f 290.5px,#ff0063 351px)"></i>
<i style="top:170px;height:2px;background:linear-gradient(90deg,#0065ff 0px,#0158ff 30.5px,#783aff 99.5px,#ff16fe 172.5px,#ff05cb 204.5px,#ff00be 215.5px,#ff00a2 243.5px,#ff0080 291.5px,#ff0065 351px)"></i>
<i style="top:172px;height:2px;background:linear-gradient(90deg,#0063ff 0px,#0156ff 30.5px,#7737ff 100.5px,#ff14fe 174.5px,#ff03cc 206.5px,#ff00a3 245.5px,#ff0082 292.5px,#f06 351px)"></i>
<i style="top:174px;height:2px;background:linear-gradient(90deg,#0061ff 0px,#0054ff 30.5px,#7735ff 101.5px,#ff12fe 176.5px,#ff01cc 208.5px,#ff00a5 246.5px,#ff0083 293.5px,#ff0068 351px)"></i>
<i style="top:176px;height:2px;background:linear-gradient(90deg,#005fff 0px,#0152ff 31.5px,#7933ff 103.5px,#ff10fe 178.5px,#ff00cd 210.5px,#ff00a5 248.5px,#ff0085 294.5px,#ff0069 351px)"></i>
<i style="top:178px;height:2px;background:linear-gradient(90deg,#005dff 0px,#0150ff 31.5px,#7831ff 104.5px,#ff0dfe 180.5px,#ff00cf 211.5px,#ff00a7 249.5px,#ff0086 295.5px,#ff006b 351px)"></i>
<i style="top:180px;height:2px;background:linear-gradient(90deg,#005bff 0px,#004eff 31.5px,#782fff 105.5px,#ff0bfe 182.5px,#ff00cf 213.5px,#ff00a8 250.5px,#f08 295.5px,#ff006d 351px)"></i>
<i style="top:182px;height:2px;background:linear-gradient(90deg,#0059ff 0px,#014cff 32.5px,#782dff 106.5px,#ff09fe 184.5px,#ff00e0 203.5px,#ff00d0 215.5px,#ff00a9 252.5px,#ff0089 297.5px,#ff006e 351px)"></i>
<i style="top:184px;height:2px;background:linear-gradient(90deg,#0057ff 0px,#014aff 32.5px,#782bff 107.5px,#ff07fe 186.5px,#ff00e6 201.5px,#ff00d0 217.5px,#ff00ab 253.5px,#ff008b 297.5px,#ff0070 351px)"></i>
<i style="top:186px;height:2px;background:linear-gradient(90deg,#05f 0px,#0049ff 32.5px,#7729ff 108.5px,#ff05fe 188.5px,#ff00ea 200.5px,#ff00d0 219.5px,#ff00ab 255.5px,#ff008c 298.5px,#ff0071 351px)"></i>
<i style="top:188px;height:2px;background:linear-gradient(90deg,#0054ff 0px,#0147ff 33.5px,#7927ff 110.5px,#ff03fe 190.5px,#ff00d2 220.5px,#ff00ad 256.5px,#ff008d 299.5px,#ff0073 351px)"></i>
<i style="top:190px;height:2px;background:linear-gradient(90deg,#0052ff 0px,#0145ff 33.5px,#7825ff 111.5px,#ff02fe 192.5px,#ff00d2 222.5px,#ff00ad 258.5px,#ff008f 300.5px,#ff0075 351px)"></i>
<i style="top:192px;height:2px;background:linear-gradient(90deg,#0050ff 0px,#04f 33.5px,#7824ff 112.5px,#ff00fe 194.5px,#ff00d3 224.5px,#ff00af 259.5px,#ff0090 301.5px,#ff0076 351px)"></i>
<i style="top:194px;height:2px;background:linear-gradient(90deg,#004fff 0px,#0142ff 34.5px,#7a22ff 114.5px,#ff00fe 196.5px,#ff00d4 225.5px,#ff00b0 260.5px,#ff0092 301.5px,#ff0078 351px)"></i>
<i style="top:196px;height:2px;background:linear-gradient(90deg,#004dff 0px,#0140ff 34.5px,#7920ff 115.5px,#f100ff 189.5px,#ff00fe 198.5px,#ff00d5 227.5px,#ff00b1 262.5px,#ff0093 302.5px,#ff0079 351px)"></i>
<i style="top:198px;height:2px;background:linear-gradient(90deg,#004bff 0px,#003fff 34.5px,#791eff 116.5px,#ea00ff 187.5px,#ff00fe 200.5px,#ff00d5 229.5px,#ff00b2 263.5px,#ff0094 303.5px,#ff007b 351px)"></i>
<i style="top:200px;height:2px;background:linear-gradient(90deg,#004aff 0px,#013dff 35.5px,#701fff 111.5px,#e400ff 185.5px,#ff00fe 202.5px,#ff00d6 231.5px,#ff00b4 264.5px,#ff0096 304.5px,#ff007d 351px)"></i>
<i style="top:202px;height:2px;background:linear-gradient(90deg,#0048ff 0px,#013cff 35.5px,#6d1fff 110.5px,#de00ff 183.5px,#ff00fe 204.5px,#ff00d6 233.5px,#ff00b4 266.5px,#ff0097 305.5px,#ff007e 351px)"></i>
<i style="top:204px;height:2px;background:linear-gradient(90deg,#0047ff 0px,#003aff 35.5px,#691eff 109.5px,#d800ff 181.5px,#ff00fe 206.5px,#ff00d8 234.5px,#ff00b6 267.5px,#f09 305.5px,#ff0080 351px)"></i>
<i style="top:206px;height:2px;background:linear-gradient(90deg,#0045ff 0px,#0138ff 36.5px,#681dff 109.5px,#d200ff 179.5px,#ff00fe 208.5px,#ff00d8 236.5px,#ff00b6 269.5px,#ff009a 306.5px,#ff0082 351px)"></i>
<i style="top:208px;height:2px;background:linear-gradient(90deg,#04f 0px,#0137ff 36.5px,#651cff 108.5px,#c0f 177.5px,#ff00fe 210.5px,#ff00d8 238.5px,#ff00b8 270.5px,#ff009c 307.5px,#ff0083 351px)"></i>
<i style="top:210px;height:2px;background:linear-gradient(90deg,#0043ff 0px,#0036ff 36.5px,#621bff 107.5px,#c600ff 175.5px,#ff00fe 212.5px,#ff00d9 240.5px,#ff00b9 271.5px,#ff009d 308.5px,#ff0085 351px)"></i>
<i style="top:212px;height:2px;background:linear-gradient(90deg,#0041ff 0px,#0134ff 37.5px,#611aff 107.5px,#c200ff 174.5px,#ff00fe 214.5px,#ff00d9 242.5px,#ff00ba 273.5px,#ff009e 309.5px,#ff0087 351px)"></i>
<i style="top:214px;height:2px;background:linear-gradient(90deg,#0040ff 0px,#0133ff 37.5px,#bd00ff 172.5px,#ff00fe 216.5px,#ff00da 243.5px,#f0b 274.5px,#ff00a0 309.5px,#f08 351px)"></i>
<i style="top:216px;height:2px;background:linear-gradient(90deg,#003fff 0px,#0032ff 37.5px,#b800ff 170.5px,#ff00fe 218.5px,#ff00db 245.5px,#ff00bc 275.5px,#ff00a1 310.5px,#ff008a 351px)"></i>
<i style="top:218px;height:2px;background:linear-gradient(90deg,#003dff 0px,#0130ff 38.5px,#b200ff 168.5px,#ff00fe 220.5px,#ff00dc 246.5px,#ff00be 276.5px,#ff00a3 311.5px,#ff008c 351px)"></i>
<i style="top:220px;height:2px;background:linear-gradient(90deg,#003cff 0px,#012fff 38.5px,#ad00ff 166.5px,#ff00fe 222.5px,#ff00dc 248.5px,#ff00be 278.5px,#ff00a4 312.5px,#ff008d 351px)"></i>
<i style="top:222px;height:2px;background:linear-gradient(90deg,#003bff 0px,#002eff 38.5px,#a800ff 164.5px,#ff00fe 224.5px,#f0d 250.5px,#ff00bf 279.5px,#ff00a6 312.5px,#ff008f 351px)"></i>
<i style="top:224px;height:2px;background:linear-gradient(90deg,#003aff 0px,#012cff 39.5px,#a400ff 162.5px,#ff00fe 226.5px,#f0d 252.5px,#ff00c1 280.5px,#ff00a7 313.5px,#ff0091 351px)"></i>
<i style="top:226px;height:2px;background:linear-gradient(90deg,#0038ff 0px,#012bff 39.5px,#9f00ff 160.5px,#ff00fe 228.5px,#f0d 254.5px,#ff00c1 282.5px,#ff0092 351px)"></i>
<i style="top:228px;height:2px;background:linear-gradient(90deg,#0037ff 0px,#002aff 39.5px,#9a00ff 158.5px,#ff00fe 230.5px,#ff00df 255.5px,#ff00c3 283.5px,#ff0094 351px)"></i>
<i style="top:230px;height:2px;background:linear-gradient(90deg,#0036ff 0px,#0029ff 39.5px,#9600ff 156.5px,#ff00fe 232.5px,#ff00df 257.5px,#ff00c4 284.5px,#ff0096 351px)"></i>
<i style="top:232px;height:2px;background:linear-gradient(90deg,#0035ff 0px,#0128ff 40.5px,#9100ff 154.5px,#ff00fe 234.5px,#ff00e0 258.5px,#ff00c5 285.5px,#ff0097 351px)"></i>
<i style="top:234px;height:2px;background:linear-gradient(90deg,#0034ff 0px,#0027ff 40.5px,#8d00ff 152.5px,#ff00fe 236.5px,#ff00e1 260.5px,#ff00c6 287.5px,#f09 351px)"></i>
<i style="top:236px;height:2px;background:linear-gradient(90deg,#03f 0px,#0026ff 40.5px,#8900ff 150.5px,#ff00fe 238.5px,#ff00e1 262.5px,#ff00c7 288.5px,#ff009b 351px)"></i>
<i style="top:238px;height:2px;background:linear-gradient(90deg,#0032ff 0px,#0124ff 41.5px,#8400ff 148.5px,#f0f 240.5px,#ff00c8 289.5px,#ff009c 351px)"></i>
<i style="top:240px;height:2px;background:linear-gradient(90deg,#0031ff 0px,#0024ff 41.5px,#8100ff 147.5px,#f0f 242.5px,#ff00c9 290.5px,#ff009e 351px)"></i>
<i style="top:242px;height:2px;background:linear-gradient(90deg,#002fff 0px,#0023ff 41.5px,#7d00ff 145.5px,#f0f 244.5px,#ff00ca 292.5px,#ff00a0 351px)"></i>
<i style="top:244px;height:2px;background:linear-gradient(90deg,#002eff 0px,#0121ff 42.5px,#7900ff 143.5px,#f0f 246.5px,#ff00cb 293.5px,#ff00a1 351px)"></i>
<i style="top:246px;height:2px;background:linear-gradient(90deg,#002dff 0px,#0020ff 42.5px,#7600ff 141.5px,#f0f 248.5px,#f0c 294.5px,#ff00a3 351px)"></i>
<i style="top:248px;height:2px;background:linear-gradient(90deg,#002cff 0px,#001fff 42.5px,#7200ff 139.5px,#f0f 250.5px,#ff00ce 295.5px,#ff00a5 351px)"></i>
<i style="top:250px;height:2px;background:linear-gradient(90deg,#002bff 0px,#011eff 43.5px,#6e00ff 137.5px,#f0f 252.5px,#ff00ce 297.5px,#ff00a7 351px)"></i>
<i style="top:252px;height:2px;background:linear-gradient(90deg,#002aff 0px,#001dff 43.5px,#6a00ff 135.5px,#f0f 254.5px,#ff00cf 298.5px,#ff00a8 351px)"></i>
<i style="top:254px;height:2px;background:linear-gradient(90deg,#002aff 0px,#001dff 43.5px,#6700ff 133.5px,#f0f 256.5px,#ff00d0 299.5px,#f0a 351px)"></i>
<i style="top:256px;height:2px;background:linear-gradient(90deg,#0029ff 0px,#011bff 44.5px,#6300ff 131.5px,#f0f 258.5px,#ff00d2 300.5px,#ff00ac 351px)"></i>
<i style="top:258px;height:2px;background:linear-gradient(90deg,#0028ff 0px,#001bff 44.5px,#6000ff 129.5px,#f0f 260.5px,#ff00d3 301.5px,#ff00ad 351px)"></i>
<i style="top:260px;height:2px;background:linear-gradient(90deg,#0027ff 0px,#001aff 44.5px,#5c00ff 127.5px,#f0f 262.5px,#ff00d3 303.5px,#ff00af 351px)"></i>
<i style="top:262px;height:2px;background:linear-gradient(90deg,#0026ff 0px,#0119ff 45.5px,#5900ff 125.5px,#f0f 264.5px,#ff00d4 304.5px,#ff00b1 351px)"></i>
<i style="top:264px;height:2px;background:linear-gradient(90deg,#0025ff 0px,#0018ff 45.5px,#5600ff 123.5px,#f0f 266.5px,#ff00d5 305.5px,#ff00b3 351px)"></i>
<i style="top:266px;height:2px;background:linear-gradient(90deg,#0024ff 0px,#0017ff 45.5px,#5200ff 121.5px,#f0f 268.5px,#ff00d7 306.5px,#ff00b4 351px)"></i>
<i style="top:268px;height:2px;background:linear-gradient(90deg,#0023ff 0px,#0116ff 46.5px,#4f00ff 119.5px,#f0f 270.5px,#ff00d8 307.5px,#ff00b6 351px)"></i>
<i style="top:270px;height:2px;background:linear-gradient(90deg,#02f 0px,#0015ff 46.5px,#4c00ff 117.5px,#f0f 272.5px,#ff00d8 309.5px,#ff00b8 351px)"></i>
<i style="top:272px;height:2px;background:linear-gradient(90deg,#02f 0px,#0015ff 46.5px,#4a00ff 116.5px,#f0f 274.5px,#ff00d9 310.5px,#ff00ba 351px)"></i>
<i style="top:274px;height:2px;background:linear-gradient(90deg,#0021ff 0px,#0114ff 47.5px,#4700ff 114.5px,#f0f 276.5px,#ff00da 311.5px,#f0b 351px)"></i>
<i style="top:276px;height:2px;background:linear-gradient(90deg,#0020ff 0px,#0013ff 47.5px,#40f 112.5px,#f0f 278.5px,#ff00db 312.5px,#ff00bd 351px)"></i>
<i style="top:278px;height:2px;background:linear-gradient(90deg,#001fff 0px,#0012ff 47.5px,#4100ff 110.5px,#fe00ff 279.5px,#ff00db 315.5px,#ff00bf 351px)"></i>
<i style="top:280px;height:2px;background:linear-gradient(90deg,#001eff 0px,#0111ff 48.5px,#3e00ff 108.5px,#fe00ff 281.5px,#ff00dc 316.5px,#ff00c1 351px)"></i>
<i style="top:282px;height:2px;background:linear-gradient(90deg,#001eff 0px,#0010ff 48.5px,#3b00ff 106.5px,#9b00ff 196.5px,#fe00ff 283.5px,#f0d 317.5px,#ff00c3 351px)"></i>
<i style="top:284px;height:2px;background:linear-gradient(90deg,#001dff 0px,#0010ff 48.5px,#3800ff 104.5px,#9a00ff 196.5px,#fe00ff 285.5px,#ff00de 318.5px,#ff00c4 351px)"></i>
<i style="top:286px;height:2px;background:linear-gradient(90deg,#001cff 0px,#010fff 49.5px,#3600ff 102.5px,#9800ff 196.5px,#fe00ff 287.5px,#ff00c6 351px)"></i>
<i style="top:288px;height:2px;background:linear-gradient(90deg,#001bff 0px,#010eff 49.5px,#30f 100.5px,#9700ff 196.5px,#fe00ff 289.5px,#ff00c8 351px)"></i>
<i style="top:290px;height:2px;background:linear-gradient(90deg,#001bff 0px,#000dff 49.5px,#3000ff 98.5px,#9500ff 196.5px,#fe00ff 291.5px,#ff00ca 351px)"></i>
<i style="top:292px;height:2px;background:linear-gradient(90deg,#001aff 0px,#010dff 50.5px,#2e00ff 96.5px,#9400ff 196.5px,#fe00ff 293.5px,#ff00cb 351px)"></i>
<i style="top:294px;height:2px;background:linear-gradient(90deg,#0019ff 0px,#010cff 50.5px,#2b00ff 94.5px,#9200ff 196.5px,#fe00ff 295.5px,#ff00cd 351px)"></i>
<i style="top:296px;height:2px;background:linear-gradient(90deg,#0019ff 0px,#000bff 50.5px,#2800ff 92.5px,#9100ff 196.5px,#fe00ff 297.5px,#ff00cf 351px)"></i>
<i style="top:298px;height:2px;background:linear-gradient(90deg,#0018ff 0px,#000bff 50.5px,#2600ff 90.5px,#9000ff 196.5px,#fe00ff 299.5px,#ff00d1 351px)"></i>
<i style="top:300px;height:2px;background:linear-gradient(90deg,#0017ff 0px,#010aff 51.5px,#2300ff 88.5px,#8e00ff 196.5px,#fe00ff 301.5px,#ff00d3 351px)"></i>
<i style="top:302px;height:2px;background:linear-gradient(90deg,#0017ff 0px,#0009ff 51.5px,#2100ff 86.5px,#8c00ff 195.5px,#f0f 304.5px,#ff00d4 351px)"></i>
<i style="top:304px;height:2px;background:linear-gradient(90deg,#0016ff 0px,#0009ff 51.5px,#2000ff 85.5px,#8c00ff 196.5px,#f0f 306.5px,#ff00d6 351px)"></i>
<i style="top:306px;height:2px;background:linear-gradient(90deg,#0015ff 0px,#0108ff 52.5px,#1d00ff 83.5px,#8a00ff 196.5px,#f0f 308.5px,#ff00d8 351px)"></i>
<i style="top:308px;height:2px;background:linear-gradient(90deg,#0015ff 0px,#0007ff 52.5px,#1b00ff 81.5px,#8a00ff 197.5px,#fe00ff 309.5px,#ff00da 351px)"></i>
<i style="top:310px;height:2px;background:linear-gradient(90deg,#0014ff 0px,#0007ff 52.5px,#1900ff 79.5px,#8900ff 197.5px,#fe00ff 311.5px,#ff00dc 351px)"></i>
<i style="top:312px;height:2px;background:linear-gradient(90deg,#0013ff 0px,#0106ff 53.5px,#1600ff 77.5px,#80f 197.5px,#fe00ff 313.5px,#ff00de 351px)"></i>
<i style="top:314px;height:2px;background:linear-gradient(90deg,#0013ff 0px,#0005ff 53.5px,#1400ff 75.5px,#7d00ff 187.5px,#fe00ff 315.5px,#ff00df 351px)"></i>
<i style="top:316px;height:2px;background:linear-gradient(90deg,#0012ff 0px,#0005ff 53.5px,#1200ff 73.5px,#7c00ff 187.5px,#fe00ff 317.5px,#ff00e1 351px)"></i>
<i style="top:318px;height:2px;background:linear-gradient(90deg,#01f 0px,#0104ff 54.5px,#1000ff 71.5px,#7c00ff 189.5px,#fe00ff 319.5px,#ff00e3 351px)"></i>
<i style="top:320px;height:2px;background:linear-gradient(90deg,#01f 0px,#0004ff 54.5px,#0d00ff 69.5px,#7c00ff 190.5px,#fe00ff 321.5px,#ff00e5 351px)"></i>
<i style="top:322px;height:2px;background:linear-gradient(90deg,#0010ff 0px,#0003ff 54.5px,#7c00ff 191.5px,#fe00ff 323.5px,#ff00e7 351px)"></i>
<i style="top:324px;height:2px;background:linear-gradient(90deg,#0010ff 0px,#0102ff 55.5px,#7d00ff 193.5px,#fe00ff 325.5px,#ff00e9 351px)"></i>
<i style="top:326px;height:2px;background:linear-gradient(90deg,#000fff 0px,#0002ff 55.5px,#7d00ff 194.5px,#fe00ff 327.5px,#ff00eb 351px)"></i>
<i style="top:328px;height:2px;background:linear-gradient(90deg,#000fff 0px,#0001ff 55.5px,#7c00ff 195.5px,#fe00ff 329.5px,#ff00ec 351px)"></i>
<i style="top:330px;height:2px;background:linear-gradient(90deg,#000eff 0px,#0101ff 56.5px,#7c00ff 196.5px,#fe00ff 331.5px,#f0e 351px)"></i>
<i style="top:332px;height:2px;background:linear-gradient(90deg,#000dff 0px,#00f 56.5px,#7c00ff 197.5px,#fe00ff 333.5px,#ff00f0 351px)"></i>
<i style="top:334px;height:2px;background:linear-gradient(90deg,#000dff 0px,#00f 56.5px,#7c00ff 198.5px,#fe00ff 335.5px,#ff00f2 351px)"></i></div>
<div class="a" style="left:1403px;top:580.5px;width:252px;height:27px;background:#2f2f2f"></div>
<div class="t" style="left:1404px;top:585.01px;font-size:19.6px;color:#f4f4f4;font-weight:400;">Gamut Coverage:&nbsp; 84,7%</div>
<div class="a rows" style="left:637px;top:678px;width:342px;height:199px"><i style="top:0px;height:3px;background:linear-gradient(90deg,#85ffcd 0px,#c0ffca 143.5px,#feffc8 278.5px,#ffe4b1 342px)"></i>
<i style="top:3px;height:3px;background:linear-gradient(90deg,#86ffce 0px,#c1ffcc 141.5px,#feffc9 275.5px,#ffe2b1 342px)"></i>
<i style="top:6px;height:3px;background:linear-gradient(90deg,#87ffd0 0px,#c2ffcd 140.5px,#feffcb 272.5px,#ffe1b2 342px)"></i>
<i style="top:9px;height:3px;background:linear-gradient(90deg,#88ffd1 0px,#c2ffcf 138.5px,#ffc 269.5px,#ffe0b2 342px)"></i>
<i style="top:12px;height:3px;background:linear-gradient(90deg,#89ffd2 0px,#c2ffd0 136.5px,#ffffce 266.5px,#ffdeb2 342px)"></i>
<i style="top:15px;height:3px;background:linear-gradient(90deg,#8affd4 0px,#c3ffd2 134.5px,#ffffcf 263.5px,#ffddb2 342px)"></i>
<i style="top:18px;height:3px;background:linear-gradient(90deg,#8bffd5 0px,#c3ffd3 132.5px,#ffffd1 260.5px,#ffdcb3 342px)"></i>
<i style="top:21px;height:3px;background:linear-gradient(90deg,#8cffd7 0px,#c4ffd5 131.5px,#feffd3 256.5px,#ffdab3 342px)"></i>
<i style="top:24px;height:3px;background:linear-gradient(90deg,#8dffd8 0px,#c4ffd6 129.5px,#ffffd4 253.5px,#ffd9b3 342px)"></i>
<i style="top:27px;height:3px;background:linear-gradient(90deg,#8effd9 0px,#c5ffd8 127.5px,#ffffd6 250.5px,#ffd8b4 342px)"></i>
<i style="top:30px;height:3px;background:linear-gradient(90deg,#8fffdb 0px,#c5ffd9 125.5px,#ffffd7 247.5px,#ffd6b4 342px)"></i>
<i style="top:33px;height:3px;background:linear-gradient(90deg,#90ffdc 0px,#c5ffdb 123.5px,#ffffd9 244.5px,#ffd5b4 342px)"></i>
<i style="top:36px;height:3px;background:linear-gradient(90deg,#92ffde 0px,#c6ffdc 121.5px,#ffffda 241.5px,#ffd4b4 342px)"></i>
<i style="top:39px;height:3px;background:linear-gradient(90deg,#93ffdf 0px,#c7ffde 121.5px,#ffffdc 237.5px,#ffd2b5 342px)"></i>
<i style="top:42px;height:3px;background:linear-gradient(90deg,#94ffe1 0px,#ffffde 234.5px,#ffd1b5 342px)"></i>
<i style="top:45px;height:3px;background:linear-gradient(90deg,#95ffe2 0px,#ffffdf 231.5px,#ffd0b5 342px)"></i>
<i style="top:48px;height:3px;background:linear-gradient(90deg,#96ffe4 0px,#ffffe1 228.5px,#ffcfb5 342px)"></i>
<i style="top:51px;height:3px;background:linear-gradient(90deg,#97ffe5 0px,#ffffe3 225.5px,#ffcdb6 342px)"></i>
<i style="top:54px;height:3px;background:linear-gradient(90deg,#98ffe7 0px,#ffffe5 221.5px,#ffccb6 342px)"></i>
<i style="top:57px;height:3px;background:linear-gradient(90deg,#99ffe8 0px,#ffffe6 218.5px,#ffcbb6 342px)"></i>
<i style="top:60px;height:3px;background:linear-gradient(90deg,#9affea 0px,#ffffe8 215.5px,#ffc9b6 342px)"></i>
<i style="top:63px;height:3px;background:linear-gradient(90deg,#9bffeb 0px,#ffffe9 212.5px,#ffc8b7 342px)"></i>
<i style="top:66px;height:3px;background:linear-gradient(90deg,#9dffed 0px,#ffffeb 209.5px,#ffe1cf 273.5px,#ffc7b7 342px)"></i>
<i style="top:69px;height:3px;background:linear-gradient(90deg,#9effee 0px,#ffffed 206.5px,#ffe1d0 271.5px,#ffc6b7 342px)"></i>
<i style="top:72px;height:3px;background:linear-gradient(90deg,#9ffff0 0px,#ffffef 202.5px,#ffe0d1 270.5px,#ffc4b7 342px)"></i>
<i style="top:75px;height:3px;background:linear-gradient(90deg,#a0fff2 0px,#fffff0 199.5px,#ffdfd2 268.5px,#ffc3b8 342px)"></i>
<i style="top:78px;height:3px;background:linear-gradient(90deg,#a1fff3 0px,#fffff2 196.5px,#ffded3 266.5px,#ffc2b8 342px)"></i>
<i style="top:81px;height:3px;background:linear-gradient(90deg,#a2fff5 0px,#fffff4 193.5px,#ffded4 264.5px,#ffc1b8 342px)"></i>
<i style="top:84px;height:3px;background:linear-gradient(90deg,#a4fff6 0px,#fffff6 190.5px,#ffddd5 262.5px,#ffbfb8 342px)"></i>
<i style="top:87px;height:3px;background:linear-gradient(90deg,#a5fff8 0px,#fffff8 186.5px,#ffdcd6 261.5px,#ffbeb8 342px)"></i>
<i style="top:90px;height:3px;background:linear-gradient(90deg,#a6fffa 0px,#fffff9 183.5px,#ffdcd7 259.5px,#ffbdb9 342px)"></i>
<i style="top:93px;height:3px;background:linear-gradient(90deg,#a7fffb 0px,#fffffb 180.5px,#ffdbd8 257.5px,#ffbcb9 342px)"></i>
<i style="top:96px;height:3px;background:linear-gradient(90deg,#a8fffd 0px,#fffffd 177.5px,#ffdad9 255.5px,#ffbbb9 342px)"></i>
<i style="top:99px;height:3px;background:linear-gradient(90deg,#aff 0px,#fff 174.5px,#ffdada 253.5px,#ffb9b9 342px)"></i>
<i style="top:102px;height:3px;background:linear-gradient(90deg,#aafeff 0px,#fffdff 174.5px,#ffd9da 252.5px,#ffb8ba 342px)"></i>
<i style="top:105px;height:3px;background:linear-gradient(90deg,#aafcff 0px,#fffbff 174.5px,#ffd7db 252.5px,#ffb7ba 342px)"></i>
<i style="top:108px;height:3px;background:linear-gradient(90deg,#aafaff 0px,#fffaff 174.5px,#ffd6da 253.5px,#ffb6ba 342px)"></i>
<i style="top:111px;height:3px;background:linear-gradient(90deg,#aaf9ff 0px,#fff8ff 174.5px,#ffd4db 253.5px,#ffb5ba 342px)"></i>
<i style="top:114px;height:3px;background:linear-gradient(90deg,#aaf7ff 0px,#fff6ff 175.5px,#ffd3db 253.5px,#ffb3bb 342px)"></i>
<i style="top:117px;height:3px;background:linear-gradient(90deg,#aaf5ff 0px,#fff4ff 175.5px,#ffd1db 253.5px,#ffb2bb 342px)"></i>
<i style="top:120px;height:3px;background:linear-gradient(90deg,#abf4ff 0px,#fff3ff 175.5px,#ffd0db 253.5px,#ffb1bb 342px)"></i>
<i style="top:123px;height:3px;background:linear-gradient(90deg,#abf2ff 0px,#fff1ff 175.5px,#ffcedb 254.5px,#ffb0bb 342px)"></i>
<i style="top:126px;height:3px;background:linear-gradient(90deg,#abf0ff 0px,#ffefff 176.5px,#ffcddb 254.5px,#ffafbc 342px)"></i>
<i style="top:129px;height:3px;background:linear-gradient(90deg,#abefff 0px,#ffedff 176.5px,#ffcbdb 254.5px,#ffaebc 342px)"></i>
<i style="top:132px;height:3px;background:linear-gradient(90deg,#abedff 0px,#ffecff 176.5px,#ffcadb 254.5px,#ffacbc 342px)"></i>
<i style="top:135px;height:3px;background:linear-gradient(90deg,#abecff 0px,#ffeaff 176.5px,#ffc8db 255.5px,#ffabbc 342px)"></i>
<i style="top:138px;height:3px;background:linear-gradient(90deg,#abeaff 0px,#ffe8ff 177.5px,#ffc7dc 254.5px,#ffaabc 342px)"></i>
<i style="top:141px;height:3px;background:linear-gradient(90deg,#abe8ff 0px,#ffe6ff 177.5px,#ffc6dc 254.5px,#ffa9bd 342px)"></i>
<i style="top:144px;height:3px;background:linear-gradient(90deg,#abe7ff 0px,#ffe5ff 177.5px,#ffc4dc 255.5px,#ffa8bd 342px)"></i>
<i style="top:147px;height:3px;background:linear-gradient(90deg,#abe5ff 0px,#ffe3ff 177.5px,#ffc3dc 255.5px,#ffa7bd 342px)"></i>
<i style="top:150px;height:3px;background:linear-gradient(90deg,#ace4ff 0px,#ffe1ff 178.5px,#ffc2dc 255.5px,#ffa6bd 342px)"></i>
<i style="top:153px;height:3px;background:linear-gradient(90deg,#ace2ff 0px,#ffe0ff 178.5px,#ffc0dc 255.5px,#ffa4be 342px)"></i>
<i style="top:156px;height:3px;background:linear-gradient(90deg,#ace1ff 0px,#ffdeff 178.5px,#ffbfdd 255.5px,#ffa3be 342px)"></i>
<i style="top:159px;height:3px;background:linear-gradient(90deg,#acdfff 0px,#ffdcff 178.5px,#ffbddc 256.5px,#ffa2be 342px)"></i>
<i style="top:162px;height:3px;background:linear-gradient(90deg,#acddff 0px,#ffdbff 179.5px,#ffbcdd 255.5px,#ffa1be 342px)"></i>
<i style="top:165px;height:3px;background:linear-gradient(90deg,#acdcff 0px,#ffd9ff 179.5px,#fbd 255.5px,#ffa0be 342px)"></i>
<i style="top:168px;height:3px;background:linear-gradient(90deg,#acdaff 0px,#ffd8ff 179.5px,#ffbadd 256.5px,#ff9fbf 342px)"></i>
<i style="top:171px;height:3px;background:linear-gradient(90deg,#acd9ff 0px,#ffd6ff 179.5px,#ffb8dd 256.5px,#ff9ebf 342px)"></i>
<i style="top:174px;height:3px;background:linear-gradient(90deg,#acd7ff 0px,#ffd4ff 180.5px,#ffb7dd 256.5px,#ff9dbf 342px)"></i>
<i style="top:177px;height:3px;background:linear-gradient(90deg,#acd6ff 0px,#ffd3ff 180.5px,#ffb6dd 256.5px,#ff9cbf 342px)"></i>
<i style="top:180px;height:3px;background:linear-gradient(90deg,#add4ff 0px,#ffd1ff 180.5px,#ffb4de 256.5px,#ff9bbf 342px)"></i>
<i style="top:183px;height:3px;background:linear-gradient(90deg,#add3ff 0px,#ffd0ff 180.5px,#ffb3dd 257.5px,#ff99c0 342px)"></i>
<i style="top:186px;height:3px;background:linear-gradient(90deg,#add2ff 0px,#ffceff 181.5px,#ffb2de 257.5px,#ff98c0 342px)"></i>
<i style="top:189px;height:3px;background:linear-gradient(90deg,#add0ff 0px,#fcf 181.5px,#ffb0de 257.5px,#ff97c0 342px)"></i>
<i style="top:192px;height:3px;background:linear-gradient(90deg,#adcfff 0px,#ffcbff 181.5px,#ffafde 257.5px,#ff96c0 342px)"></i>
<i style="top:195px;height:3px;background:linear-gradient(90deg,#adcdff 0px,#ffc9ff 181.5px,#ffadde 258.5px,#ff95c1 342px)"></i>
<i style="top:198px;height:1px;background:linear-gradient(90deg,#adccff 0px,#ffc8ff 181.5px,#ffadde 258.5px,#ff94c1 342px)"></i></div>
<div class="a" style="left:995px;top:662px;width:653px;height:225px;background:#0c0c0c"></div>
<div class="a" style="left:996px;top:663px;width:633px;height:34px;background:linear-gradient(#323232 0,#2c2c2c 17px,#141414 17px,#161616 34px)"></div>
<div class="a" style="left:1629px;top:663px;width:18px;height:34px;background:#2c2c2c"></div>
<div class="a" style="left:996px;top:663px;width:633px;height:204px;overflow:hidden"><div class="a" style="left:0;top:34px;width:633px;height:31px;background:#434343"></div><div class="a" style="left:0;top:65px;width:633px;height:31px;background:linear-gradient(90deg,#858585,#7c7c7c)"></div><div class="a" style="left:0;top:96px;width:633px;height:31px;background:#434343"></div><div class="a" style="left:0;top:127px;width:633px;height:31px;background:linear-gradient(90deg,#858585,#7c7c7c)"></div><div class="a" style="left:0;top:158px;width:633px;height:31px;background:#434343"></div><div class="a" style="left:0;top:189px;width:633px;height:31px;background:linear-gradient(90deg,#858585,#7c7c7c)"></div><div class="t" style="left:132px;top:9.18625px;font-size:17.5px;color:#f2f2f2;font-weight:400;transform:translateX(-50%) scaleX(0.92);transform-origin:50% 0">White</div><div class="t" style="left:205px;top:9.18625px;font-size:17.5px;color:#f2f2f2;font-weight:400;transform:translateX(-50%) scaleX(0.92);transform-origin:50% 0">Red</div><div class="t" style="left:278.2px;top:9.18625px;font-size:17.5px;color:#f2f2f2;font-weight:400;transform:translateX(-50%) scaleX(0.92);transform-origin:50% 0">Green</div><div class="t" style="left:351px;top:9.18625px;font-size:17.5px;color:#f2f2f2;font-weight:400;transform:translateX(-50%) scaleX(0.92);transform-origin:50% 0">Blue</div><div class="t" style="left:424.6px;top:9.18625px;font-size:17.5px;color:#f2f2f2;font-weight:400;transform:translateX(-50%) scaleX(0.92);transform-origin:50% 0">Cyan</div><div class="t" style="left:498.9px;top:9.18625px;font-size:17.5px;color:#f2f2f2;font-weight:400;transform:translateX(-50%) scaleX(0.92);transform-origin:50% 0">Magenta</div><div class="t" style="left:572.9px;top:9.18625px;font-size:17.5px;color:#f2f2f2;font-weight:400;transform:translateX(-50%) scaleX(0.92);transform-origin:50% 0">Yellow</div><div class="t" style="left:630px;top:9.18625px;font-size:17.5px;color:#f2f2f2;font-weight:400;transform: scaleX(0.92);transform-origin:0 0">1</div><div class="t" style="left:13px;top:40.9165px;font-size:19px;color:#f6f6f6;font-weight:700;transform: scaleX(0.84);transform-origin:0 0">x: CIE31</div><div class="t" style="left:98px;top:40.9165px;font-size:19px;color:#f0f0f0;font-weight:400;transform: scaleX(0.86);transform-origin:0 0">0,3140</div><div class="t" style="left:175px;top:40.9165px;font-size:19px;color:#f0f0f0;font-weight:400;transform: scaleX(0.86);transform-origin:0 0">0,6262</div><div class="t" style="left:243px;top:40.9165px;font-size:19px;color:#f0f0f0;font-weight:400;transform: scaleX(0.86);transform-origin:0 0">0,3311</div><div class="t" style="left:321.5px;top:40.9165px;font-size:19px;color:#f0f0f0;font-weight:400;transform: scaleX(0.86);transform-origin:0 0">0,1554</div><div class="t" style="left:390px;top:40.9165px;font-size:19px;color:#f0f0f0;font-weight:400;transform: scaleX(0.86);transform-origin:0 0">0,2511</div><div class="t" style="left:467px;top:40.9165px;font-size:19px;color:#f0f0f0;font-weight:400;transform: scaleX(0.86);transform-origin:0 0">0,3545</div><div class="t" style="left:539px;top:40.9165px;font-size:19px;color:#f0f0f0;font-weight:400;transform: scaleX(0.86);transform-origin:0 0">0,4243</div><div class="t" style="left:616px;top:40.9165px;font-size:19px;color:#f0f0f0;font-weight:400;transform: scaleX(0.86);transform-origin:0 0">0,3140</div><div class="t" style="left:13px;top:71.9165px;font-size:19px;color:#f6f6f6;font-weight:700;transform: scaleX(0.84);transform-origin:0 0">y: CIE31</div><div class="t" style="left:98px;top:71.9165px;font-size:19px;color:#f0f0f0;font-weight:400;transform: scaleX(0.86);transform-origin:0 0">0,3415</div><div class="t" style="left:175px;top:71.9165px;font-size:19px;color:#f0f0f0;font-weight:400;transform: scaleX(0.86);transform-origin:0 0">0,3548</div><div class="t" style="left:243px;top:71.9165px;font-size:19px;color:#f0f0f0;font-weight:400;transform: scaleX(0.86);transform-origin:0 0">0,5922</div><div class="t" style="left:321.5px;top:71.9165px;font-size:19px;color:#f0f0f0;font-weight:400;transform: scaleX(0.86);transform-origin:0 0">0,0603</div><div class="t" style="left:390px;top:71.9165px;font-size:19px;color:#f0f0f0;font-weight:400;transform: scaleX(0.86);transform-origin:0 0">0,3503</div><div class="t" style="left:467px;top:71.9165px;font-size:19px;color:#f0f0f0;font-weight:400;transform: scaleX(0.86);transform-origin:0 0">0,1846</div><div class="t" style="left:539px;top:71.9165px;font-size:19px;color:#f0f0f0;font-weight:400;transform: scaleX(0.86);transform-origin:0 0">0,5179</div><div class="t" style="left:616px;top:71.9165px;font-size:19px;color:#f0f0f0;font-weight:400;transform: scaleX(0.86);transform-origin:0 0">0,3415</div><div class="t" style="left:13px;top:102.917px;font-size:19px;color:#f6f6f6;font-weight:700;transform: scaleX(0.84);transform-origin:0 0">Y</div><div class="t" style="left:98px;top:102.917px;font-size:19px;color:#f0f0f0;font-weight:400;transform: scaleX(0.86);transform-origin:0 0">186,1218</div><div class="t" style="left:175px;top:102.917px;font-size:19px;color:#f0f0f0;font-weight:400;transform: scaleX(0.86);transform-origin:0 0">55,7190</div><div class="t" style="left:243px;top:102.917px;font-size:19px;color:#f0f0f0;font-weight:400;transform: scaleX(0.86);transform-origin:0 0">146,3231</div><div class="t" style="left:321.5px;top:102.917px;font-size:19px;color:#f0f0f0;font-weight:400;transform: scaleX(0.86);transform-origin:0 0">12,2692</div><div class="t" style="left:390px;top:102.917px;font-size:19px;color:#f0f0f0;font-weight:400;transform: scaleX(0.86);transform-origin:0 0">164,6364</div><div class="t" style="left:467px;top:102.917px;font-size:19px;color:#f0f0f0;font-weight:400;transform: scaleX(0.86);transform-origin:0 0">63,0475</div><div class="t" style="left:539px;top:102.917px;font-size:19px;color:#f0f0f0;font-weight:400;transform: scaleX(0.86);transform-origin:0 0">171,5998</div><div class="t" style="left:616px;top:102.917px;font-size:19px;color:#f0f0f0;font-weight:400;transform: scaleX(0.86);transform-origin:0 0">353,3300</div><div class="t" style="left:13px;top:133.917px;font-size:19px;color:#f6f6f6;font-weight:700;transform: scaleX(0.84);transform-origin:0 0">Target Y</div><div class="t" style="left:98px;top:133.917px;font-size:19px;color:#f0f0f0;font-weight:400;transform: scaleX(0.86);transform-origin:0 0">184,0808</div><div class="t" style="left:175px;top:133.917px;font-size:19px;color:#f0f0f0;font-weight:400;transform: scaleX(0.86);transform-origin:0 0">39,1459</div><div class="t" style="left:243px;top:133.917px;font-size:19px;color:#f0f0f0;font-weight:400;transform: scaleX(0.86);transform-origin:0 0">131,6469</div><div class="t" style="left:321.5px;top:133.917px;font-size:19px;color:#f0f0f0;font-weight:400;transform: scaleX(0.86);transform-origin:0 0">13,2880</div><div class="t" style="left:390px;top:133.917px;font-size:19px;color:#f0f0f0;font-weight:400;transform: scaleX(0.86);transform-origin:0 0">144,9349</div><div class="t" style="left:467px;top:133.917px;font-size:19px;color:#f0f0f0;font-weight:400;transform: scaleX(0.86);transform-origin:0 0">52,4339</div><div class="t" style="left:539px;top:133.917px;font-size:19px;color:#f0f0f0;font-weight:400;transform: scaleX(0.86);transform-origin:0 0">170,7928</div><div class="t" style="left:616px;top:133.917px;font-size:19px;color:#f0f0f0;font-weight:400;transform: scaleX(0.86);transform-origin:0 0">353,3300</div><div class="t" style="left:13px;top:164.917px;font-size:19px;color:#f6f6f6;font-weight:700;transform: scaleX(0.84);transform-origin:0 0">ΔE 2000</div><div class="t" style="left:98px;top:164.917px;font-size:19px;color:#f0f0f0;font-weight:400;transform: scaleX(0.86);transform-origin:0 0">6,6327</div><div class="t" style="left:175px;top:164.917px;font-size:19px;color:#f0f0f0;font-weight:400;transform: scaleX(0.86);transform-origin:0 0">9,1600</div><div class="t" style="left:243px;top:164.917px;font-size:19px;color:#f0f0f0;font-weight:400;transform: scaleX(0.86);transform-origin:0 0">4,9395</div><div class="t" style="left:321.5px;top:164.917px;font-size:19px;color:#f0f0f0;font-weight:400;transform: scaleX(0.86);transform-origin:0 0">1,4357</div><div class="t" style="left:390px;top:164.917px;font-size:19px;color:#f0f0f0;font-weight:400;transform: scaleX(0.86);transform-origin:0 0">6,3892</div><div class="t" style="left:467px;top:164.917px;font-size:19px;color:#f0f0f0;font-weight:400;transform: scaleX(0.86);transform-origin:0 0">5,5308</div><div class="t" style="left:539px;top:164.917px;font-size:19px;color:#f0f0f0;font-weight:400;transform: scaleX(0.86);transform-origin:0 0">1,6661</div><div class="t" style="left:616px;top:164.917px;font-size:19px;color:#f0f0f0;font-weight:400;transform: scaleX(0.86);transform-origin:0 0">6,7012</div><div class="t" style="left:13px;top:195.917px;font-size:19px;color:#f6f6f6;font-weight:700;transform: scaleX(0.84);transform-origin:0 0">ΔE ITP</div><div class="t" style="left:98px;top:195.917px;font-size:19px;color:#f0f0f0;font-weight:400;transform: scaleX(0.86);transform-origin:0 0">5,3851</div><div class="t" style="left:175px;top:195.917px;font-size:19px;color:#f0f0f0;font-weight:400;transform: scaleX(0.86);transform-origin:0 0">35,6010</div><div class="t" style="left:243px;top:195.917px;font-size:19px;color:#f0f0f0;font-weight:400;transform: scaleX(0.86);transform-origin:0 0">17,1266</div><div class="t" style="left:321.5px;top:195.917px;font-size:19px;color:#f0f0f0;font-weight:400;transform: scaleX(0.86);transform-origin:0 0">14,0535</div><div class="t" style="left:390px;top:195.917px;font-size:19px;color:#f0f0f0;font-weight:400;transform: scaleX(0.86);transform-origin:0 0">19,1171</div><div class="t" style="left:467px;top:195.917px;font-size:19px;color:#f0f0f0;font-weight:400;transform: scaleX(0.86);transform-origin:0 0">20,6308</div><div class="t" style="left:539px;top:195.917px;font-size:19px;color:#f0f0f0;font-weight:400;transform: scaleX(0.86);transform-origin:0 0">9,5305</div><div class="t" style="left:616px;top:195.917px;font-size:19px;color:#f0f0f0;font-weight:400;transform: scaleX(0.86);transform-origin:0 0">4,5120</div></div>
<div class="a" style="left:1630px;top:697px;width:17px;height:170px;background:#5a5a5a;border-radius:3px"></div>
<div class="a" style="left:1631px;top:698px;width:15px;height:17px;background:#707070;border:1px solid #888;border-radius:4px"></div>
<svg style="left:1633px;top:701px" width="11" height="8"><path d="M0.5 7.5H10.5L5.5 1Z" fill="#3a3a3a"/></svg>
<div class="a" style="left:1632px;top:719px;width:13px;height:104px;background:#474747;border-radius:6px"></div>
<div class="a" style="left:1631px;top:849px;width:15px;height:17px;background:#707070;border:1px solid #888;border-radius:4px"></div>
<svg style="left:1633px;top:853px" width="11" height="8"><path d="M0.5 0.5H10.5L5.5 7Z" fill="#3a3a3a"/></svg>
<div class="a" style="left:996px;top:867px;width:634px;height:20px;background:#5a5a5a"></div>
<div class="a" style="left:998px;top:869px;width:14px;height:16px;background:#6e6e6e;border:1px solid #888;border-radius:4px"></div>
<svg style="left:1001px;top:872px" width="8" height="11"><path d="M7 0.5V10.5L1 5.5Z" fill="#3a3a3a"/></svg>
<div class="a" style="left:1015.5px;top:869.5px;width:545px;height:15px;background:#474747;border-radius:7px"></div>
<div class="a" style="left:1614px;top:869px;width:15px;height:16px;background:#6e6e6e;border:1px solid #888;border-radius:4px"></div>
<svg style="left:1617px;top:872px" width="8" height="11"><path d="M1 0.5V10.5L7 5.5Z" fill="#3a3a3a"/></svg>
<div class="a" style="left:1630px;top:867px;width:17px;height:20px;background:#2e2e2e"></div>
<div class="a" style="left:1.5px;top:931px;width:155.5px;height:75px;border-radius:6px;background:linear-gradient(#aaaaaa 0,#8e8e8e 30%,#6c6c6c 60%,#575757 100%)"></div>
<div class="a" style="left:7.1px;top:937px;width:143.5px;height:45.5px;border-radius:6px;background:#c0c0c0;box-shadow:inset 0 1.5px 1px rgba(0,0,0,.35)"></div>
<div class="t" style="left:79.2px;top:990.13px;font-size:13.2px;color:#2a2a2a;font-weight:700;transform:translateX(-50%);transform-origin:50% 0;">White</div>
<div class="a" style="left:159px;top:931px;width:155.5px;height:75px;border-radius:6px;background:linear-gradient(#aaaaaa 0,#8e8e8e 30%,#6c6c6c 60%,#575757 100%)"></div>
<div class="a" style="left:164.6px;top:937px;width:143.5px;height:45.5px;border-radius:6px;background:#c00000;box-shadow:inset 0 1.5px 1px rgba(0,0,0,.35)"></div>
<div class="t" style="left:236.7px;top:990.13px;font-size:13.2px;color:#2a2a2a;font-weight:700;transform:translateX(-50%);transform-origin:50% 0;">Red</div>
<div class="a" style="left:317px;top:931px;width:155.5px;height:75px;border-radius:6px;background:linear-gradient(#aaaaaa 0,#8e8e8e 30%,#6c6c6c 60%,#575757 100%)"></div>
<div class="a" style="left:322.6px;top:937px;width:143.5px;height:45.5px;border-radius:6px;background:#00c000;box-shadow:inset 0 1.5px 1px rgba(0,0,0,.35)"></div>
<div class="t" style="left:394.7px;top:990.13px;font-size:13.2px;color:#2a2a2a;font-weight:700;transform:translateX(-50%);transform-origin:50% 0;">Green</div>
<div class="a" style="left:475px;top:931px;width:155.5px;height:75px;border-radius:6px;background:linear-gradient(#aaaaaa 0,#8e8e8e 30%,#6c6c6c 60%,#575757 100%)"></div>
<div class="a" style="left:480.6px;top:937px;width:143.5px;height:45.5px;border-radius:6px;background:#0000c0;box-shadow:inset 0 1.5px 1px rgba(0,0,0,.35)"></div>
<div class="t" style="left:552.7px;top:990.13px;font-size:13.2px;color:#2a2a2a;font-weight:700;transform:translateX(-50%);transform-origin:50% 0;">Blue</div>
<div class="a" style="left:633px;top:931px;width:155.5px;height:75px;border-radius:6px;background:linear-gradient(#aaaaaa 0,#8e8e8e 30%,#6c6c6c 60%,#575757 100%)"></div>
<div class="a" style="left:638.6px;top:937px;width:143.5px;height:45.5px;border-radius:6px;background:#00c0c0;box-shadow:inset 0 1.5px 1px rgba(0,0,0,.35)"></div>
<div class="t" style="left:710.7px;top:990.13px;font-size:13.2px;color:#2a2a2a;font-weight:700;transform:translateX(-50%);transform-origin:50% 0;">Cyan</div>
<div class="a" style="left:790.5px;top:931px;width:155.5px;height:75px;border-radius:6px;background:linear-gradient(#aaaaaa 0,#8e8e8e 30%,#6c6c6c 60%,#575757 100%)"></div>
<div class="a" style="left:796.1px;top:937px;width:143.5px;height:45.5px;border-radius:6px;background:#c000c0;box-shadow:inset 0 1.5px 1px rgba(0,0,0,.35)"></div>
<div class="t" style="left:868.2px;top:990.13px;font-size:13.2px;color:#2a2a2a;font-weight:700;transform:translateX(-50%);transform-origin:50% 0;">Magenta</div>
<div class="a" style="left:948.5px;top:931px;width:155.5px;height:75px;border-radius:6px;background:linear-gradient(#aaaaaa 0,#8e8e8e 30%,#6c6c6c 60%,#575757 100%)"></div>
<div class="a" style="left:954.1px;top:937px;width:143.5px;height:45.5px;border-radius:6px;background:#c0c000;box-shadow:inset 0 1.5px 1px rgba(0,0,0,.35)"></div>
<div class="t" style="left:1026.2px;top:990.13px;font-size:13.2px;color:#2a2a2a;font-weight:700;transform:translateX(-50%);transform-origin:50% 0;">Yellow</div>
<div class="a" style="left:1107px;top:931px;width:155.5px;height:75px;border-radius:6px;background:linear-gradient(#1c1c1c,#303030)"></div>
<div class="a" style="left:1113.5px;top:937px;width:143px;height:45px;border-radius:6px;background:#fff;box-shadow:inset 1px 1px 1px rgba(0,0,0,.25)"></div>
<div class="t" style="left:1185px;top:990.13px;font-size:13.2px;color:#ffffff;font-weight:700;transform:translateX(-50%);transform-origin:50% 0;">100W</div>
<div class="a" style="left:1266.5px;top:930.5px;width:60px;height:23px;border-radius:6px 6px 0 0;background:linear-gradient(#b0b0b0,#909090)"></div>
<div class="a" style="left:1266.5px;top:953.5px;width:60px;height:1.5px;background:#3a3a3a"></div>
<div class="a" style="left:1266.5px;top:955px;width:60px;height:55px;border-radius:0 0 6px 6px;background:linear-gradient(#a0a0a0,#7a7a7a 60%,#6a6a6a)"></div>
<div class="a" style="left:1287.7px;top:932.6px;width:18px;height:18px;border-radius:50%;background:linear-gradient(#6e6e6e,#9a9a9a)"></div>
<svg style="left:1290px;top:937px" width="14" height="8"><path d="M1 7H13L7 1Z" fill="#333"/></svg>
<div class="a" style="left:1276.5px;top:961px;width:39px;height:38px;border:3px solid #1a1a1a;border-radius:6px;background:linear-gradient(#bdbdbd 0,#b0b0b0 50%,#9c9c9c 50%,#a6a6a6 100%)"></div>
<div class="a" style="left:1288px;top:972px;width:17px;height:17px;background:#080808"></div>
<div class="a" style="left:1327px;top:930px;width:57.5px;height:38px;background:linear-gradient(#b4b4b4,#8c8c8c 50%,#6e6e6e)"></div>
<div class="a" style="left:1385.5px;top:930px;width:55.5px;height:38px;background:linear-gradient(#b4b4b4,#8c8c8c 50%,#6e6e6e)"></div>
<div class="a" style="left:1442px;top:930px;width:55px;height:38px;background:linear-gradient(#8a8a8a,#6a6a6a 50%,#5a5a5a)"></div>
<div class="a" style="left:1499px;top:930px;width:55px;height:38px;background:linear-gradient(#b4b4b4,#8c8c8c 50%,#6e6e6e)"></div>
<div class="a" style="left:1555px;top:930px;width:55px;height:38px;background:linear-gradient(#b4b4b4,#8c8c8c 50%,#6e6e6e)"></div>
<div class="a" style="left:1384.5px;top:930px;width:1.2px;height:38px;background:#2a2a2a"></div>
<div class="a" style="left:1441px;top:930px;width:1.2px;height:38px;background:#2a2a2a"></div>
<div class="a" style="left:1497px;top:930px;width:2px;height:77px;background:#2a2a2a"></div>
<div class="a" style="left:1554px;top:930px;width:1.2px;height:38px;background:#2a2a2a"></div>
<div class="a" style="left:1327px;top:968px;width:283px;height:1.5px;background:#2a2a2a"></div>
<div class="a" style="left:1344px;top:936.8px;width:24px;height:24px;border-radius:50%;background:linear-gradient(#6e6e6e,#9a9a9a)"></div>
<div class="a" style="left:1401.5px;top:936.8px;width:24px;height:24px;border-radius:50%;background:linear-gradient(#6e6e6e,#9a9a9a)"></div>
<div class="a" style="left:1457.5px;top:936.8px;width:24px;height:24px;border-radius:50%;background:linear-gradient(#5a5a5a,#787878)"></div>
<div class="a" style="left:1514px;top:936.8px;width:24px;height:24px;border-radius:50%;background:linear-gradient(#6e6e6e,#9a9a9a)"></div>
<div class="a" style="left:1569.5px;top:936.8px;width:24px;height:24px;border-radius:50%;background:linear-gradient(#6e6e6e,#9a9a9a)"></div>
<div class="a" style="left:1351px;top:943.5px;width:10px;height:10.5px;background:#2e2e2e"></div>
<svg style="left:1408px;top:942px" width="14" height="14"><path d="M1.5 1V13L12 7Z" fill="#2e2e2e"/></svg>
<svg style="left:1459px;top:940px" width="22" height="18"><g fill="none" stroke="#2e2e2e" stroke-width="2.4"><path d="M7 2.5H4.5V15H7M14 2.5H16.5V15H14"/></g><g fill="#2e2e2e"><circle cx="9.3" cy="8.7" r="1.1"/><circle cx="11.8" cy="8.7" r="1.1"/></g></svg>
<svg style="left:1515px;top:942px" width="22" height="14"><path d="M11 7C8.5 3.5 4 2.5 3 6.5C2.5 9.5 6 11 11 7C16 3 19.5 4.5 19 7.5C18 11.5 13.5 10.5 11 7Z" fill="none" stroke="#2e2e2e" stroke-width="2.6"/></svg>
<svg style="left:1572px;top:939px" width="20" height="20"><g fill="none" stroke="#2e2e2e" stroke-width="2.4"><path d="M4.5 8.5A5.8 5.8 0 0 1 14.5 5.5"/><path d="M15.5 11.5A5.8 5.8 0 0 1 5.5 14.5"/></g><path d="M12 3L17.5 2.5L16.5 8.5Z M8 17L2.5 17.5L3.5 11.5Z" fill="#2e2e2e"/></svg>
<div class="a" style="left:1327px;top:969.5px;width:170px;height:38px;background:linear-gradient(#b8b8b8,#9a9a9a 50%,#7c7c7c)"></div>
<div class="a" style="left:1499px;top:969.5px;width:163px;height:38px;background:linear-gradient(#b8b8b8,#9a9a9a 50%,#7c7c7c)"></div>
<div class="a" style="left:1354.4px;top:975.6px;width:24px;height:24px;border-radius:50%;background:linear-gradient(#6e6e6e,#9a9a9a)"></div>
<div class="a" style="left:1620.6px;top:975.6px;width:24px;height:24px;border-radius:50%;background:linear-gradient(#6e6e6e,#9a9a9a)"></div>
<svg style="left:1358px;top:981px" width="16" height="14"><g fill="none" stroke="#333" stroke-width="2.2"><path d="M7 2L2.5 7L7 12M12.5 2L8 7L12.5 12"/></g></svg>
<svg style="left:1625px;top:981px" width="16" height="14"><g fill="none" stroke="#333" stroke-width="2.2"><path d="M3 2L7.5 7L3 12M8.5 2L13 7L8.5 12"/></g></svg>
<div class="t" style="left:1400px;top:974.5px;font-size:28px;color:#333;font-weight:700;transform: scaleX(0.94);transform-origin:0 0;">Back</div>
<div class="t" style="left:1533.4px;top:974.5px;font-size:28px;color:#333;font-weight:700;transform: scaleX(1.05);transform-origin:0 0;">Next</div>
<svg style="left:1620px;top:929px" width="36" height="38"><g transform="translate(17.5,19)"><g fill="#000" opacity=".45" transform="translate(1.5,1.5)"><rect x="-3.3" y="-17" width="6.6" height="34" rx="1"/><rect x="-3.3" y="-17" width="6.6" height="34" rx="1" transform="rotate(60)"/><rect x="-3.3" y="-17" width="6.6" height="34" rx="1" transform="rotate(-60)"/></g><g fill="#e81010"><rect x="-3.3" y="-17" width="6.6" height="34" rx="1"/><rect x="-3.3" y="-17" width="6.6" height="34" rx="1" transform="rotate(60)"/><rect x="-3.3" y="-17" width="6.6" height="34" rx="1" transform="rotate(-60)"/></g></g></svg>
<svg style="left:0;top:0" width="1669" height="1007" font-family="Liberation Sans"><rect x="20.5" y="231" width="335.5" height="371" fill="#232323"/><line x1="64.6" y1="231" x2="64.6" y2="607" stroke="#9c9c9c" stroke-width="1.5"/><line x1="109.3" y1="231" x2="109.3" y2="607" stroke="#9c9c9c" stroke-width="1.5"/><line x1="154" y1="231" x2="154" y2="607" stroke="#9c9c9c" stroke-width="1.5"/><line x1="198.7" y1="231" x2="198.7" y2="607" stroke="#9c9c9c" stroke-width="1.5"/><line x1="243.4" y1="231" x2="243.4" y2="607" stroke="#9c9c9c" stroke-width="1.5"/><line x1="288.1" y1="231" x2="288.1" y2="607" stroke="#9c9c9c" stroke-width="1.5"/><line x1="332.8" y1="231" x2="332.8" y2="607" stroke="#9c9c9c" stroke-width="1.5"/><line x1="20.5" y1="602" x2="20.5" y2="607" stroke="#9c9c9c" stroke-width="1.5"/><rect x="20.5" y="231" width="335.5" height="371" fill="none" stroke="#9c9c9c" stroke-width="1.5"/><text x="19.9" y="626" font-size="15" fill="#dcdcdc" text-anchor="middle" font-weight="400">0</text><text x="64.6" y="626" font-size="15" fill="#dcdcdc" text-anchor="middle" font-weight="400">2</text><text x="109.3" y="626" font-size="15" fill="#dcdcdc" text-anchor="middle" font-weight="400">4</text><text x="154" y="626" font-size="15" fill="#dcdcdc" text-anchor="middle" font-weight="400">6</text><text x="198.7" y="626" font-size="15" fill="#dcdcdc" text-anchor="middle" font-weight="400">8</text><text x="243.4" y="626" font-size="15" fill="#dcdcdc" text-anchor="middle" font-weight="400">10</text><text x="288.1" y="626" font-size="15" fill="#dcdcdc" text-anchor="middle" font-weight="400">12</text><text x="332.8" y="626" font-size="15" fill="#dcdcdc" text-anchor="middle" font-weight="400">14</text><text x="188" y="225.5" font-size="14.4" fill="#d4d4d4" text-anchor="middle" font-weight="400">DeltaE 2000</text><defs><linearGradient id="bg0"><stop offset="0" stop-color="#fff"/><stop offset="0.44" stop-color="#fff"/><stop offset="0.7" stop-color="#dadada"/><stop offset="0.84" stop-color="#b6b6b6"/><stop offset="1" stop-color="#787878"/></linearGradient><linearGradient id="bg1"><stop offset="0" stop-color="#d8d820"/><stop offset="0.22" stop-color="#c4c400"/><stop offset="0.55" stop-color="#c4c400"/><stop offset="1" stop-color="#7a7a00"/></linearGradient><linearGradient id="bg2"><stop offset="0" stop-color="#e050e0"/><stop offset="0.22" stop-color="#c000c0"/><stop offset="0.55" stop-color="#c000c0"/><stop offset="1" stop-color="#800080"/></linearGradient><linearGradient id="bg3"><stop offset="0" stop-color="#40d8d8"/><stop offset="0.22" stop-color="#00c0c0"/><stop offset="0.55" stop-color="#00c0c0"/><stop offset="1" stop-color="#007c7c"/></linearGradient><linearGradient id="bg4"><stop offset="0" stop-color="#3030e0"/><stop offset="0.22" stop-color="#0000c0"/><stop offset="0.55" stop-color="#0000c0"/><stop offset="1" stop-color="#000080"/></linearGradient><linearGradient id="bg5"><stop offset="0" stop-color="#40d040"/><stop offset="0.22" stop-color="#00c000"/><stop offset="0.55" stop-color="#00c000"/><stop offset="1" stop-color="#007000"/></linearGradient><linearGradient id="bg6"><stop offset="0" stop-color="#e06060"/><stop offset="0.22" stop-color="#c00000"/><stop offset="0.55" stop-color="#c00000"/><stop offset="1" stop-color="#600000"/></linearGradient><linearGradient id="bg7"><stop offset="0" stop-color="#dcdcdc"/><stop offset="0.22" stop-color="#c0c0c0"/><stop offset="0.55" stop-color="#c0c0c0"/><stop offset="1" stop-color="#6c6c6c"/></linearGradient></defs><rect x="21.9" y="233.9" width="150.9" height="36" fill="#000"/><rect x="21.9" y="235.3" width="149.3" height="33.2" fill="url(#bg0)"/><rect x="21.9" y="280.6" width="36.2" height="36" fill="#000"/><rect x="21.9" y="282" width="34.6" height="33.2" fill="url(#bg1)"/><rect x="21.9" y="327.3" width="121.7" height="36" fill="#000"/><rect x="21.9" y="328.7" width="120.1" height="33.2" fill="url(#bg2)"/><rect x="21.9" y="374" width="140.9" height="36" fill="#000"/><rect x="21.9" y="375.4" width="139.3" height="33.2" fill="url(#bg3)"/><rect x="21.9" y="420.7" width="30.8" height="36" fill="#000"/><rect x="21.9" y="422.1" width="29.2" height="33.2" fill="url(#bg4)"/><rect x="21.9" y="467.4" width="109.4" height="36" fill="#000"/><rect x="21.9" y="468.8" width="107.8" height="33.2" fill="url(#bg5)"/><rect x="21.9" y="514.1" width="203.8" height="36" fill="#000"/><rect x="21.9" y="515.5" width="202.2" height="33.2" fill="url(#bg6)"/><rect x="21.9" y="560.8" width="146.6" height="36" fill="#000"/><rect x="21.9" y="562.2" width="145" height="33.2" fill="url(#bg7)"/><rect x="408.5" y="122.7" width="145" height="316.9" fill="#232323"/><line x1="408.5" y1="175.8" x2="553.5" y2="175.8" stroke="#9c9c9c" stroke-width="1.5"/><line x1="408.5" y1="228.55" x2="553.5" y2="228.55" stroke="#9c9c9c" stroke-width="1.5"/><line x1="408.5" y1="281.3" x2="553.5" y2="281.3" stroke="#9c9c9c" stroke-width="1.5"/><line x1="408.5" y1="334.05" x2="553.5" y2="334.05" stroke="#9c9c9c" stroke-width="1.5"/><line x1="408.5" y1="386.8" x2="553.5" y2="386.8" stroke="#9c9c9c" stroke-width="1.5"/><line x1="403.5" y1="123.05" x2="408.5" y2="123.05" stroke="#c8c8c8" stroke-width="1.5"/><text x="402.5" y="128.05" font-size="14.2" fill="#dcdcdc" text-anchor="end" font-weight="400">15</text><line x1="403.5" y1="175.8" x2="408.5" y2="175.8" stroke="#c8c8c8" stroke-width="1.5"/><text x="402.5" y="180.8" font-size="14.2" fill="#dcdcdc" text-anchor="end" font-weight="400">10</text><line x1="403.5" y1="228.55" x2="408.5" y2="228.55" stroke="#c8c8c8" stroke-width="1.5"/><text x="402.5" y="233.55" font-size="14.2" fill="#dcdcdc" text-anchor="end" font-weight="400">5</text><line x1="403.5" y1="281.3" x2="408.5" y2="281.3" stroke="#c8c8c8" stroke-width="1.5"/><text x="402.5" y="286.3" font-size="14.2" fill="#dcdcdc" text-anchor="end" font-weight="400">0</text><line x1="403.5" y1="334.05" x2="408.5" y2="334.05" stroke="#c8c8c8" stroke-width="1.5"/><text x="402.5" y="339.05" font-size="14.2" fill="#dcdcdc" text-anchor="end" font-weight="400">-5</text><line x1="403.5" y1="386.8" x2="408.5" y2="386.8" stroke="#c8c8c8" stroke-width="1.5"/><text x="402.5" y="391.8" font-size="14.2" fill="#dcdcdc" text-anchor="end" font-weight="400">-10</text><line x1="403.5" y1="439.55" x2="408.5" y2="439.55" stroke="#c8c8c8" stroke-width="1.5"/><text x="402.5" y="444.55" font-size="14.2" fill="#dcdcdc" text-anchor="end" font-weight="400">-15</text><rect x="408.5" y="122.7" width="145" height="316.9" fill="none" stroke="#9c9c9c" stroke-width="1.5"/><line x1="408.5" y1="439.6" x2="408.5" y2="444.6" stroke="#9c9c9c" stroke-width="1.5"/><line x1="553.5" y1="439.6" x2="553.5" y2="444.6" stroke="#9c9c9c" stroke-width="1.5"/><text x="467.5" y="117" font-size="14.2" fill="#d4d4d4" text-anchor="middle" font-weight="400">Delta L</text><text x="481" y="455" font-size="14.5" fill="#dcdcdc" text-anchor="middle" font-weight="400">100W</text><line x1="423.5" y1="281.3" x2="539" y2="281.3" stroke="#1c1c1c" stroke-width="2"/><rect x="605.8" y="122.7" width="145" height="316.9" fill="#232323"/><line x1="605.8" y1="175.8" x2="750.8" y2="175.8" stroke="#9c9c9c" stroke-width="1.5"/><line x1="605.8" y1="228.55" x2="750.8" y2="228.55" stroke="#9c9c9c" stroke-width="1.5"/><line x1="605.8" y1="281.3" x2="750.8" y2="281.3" stroke="#9c9c9c" stroke-width="1.5"/><line x1="605.8" y1="334.05" x2="750.8" y2="334.05" stroke="#9c9c9c" stroke-width="1.5"/><line x1="605.8" y1="386.8" x2="750.8" y2="386.8" stroke="#9c9c9c" stroke-width="1.5"/><line x1="600.8" y1="123.05" x2="605.8" y2="123.05" stroke="#c8c8c8" stroke-width="1.5"/><text x="599.8" y="128.05" font-size="14.2" fill="#dcdcdc" text-anchor="end" font-weight="400">15</text><line x1="600.8" y1="175.8" x2="605.8" y2="175.8" stroke="#c8c8c8" stroke-width="1.5"/><text x="599.8" y="180.8" font-size="14.2" fill="#dcdcdc" text-anchor="end" font-weight="400">10</text><line x1="600.8" y1="228.55" x2="605.8" y2="228.55" stroke="#c8c8c8" stroke-width="1.5"/><text x="599.8" y="233.55" font-size="14.2" fill="#dcdcdc" text-anchor="end" font-weight="400">5</text><line x1="600.8" y1="281.3" x2="605.8" y2="281.3" stroke="#c8c8c8" stroke-width="1.5"/><text x="599.8" y="286.3" font-size="14.2" fill="#dcdcdc" text-anchor="end" font-weight="400">0</text><line x1="600.8" y1="334.05" x2="605.8" y2="334.05" stroke="#c8c8c8" stroke-width="1.5"/><text x="599.8" y="339.05" font-size="14.2" fill="#dcdcdc" text-anchor="end" font-weight="400">-5</text><line x1="600.8" y1="386.8" x2="605.8" y2="386.8" stroke="#c8c8c8" stroke-width="1.5"/><text x="599.8" y="391.8" font-size="14.2" fill="#dcdcdc" text-anchor="end" font-weight="400">-10</text><line x1="600.8" y1="439.55" x2="605.8" y2="439.55" stroke="#c8c8c8" stroke-width="1.5"/><text x="599.8" y="444.55" font-size="14.2" fill="#dcdcdc" text-anchor="end" font-weight="400">-15</text><rect x="605.8" y="122.7" width="145" height="316.9" fill="none" stroke="#9c9c9c" stroke-width="1.5"/><line x1="605.8" y1="439.6" x2="605.8" y2="444.6" stroke="#9c9c9c" stroke-width="1.5"/><line x1="750.8" y1="439.6" x2="750.8" y2="444.6" stroke="#9c9c9c" stroke-width="1.5"/><text x="664.8" y="117" font-size="14.2" fill="#d4d4d4" text-anchor="middle" font-weight="400">Delta C</text><text x="678.3" y="455" font-size="14.5" fill="#dcdcdc" text-anchor="middle" font-weight="400">100W</text><defs><linearGradient id="dcg" x1="0" y1="0" x2="0" y2="1"><stop offset="0" stop-color="#fff"/><stop offset="0.45" stop-color="#fff"/><stop offset="1" stop-color="#8a8a8a"/></linearGradient></defs><rect x="622" y="220.2" width="113" height="60.1" fill="url(#dcg)" stroke="#000" stroke-width="2"/><rect x="803.2" y="122.7" width="145" height="316.9" fill="#232323"/><line x1="803.2" y1="175.8" x2="948.2" y2="175.8" stroke="#9c9c9c" stroke-width="1.5"/><line x1="803.2" y1="228.55" x2="948.2" y2="228.55" stroke="#9c9c9c" stroke-width="1.5"/><line x1="803.2" y1="281.3" x2="948.2" y2="281.3" stroke="#9c9c9c" stroke-width="1.5"/><line x1="803.2" y1="334.05" x2="948.2" y2="334.05" stroke="#9c9c9c" stroke-width="1.5"/><line x1="803.2" y1="386.8" x2="948.2" y2="386.8" stroke="#9c9c9c" stroke-width="1.5"/><line x1="798.2" y1="123.05" x2="803.2" y2="123.05" stroke="#c8c8c8" stroke-width="1.5"/><text x="797.2" y="128.05" font-size="14.2" fill="#dcdcdc" text-anchor="end" font-weight="400">15</text><line x1="798.2" y1="175.8" x2="803.2" y2="175.8" stroke="#c8c8c8" stroke-width="1.5"/><text x="797.2" y="180.8" font-size="14.2" fill="#dcdcdc" text-anchor="end" font-weight="400">10</text><line x1="798.2" y1="228.55" x2="803.2" y2="228.55" stroke="#c8c8c8" stroke-width="1.5"/><text x="797.2" y="233.55" font-size="14.2" fill="#dcdcdc" text-anchor="end" font-weight="400">5</text><line x1="798.2" y1="281.3" x2="803.2" y2="281.3" stroke="#c8c8c8" stroke-width="1.5"/><text x="797.2" y="286.3" font-size="14.2" fill="#dcdcdc" text-anchor="end" font-weight="400">0</text><line x1="798.2" y1="334.05" x2="803.2" y2="334.05" stroke="#c8c8c8" stroke-width="1.5"/><text x="797.2" y="339.05" font-size="14.2" fill="#dcdcdc" text-anchor="end" font-weight="400">-5</text><line x1="798.2" y1="386.8" x2="803.2" y2="386.8" stroke="#c8c8c8" stroke-width="1.5"/><text x="797.2" y="391.8" font-size="14.2" fill="#dcdcdc" text-anchor="end" font-weight="400">-10</text><line x1="798.2" y1="439.55" x2="803.2" y2="439.55" stroke="#c8c8c8" stroke-width="1.5"/><text x="797.2" y="444.55" font-size="14.2" fill="#dcdcdc" text-anchor="end" font-weight="400">-15</text><rect x="803.2" y="122.7" width="145" height="316.9" fill="none" stroke="#9c9c9c" stroke-width="1.5"/><line x1="803.2" y1="439.6" x2="803.2" y2="444.6" stroke="#9c9c9c" stroke-width="1.5"/><line x1="948.2" y1="439.6" x2="948.2" y2="444.6" stroke="#9c9c9c" stroke-width="1.5"/><text x="862.2" y="117" font-size="14.2" fill="#d4d4d4" text-anchor="middle" font-weight="400">Delta H</text><text x="875.7" y="455" font-size="14.5" fill="#dcdcdc" text-anchor="middle" font-weight="400">100W</text><line x1="818.2" y1="281.3" x2="933.7" y2="281.3" stroke="#1c1c1c" stroke-width="2"/><rect x="376" y="471" width="592" height="163" fill="#000"/><rect x="393" y="479" width="62" height="66" fill="#c0c4b8"/><rect x="393" y="545" width="62" height="66" fill="#c0c0c0"/><rect x="393.5" y="479.5" width="61" height="131" fill="none" stroke="#fff" stroke-width="1.2"/><text x="424" y="626" font-size="13.6" fill="#f4f4f4" text-anchor="middle" font-weight="400">White</text><rect x="465.3" y="479" width="62" height="66" fill="#d43a00"/><rect x="465.3" y="545" width="62" height="66" fill="#bc1a1a"/><rect x="465.8" y="479.5" width="61" height="131" fill="none" stroke="#fff" stroke-width="1.2"/><text x="496.3" y="626" font-size="13.6" fill="#f4f4f4" text-anchor="middle" font-weight="400">Red</text><rect x="537.6" y="479" width="62" height="66" fill="#58c400"/><rect x="537.6" y="545" width="62" height="66" fill="#1ebe28"/><rect x="538.1" y="479.5" width="61" height="131" fill="none" stroke="#fff" stroke-width="1.2"/><text x="568.6" y="626" font-size="13.6" fill="#f4f4f4" text-anchor="middle" font-weight="400">Green</text><rect x="609.9" y="479" width="62" height="66" fill="#2200b8"/><rect x="609.9" y="545" width="62" height="66" fill="#0a0ac0"/><rect x="610.4" y="479.5" width="61" height="131" fill="none" stroke="#fff" stroke-width="1.2"/><text x="640.9" y="626" font-size="13.6" fill="#f4f4f4" text-anchor="middle" font-weight="400">Blue</text><rect x="682.2" y="479" width="62" height="66" fill="#60c8b8"/><rect x="682.2" y="545" width="62" height="66" fill="#00c0c0"/><rect x="682.7" y="479.5" width="61" height="131" fill="none" stroke="#fff" stroke-width="1.2"/><text x="713.2" y="626" font-size="13.6" fill="#f4f4f4" text-anchor="middle" font-weight="400">Cyan</text><rect x="754.5" y="479" width="62" height="66" fill="#d02ab4"/><rect x="754.5" y="545" width="62" height="66" fill="#c000c0"/><rect x="755" y="479.5" width="61" height="131" fill="none" stroke="#fff" stroke-width="1.2"/><text x="785.5" y="626" font-size="13.6" fill="#f4f4f4" text-anchor="middle" font-weight="400">Magenta</text><rect x="826.8" y="479" width="62" height="66" fill="#c4c000"/><rect x="826.8" y="545" width="62" height="66" fill="#c2c030"/><rect x="827.3" y="479.5" width="61" height="131" fill="none" stroke="#fff" stroke-width="1.2"/><text x="857.8" y="626" font-size="13.6" fill="#f4f4f4" text-anchor="middle" font-weight="400">Yellow</text><rect x="899.1" y="479" width="62" height="66" fill="#f8fff6"/><rect x="899.1" y="545" width="62" height="66" fill="#fafafa"/><rect x="899.6" y="479.5" width="61" height="131" fill="none" stroke="#c8c8c8" stroke-width="1.2"/><text x="930.1" y="626" font-size="13.6" fill="#f4f4f4" text-anchor="middle" font-weight="400">100W</text><text x="0" y="0" font-size="13" fill="#f0f0f0" text-anchor="middle" font-weight="400" transform="translate(389,507.5) rotate(-90)">Actual</text><text x="0" y="0" font-size="13" fill="#f0f0f0" text-anchor="middle" font-weight="400" transform="translate(389,582.5) rotate(-90)">Target</text><rect x="357.5" y="687" width="249.5" height="180" fill="#232323"/><line x1="357.5" y1="706.1" x2="607" y2="706.1" stroke="#9c9c9c" stroke-width="1.5"/><line x1="352.5" y1="706.1" x2="357.5" y2="706.1" stroke="#c8c8c8" stroke-width="1.5"/><text x="351.5" y="711.1" font-size="14.6" fill="#dcdcdc" text-anchor="end" font-weight="400">104</text><line x1="357.5" y1="742.2" x2="607" y2="742.2" stroke="#9c9c9c" stroke-width="1.5"/><line x1="352.5" y1="742.2" x2="357.5" y2="742.2" stroke="#c8c8c8" stroke-width="1.5"/><text x="351.5" y="747.2" font-size="14.6" fill="#dcdcdc" text-anchor="end" font-weight="400">102</text><line x1="357.5" y1="778.3" x2="607" y2="778.3" stroke="#9c9c9c" stroke-width="1.5"/><line x1="352.5" y1="778.3" x2="357.5" y2="778.3" stroke="#c8c8c8" stroke-width="1.5"/><text x="351.5" y="783.3" font-size="14.6" fill="#dcdcdc" text-anchor="end" font-weight="400">100</text><line x1="357.5" y1="814.4" x2="607" y2="814.4" stroke="#9c9c9c" stroke-width="1.5"/><line x1="352.5" y1="814.4" x2="357.5" y2="814.4" stroke="#c8c8c8" stroke-width="1.5"/><text x="351.5" y="819.4" font-size="14.6" fill="#dcdcdc" text-anchor="end" font-weight="400">98</text><line x1="357.5" y1="850.5" x2="607" y2="850.5" stroke="#9c9c9c" stroke-width="1.5"/><line x1="352.5" y1="850.5" x2="357.5" y2="850.5" stroke="#c8c8c8" stroke-width="1.5"/><text x="351.5" y="855.5" font-size="14.6" fill="#dcdcdc" text-anchor="end" font-weight="400">96</text><defs><linearGradient id="rg" x1="0" y1="0" x2="0" y2="1"><stop offset="0" stop-color="#ff5454"/><stop offset="1" stop-color="#ff4646"/></linearGradient><linearGradient id="gg" x1="0" y1="0" x2="0" y2="1"><stop offset="0" stop-color="#5aae5a"/><stop offset="1" stop-color="#3a9a3a"/></linearGradient><linearGradient id="bbg" x1="0" y1="0" x2="0" y2="1"><stop offset="0" stop-color="#5858ff"/><stop offset="1" stop-color="#4c4cff"/></linearGradient></defs><rect x="382.5" y="824.5" width="64.8" height="44.5" fill="url(#rg)" stroke="#000" stroke-width="2"/><rect x="448.5" y="760" width="65.7" height="109" fill="url(#gg)" stroke="#000" stroke-width="2"/><rect x="515.5" y="818" width="64.9" height="51" fill="url(#bbg)" stroke="#000" stroke-width="2"/><rect x="356.5" y="867.75" width="251.5" height="4" fill="#333"/><rect x="357.5" y="687" width="249.5" height="180" fill="none" stroke="#9c9c9c" stroke-width="1.5"/><line x1="357.5" y1="867" x2="357.5" y2="872" stroke="#9c9c9c" stroke-width="1.5"/><line x1="607" y1="867" x2="607" y2="872" stroke="#9c9c9c" stroke-width="1.5"/><text x="467" y="682" font-size="13.8" fill="#d4d4d4" text-anchor="middle" font-weight="400">RGB Balance</text><text x="482" y="884.5" font-size="14.5" fill="#dcdcdc" text-anchor="middle" font-weight="400">100W</text><rect x="1018.5" y="120" width="640" height="492" fill="none" stroke="#9c9c9c" stroke-width="1.5"/><text x="1322" y="114.5" font-size="14.4" fill="#d4d4d4" text-anchor="middle" font-weight="400">CIE 1976 u'v'</text><line x1="1018.9" y1="612" x2="1018.9" y2="618" stroke="#c8c8c8" stroke-width="1.5"/><text x="1018.9" y="634" font-size="14.3" fill="#d8d8d8" text-anchor="middle" font-weight="400">0</text><line x1="1072.03" y1="612" x2="1072.03" y2="618" stroke="#c8c8c8" stroke-width="1.5"/><text x="1072.03" y="634" font-size="14.3" fill="#d8d8d8" text-anchor="middle" font-weight="400">0,05</text><line x1="1125.16" y1="612" x2="1125.16" y2="618" stroke="#c8c8c8" stroke-width="1.5"/><text x="1125.16" y="634" font-size="14.3" fill="#d8d8d8" text-anchor="middle" font-weight="400">0,1</text><line x1="1178.29" y1="612" x2="1178.29" y2="618" stroke="#c8c8c8" stroke-width="1.5"/><text x="1178.29" y="634" font-size="14.3" fill="#d8d8d8" text-anchor="middle" font-weight="400">0,15</text><line x1="1231.42" y1="612" x2="1231.42" y2="618" stroke="#c8c8c8" stroke-width="1.5"/><text x="1231.42" y="634" font-size="14.3" fill="#d8d8d8" text-anchor="middle" font-weight="400">0,2</text><line x1="1284.55" y1="612" x2="1284.55" y2="618" stroke="#c8c8c8" stroke-width="1.5"/><text x="1284.55" y="634" font-size="14.3" fill="#d8d8d8" text-anchor="middle" font-weight="400">0,25</text><line x1="1337.68" y1="612" x2="1337.68" y2="618" stroke="#c8c8c8" stroke-width="1.5"/><text x="1337.68" y="634" font-size="14.3" fill="#d8d8d8" text-anchor="middle" font-weight="400">0,3</text><line x1="1390.81" y1="612" x2="1390.81" y2="618" stroke="#c8c8c8" stroke-width="1.5"/><text x="1390.81" y="634" font-size="14.3" fill="#d8d8d8" text-anchor="middle" font-weight="400">0,35</text><line x1="1443.94" y1="612" x2="1443.94" y2="618" stroke="#c8c8c8" stroke-width="1.5"/><text x="1443.94" y="634" font-size="14.3" fill="#d8d8d8" text-anchor="middle" font-weight="400">0,4</text><line x1="1497.07" y1="612" x2="1497.07" y2="618" stroke="#c8c8c8" stroke-width="1.5"/><text x="1497.07" y="634" font-size="14.3" fill="#d8d8d8" text-anchor="middle" font-weight="400">0,45</text><line x1="1550.2" y1="612" x2="1550.2" y2="618" stroke="#c8c8c8" stroke-width="1.5"/><text x="1550.2" y="634" font-size="14.3" fill="#d8d8d8" text-anchor="middle" font-weight="400">0,5</text><line x1="1603.33" y1="612" x2="1603.33" y2="618" stroke="#c8c8c8" stroke-width="1.5"/><text x="1603.33" y="634" font-size="14.3" fill="#d8d8d8" text-anchor="middle" font-weight="400">0,55</text><line x1="1014" y1="612.3" x2="1019" y2="612.3" stroke="#c8c8c8" stroke-width="1.5"/><text x="1013" y="617.3" font-size="14.3" fill="#d8d8d8" text-anchor="end" font-weight="400">0</text><line x1="1014" y1="571.445" x2="1019" y2="571.445" stroke="#c8c8c8" stroke-width="1.5"/><text x="1013" y="576.445" font-size="14.3" fill="#d8d8d8" text-anchor="end" font-weight="400">0,05</text><line x1="1014" y1="530.59" x2="1019" y2="530.59" stroke="#c8c8c8" stroke-width="1.5"/><text x="1013" y="535.59" font-size="14.3" fill="#d8d8d8" text-anchor="end" font-weight="400">0,1</text><line x1="1014" y1="489.735" x2="1019" y2="489.735" stroke="#c8c8c8" stroke-width="1.5"/><text x="1013" y="494.735" font-size="14.3" fill="#d8d8d8" text-anchor="end" font-weight="400">0,15</text><line x1="1014" y1="448.88" x2="1019" y2="448.88" stroke="#c8c8c8" stroke-width="1.5"/><text x="1013" y="453.88" font-size="14.3" fill="#d8d8d8" text-anchor="end" font-weight="400">0,2</text><line x1="1014" y1="408.025" x2="1019" y2="408.025" stroke="#c8c8c8" stroke-width="1.5"/><text x="1013" y="413.025" font-size="14.3" fill="#d8d8d8" text-anchor="end" font-weight="400">0,25</text><line x1="1014" y1="367.17" x2="1019" y2="367.17" stroke="#c8c8c8" stroke-width="1.5"/><text x="1013" y="372.17" font-size="14.3" fill="#d8d8d8" text-anchor="end" font-weight="400">0,3</text><line x1="1014" y1="326.315" x2="1019" y2="326.315" stroke="#c8c8c8" stroke-width="1.5"/><text x="1013" y="331.315" font-size="14.3" fill="#d8d8d8" text-anchor="end" font-weight="400">0,35</text><line x1="1014" y1="285.46" x2="1019" y2="285.46" stroke="#c8c8c8" stroke-width="1.5"/><text x="1013" y="290.46" font-size="14.3" fill="#d8d8d8" text-anchor="end" font-weight="400">0,4</text><line x1="1014" y1="244.605" x2="1019" y2="244.605" stroke="#c8c8c8" stroke-width="1.5"/><text x="1013" y="249.605" font-size="14.3" fill="#d8d8d8" text-anchor="end" font-weight="400">0,45</text><line x1="1014" y1="203.75" x2="1019" y2="203.75" stroke="#c8c8c8" stroke-width="1.5"/><text x="1013" y="208.75" font-size="14.3" fill="#d8d8d8" text-anchor="end" font-weight="400">0,5</text><line x1="1014" y1="162.895" x2="1019" y2="162.895" stroke="#c8c8c8" stroke-width="1.5"/><text x="1013" y="167.895" font-size="14.3" fill="#d8d8d8" text-anchor="end" font-weight="400">0,55</text><rect x="1490.96" y="176.745" width="14" height="14" fill="none" stroke="#ececec" stroke-width="1.8"/><rect x="1144.55" y="144.312" width="14" height="14" fill="none" stroke="#ececec" stroke-width="1.8"/><rect x="1198.16" y="475.68" width="14" height="14" fill="none" stroke="#ececec" stroke-width="1.8"/><rect x="1158.8" y="231.945" width="14" height="14" fill="none" stroke="#ececec" stroke-width="1.8"/><rect x="1336" y="334.976" width="14" height="14" fill="none" stroke="#ececec" stroke-width="1.8"/><rect x="1228.47" y="152.175" width="14" height="14" fill="none" stroke="#ececec" stroke-width="1.8"/><rect x="1221.98" y="221.462" width="14" height="14" fill="none" stroke="#000" stroke-width="1.8"/><circle cx="1462.23" cy="176.506" r="4.4" fill="#c00000" stroke="#000" stroke-width="1.2"/><circle cx="1167.75" cy="149.8" r="4.4" fill="#00a000" stroke="#000" stroke-width="1.2"/><circle cx="1212.32" cy="481.763" r="4.4" fill="#1800a8" stroke="#000" stroke-width="1.2"/><circle cx="1178.01" cy="226.698" r="4.4" fill="#30b4b4" stroke="#000" stroke-width="1.2"/><circle cx="1353.29" cy="310.041" r="4.4" fill="#b020b0" stroke="#000" stroke-width="1.2"/><circle cx="1234.37" cy="155.707" r="4.4" fill="#bcbc00" stroke="#000" stroke-width="1.2"/><circle cx="1225.07" cy="222.943" r="4.4" fill="#ffffff" stroke="#000" stroke-width="1.2"/><rect x="637" y="678" width="342" height="199" fill="none" stroke="#a8a8a8" stroke-width="2"/><text x="807.5" y="673.5" font-size="13.8" fill="#d4d4d4" text-anchor="middle" font-weight="400">CIE 1931 xy</text><ellipse cx="816.1" cy="727.4" rx="4.8" ry="4.3" fill="#b8b8b8" stroke="#000" stroke-width="1.4"/><circle cx="799.4" cy="742.6" r="4.1" fill="#fff" stroke="#000" stroke-width="1.4"/><rect x="800.1" y="769.8" width="13.6" height="13.6" fill="none" stroke="#000" stroke-width="2.6"/></svg>
</body></html>
